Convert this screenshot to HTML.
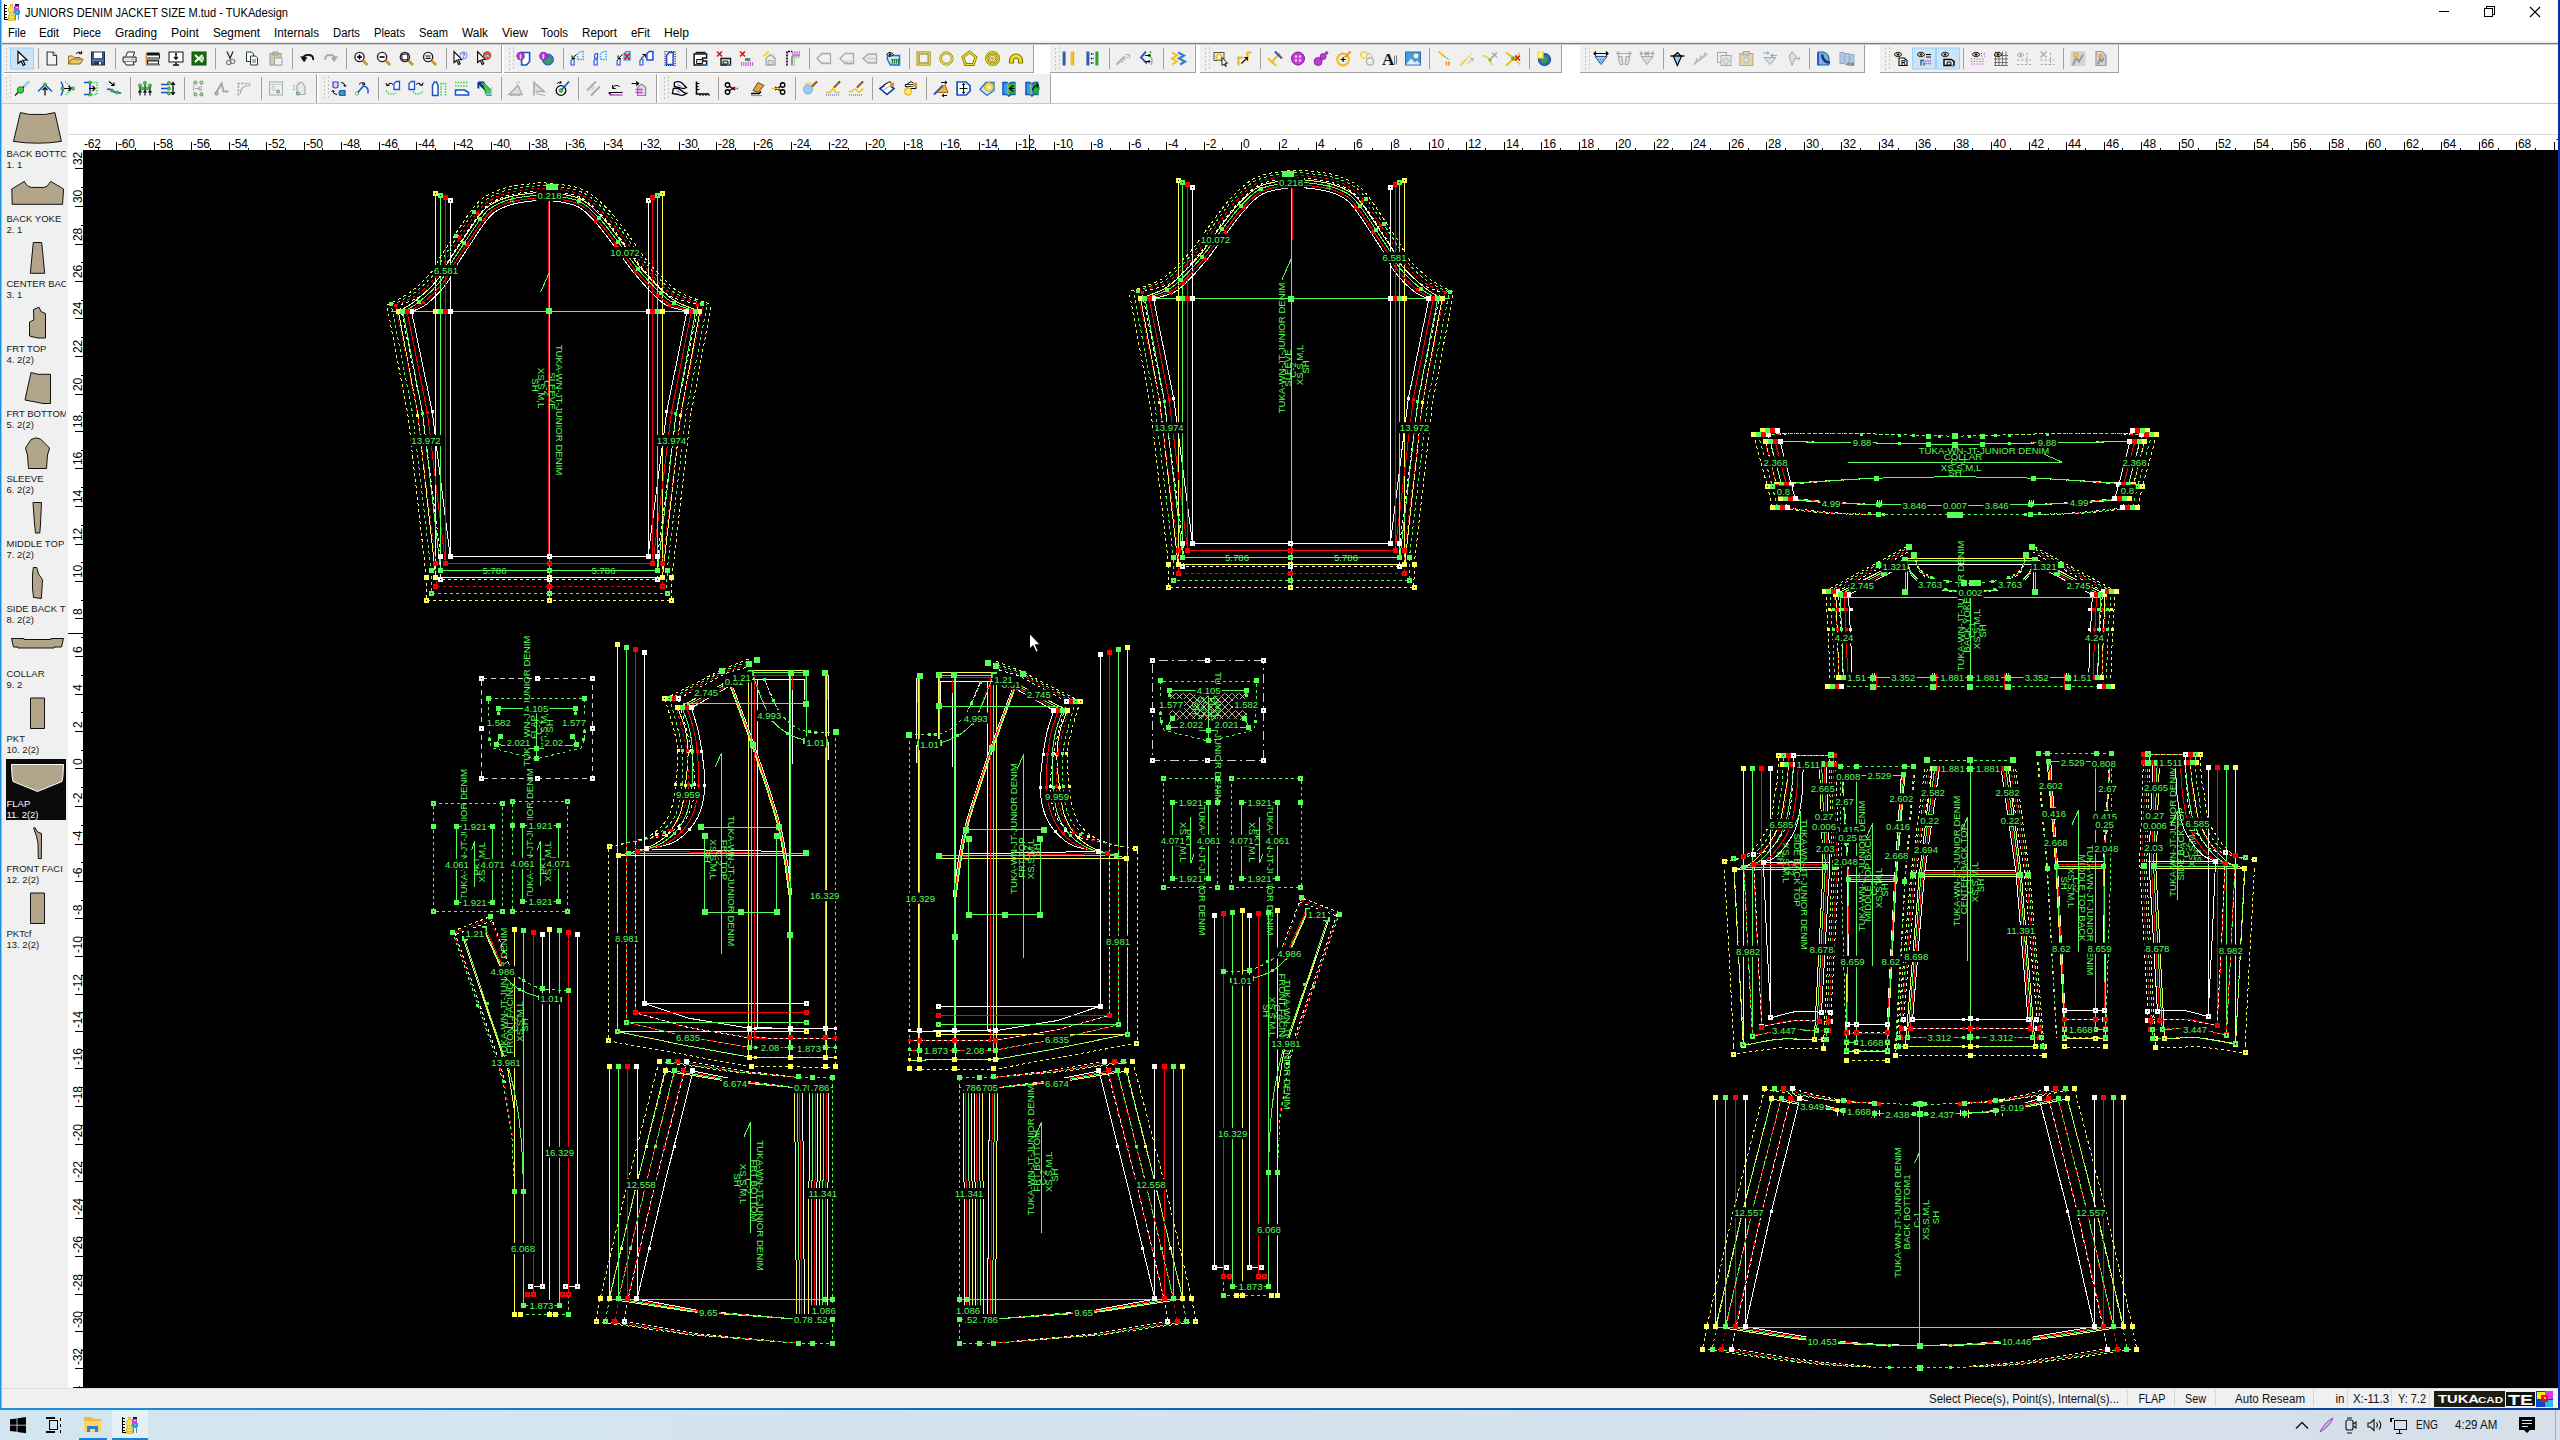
<!DOCTYPE html><html><head><meta charset="utf-8"><title>TUKAdesign</title><style>html,body{margin:0;padding:0;background:#fff;overflow:hidden}body{width:2560px;height:1440px;font-family:"Liberation Sans", sans-serif}svg{display:block;position:absolute;left:0;top:0;font-family:"Liberation Sans", sans-serif}text{white-space:pre}</style></head><body><svg width="2560" height="1440" viewBox="0 0 2560 1440"><defs><linearGradient id="tb" x1="0" x2="1" y1="0" y2="0"><stop offset="0" stop-color="#d2e6f0"/><stop offset="1" stop-color="#d6dfea"/></linearGradient><linearGradient id="bd" x1="0" x2="1" y1="0" y2="0"><stop offset="0" stop-color="#1a8fe0"/><stop offset=".4" stop-color="#0a6cc4"/><stop offset="1" stop-color="#0a3aa8"/></linearGradient><clipPath id="cv"><rect x="83" y="150" width="2475" height="1238"/></clipPath><clipPath id="sb"><rect x="2" y="104" width="64" height="1284"/></clipPath></defs><rect x="0" y="0" width="2560" height="1440" fill="#fff"/><g shape-rendering="crispEdges"><path d="M4.5 4v16M4.5 5.500h2.500M4.500 8.500h2M4.500 11.500h2.500M4.500 14.500h2M4.500 17.500h2.500M4.500 19.500h3" stroke="#000" fill="none"/><path d="M10 4.500h2.500v2.500l1.500 1.500v2.500l-1 1.500 .500 1 1 2v4.500h-6.500v-4.500l1-2 .500-1-1-1.500v-2.500l1.500-1.500z" fill="#f2e25a" stroke="#c8a800" stroke-width=".7"/><path d="M9 12h4M9 15h4.500M8.500 18h5.500" stroke="#d8b820" stroke-width=".7" fill="none"/><path d="M13.500 5.500l1.500 .500 1.500-1 1.500 1 1.500-.500-.800 2.500v1.500h-4.400v-1.500z" fill="#d23be0"/><rect x="15" y="4" width="3.500" height="1.500" fill="#222"/><rect x="16" y="6.500" width="1.500" height="1.500" fill="#f6d8fa"/><path d="M14 10h5.500l.500 4-1 .500v5.500h-1.500v-5.500h-1.500v5.500h-1.500v-5.500l-1-.500z" fill="#3a8fe8"/><rect x="16" y="11" width="1.500" height="1.500" fill="#3fd06a"/></g><text x="25" y="17" font-size="12" fill="#000" textLength="263" lengthAdjust="spacingAndGlyphs">JUNIORS DENIM JACKET SIZE M.tud - TUKAdesign</text><g stroke="#000" stroke-width="1" fill="none" shape-rendering="crispEdges"><path d="M2439 11.5h10"/><path d="M2484.5 8.5h8v8h-8z M2486.5 8.5v-2h8v8h-2"/></g><path d="M2530 7l10 10M2540 7l-10 10" stroke="#000" stroke-width="1.1" fill="none"/><text x="8" y="37" font-size="12" fill="#000" textLength="18" lengthAdjust="spacingAndGlyphs">File</text><text x="39" y="37" font-size="12" fill="#000" textLength="20" lengthAdjust="spacingAndGlyphs">Edit</text><text x="73" y="37" font-size="12" fill="#000" textLength="28" lengthAdjust="spacingAndGlyphs">Piece</text><text x="115" y="37" font-size="12" fill="#000" textLength="42" lengthAdjust="spacingAndGlyphs">Grading</text><text x="171" y="37" font-size="12" fill="#000" textLength="28" lengthAdjust="spacingAndGlyphs">Point</text><text x="213" y="37" font-size="12" fill="#000" textLength="47" lengthAdjust="spacingAndGlyphs">Segment</text><text x="274" y="37" font-size="12" fill="#000" textLength="45" lengthAdjust="spacingAndGlyphs">Internals</text><text x="333" y="37" font-size="12" fill="#000" textLength="27" lengthAdjust="spacingAndGlyphs">Darts</text><text x="374" y="37" font-size="12" fill="#000" textLength="31" lengthAdjust="spacingAndGlyphs">Pleats</text><text x="419" y="37" font-size="12" fill="#000" textLength="29" lengthAdjust="spacingAndGlyphs">Seam</text><text x="462" y="37" font-size="12" fill="#000" textLength="26" lengthAdjust="spacingAndGlyphs">Walk</text><text x="502" y="37" font-size="12" fill="#000" textLength="26" lengthAdjust="spacingAndGlyphs">View</text><text x="541" y="37" font-size="12" fill="#000" textLength="27" lengthAdjust="spacingAndGlyphs">Tools</text><text x="582" y="37" font-size="12" fill="#000" textLength="35" lengthAdjust="spacingAndGlyphs">Report</text><text x="631" y="37" font-size="12" fill="#000" textLength="19" lengthAdjust="spacingAndGlyphs">eFit</text><text x="664" y="37" font-size="12" fill="#000" textLength="25" lengthAdjust="spacingAndGlyphs">Help</text><rect x="2" y="41" width="2556" height="2" fill="#f0f0f0"/><rect x="2" y="43" width="2556" height="1.600" fill="#7a7a7a"/><rect x="2" y="44.600" width="2556" height="59" fill="#fff"/><rect x="4" y="45" width="498" height="28" fill="#f0f0f0"/><rect x="501" y="45" width="1" height="28" fill="#a0a0a0"/><rect x="4" y="72" width="498" height="1" fill="#a0a0a0"/><path d="M6 49h1M10 48h1M6 53h1M10 52h1M6 57h1M10 56h1M6 61h1M10 60h1M6 65h1M10 64h1M6 69h1M10 68h1" stroke="#b4b4b4" stroke-width="1.4" fill="none"/><rect x="10.5" y="48" width="23" height="21" fill="#cce4f7" stroke="#99d1ff" stroke-width="1"/><g transform="translate(14.0,50.5)"><path d="M4 1v12l3-2.500 2.200 4.500 1.800-.900-2.200-4.400 4.200-.200z" stroke="#000" fill="#fff" stroke-width="1.2" /></g><rect x="38.0" y="48" width="1" height="21" fill="#a0a0a0"/><g transform="translate(43.6,50.5)"><path d="M3.500 1.500h6l3.500 3.500v9.500h-9.500z" stroke="#2a3a3a" fill="#f4f4f4" stroke-width="1.1" /><path d="M9.500 1.500v3.500h3.500" stroke="#2a3a3a" fill="#ddd" stroke-width="1" /></g><g transform="translate(67.6,50.5)"><path d="M1 13.500v-8h4l1.500 1.500h6v2" stroke="#8a6a1a" fill="#f3d98a" stroke-width="1" /><path d="M1 13.500l3-5h11.500l-3 5z" stroke="#8a6a1a" fill="#e9c765" stroke-width="1" /><path d="M8.500 3q3-3 5.500 0M14 .500v2.700h-2.700" stroke="#000" fill="none" stroke-width="1" /></g><g transform="translate(90.0,50.5)"><rect x="1.5" y="1.5" width="13" height="13" fill="#3e5c7a" stroke="#1c2c3c"/><rect x="4" y="2" width="8" height="5.5" fill="#fff" stroke="none"/><rect x="2.5" y="9" width="11" height="2" fill="#5a78d8" stroke="none"/><rect x="4.5" y="11" width="7" height="3.5" fill="#26364a" stroke="none"/><rect x="9" y="11.5" width="2" height="2.5" fill="#fff" stroke="none"/></g><rect x="115.0" y="48" width="1" height="21" fill="#a0a0a0"/><g transform="translate(121.6,50.5)"><path d="M4 6l2-4.500h7l-1.500 4.500" stroke="#222" fill="#fff" stroke-width="1" /><path d="M1.500 6.500h13v5h-13z" stroke="#222" fill="#e4e4e4" stroke-width="1" /><path d="M3 11.500l1.500 3h8l-1-3" stroke="#222" fill="#f6f6f6" stroke-width="1" /><rect x="10" y="8" width="2.5" height="1.2" fill="#3fd04a" stroke="none"/></g><g transform="translate(145.0,50.5)"><rect x="1.5" y="2" width="13" height="2.5" fill="#111" stroke="none"/><rect x="1.5" y="4.5" width="13" height="3" fill="#fff" stroke="#111"/><rect x="1.5" y="8" width="13" height="2.5" fill="#8a8a8a" stroke="none"/><rect x="2.5" y="10.5" width="11" height="3" fill="#fff" stroke="#111"/><rect x="1" y="13.5" width="14" height="1.5" fill="#777" stroke="none"/><rect x="0.5" y="3" width="1.5" height="10" fill="#e8962a" stroke="none"/></g><g transform="translate(168.0,50.5)"><rect x="1" y="1.5" width="14" height="10" fill="#fff" stroke="#111"/><path d="M5 14.500h6M8 11.500v3" stroke="#111" fill="none" stroke-width="1.4" /><path d="M8 3.500v5M6 6.500l2 2.200 2-2.200" stroke="#000" fill="none" stroke-width="1.2" /><circle cx="8" cy="3.5" r="1" fill="#000" stroke="#000" stroke-width="0"/></g><g transform="translate(191.0,50.5)"><rect x="1" y="1.5" width="14" height="13" fill="#1e6a12" stroke="#0f4a08"/><path d="M4 4.500l7.500 7M11.500 4.500l-7.500 7" stroke="#fff" fill="none" stroke-width="1.8" /><rect x="9" y="6" width="4" height="4" fill="#b8e0a8" stroke="none"/></g><rect x="215.0" y="48" width="1" height="21" fill="#a0a0a0"/><g transform="translate(222.0,50.5)"><path d="M5 1l3.500 8M11 1l-3 7" stroke="#222" fill="none" stroke-width="1.2" /><circle cx="6.8" cy="12" r="2.2" fill="none" stroke="#777" stroke-width="1.1"/><circle cx="10.5" cy="11" r="2.2" fill="none" stroke="#777" stroke-width="1.1"/></g><g transform="translate(244.0,50.5)"><path d="M2.500 1.500h5l2 2v7.500h-7z" stroke="#2a3a3a" fill="#fff" stroke-width="1" /><path d="M6.500 5.500h5l2 2v7h-7z" stroke="#2a3a3a" fill="#fff" stroke-width="1" /><path d="M8 9.500h4M8 11.500h4" stroke="#2a3a3a" fill="none" stroke-width="0.8" /></g><g transform="translate(268.0,50.5)"><rect x="2" y="3" width="11" height="11.5" fill="#d6c9a6" stroke="#9a9a9a"/><rect x="5" y="1.5" width="5" height="3" fill="#bdbdbd" stroke="#9a9a9a"/><rect x="6.5" y="7.5" width="7.5" height="7" fill="#f2f2f2" stroke="#a2a2a2"/></g><rect x="292.0" y="48" width="1" height="21" fill="#a0a0a0"/><g transform="translate(299.6,50.5)"><path d="M3 9q1-5 6.500-4.500 4.500.500 4 5" stroke="#111" fill="none" stroke-width="1.8" /><path d="M1 6l3.500 5.500 3-4.500z" stroke="#111" fill="#111" stroke-width="0.5" /></g><g transform="translate(322.6,50.5)"><path d="M13 9q-1-5-6.500-4.500-4.500.500-4 5" stroke="#a9a9a9" fill="none" stroke-width="1.8" /><path d="M15 6l-3.500 5.500-3-4.500z" stroke="#a9a9a9" fill="#a9a9a9" stroke-width="0.5" /></g><rect x="346.0" y="48" width="1" height="21" fill="#a0a0a0"/><g transform="translate(353.0,50.5)"><circle cx="6.5" cy="6.5" r="4.6" fill="#fff" stroke="#222" stroke-width="1.4"/><path d="M10 10l4.500 4.500" stroke="#c8962a" fill="none" stroke-width="2.6" /><path d="M4 6.500h5M6.500 4v5" stroke="#000" fill="none" stroke-width="1.6" /></g><g transform="translate(375.6,50.5)"><circle cx="6.5" cy="6.5" r="4.6" fill="#fff" stroke="#222" stroke-width="1.4"/><path d="M10 10l4.500 4.500" stroke="#c8962a" fill="none" stroke-width="2.6" /><path d="M4 6.500h5" stroke="#000" fill="none" stroke-width="1.6" /></g><g transform="translate(398.4,50.5)"><circle cx="6.5" cy="6.5" r="4.6" fill="#fff" stroke="#222" stroke-width="1.4"/><path d="M10 10l4.500 4.500" stroke="#c8962a" fill="none" stroke-width="2.6" /><rect x="3.6" y="3.6" width="5.8" height="5.8" fill="none" stroke="#000"/></g><g transform="translate(421.6,50.5)"><circle cx="6.5" cy="6.5" r="4.6" fill="#fff" stroke="#222" stroke-width="1.4"/><path d="M10 10l4.500 4.500" stroke="#c8962a" fill="none" stroke-width="2.6" /><path d="M4 5.500h5M4 7.800h5" stroke="#000" fill="none" stroke-width="1.2" /></g><rect x="446.0" y="48" width="1" height="21" fill="#a0a0a0"/><g transform="translate(452.0,50.5)"><path d="M2 1v11l2.600-2.200 2 4.200 1.600-.800-2-4 3.600-.200z" stroke="#000" fill="#fff" stroke-width="1.1" /><circle cx="11.5" cy="5" r="3.6" fill="#e8eefc" stroke="#6a80d8" stroke-width="1"/><text x="9.600" y="7.500" font-size="6.500" font-weight="bold" fill="#3a58c8">?</text></g><g transform="translate(475.6,50.5)"><path d="M2 1v11l2.600-2.200 2 4.200 1.600-.800-2-4 3.600-.200z" stroke="#000" fill="#fff" stroke-width="1.1" /><circle cx="11.5" cy="5" r="3.4" fill="#3a8fe8" stroke="#e23a2a" stroke-width="1.6"/><path d="M9.500 6.500q2-3 4 0" stroke="#f0c020" fill="none" stroke-width="1.4" /></g><rect x="504" y="45" width="530" height="28" fill="#f0f0f0"/><rect x="1033" y="45" width="1" height="28" fill="#a0a0a0"/><rect x="504" y="72" width="530" height="1" fill="#a0a0a0"/><path d="M509 49h1M513 48h1M509 53h1M513 52h1M509 57h1M513 56h1M509 61h1M513 60h1M509 65h1M513 64h1M509 69h1M513 68h1" stroke="#b4b4b4" stroke-width="1.4" fill="none"/><g transform="translate(515.6,50.5)"><path d="M6 2h8v9l-3 3.500h-5z" stroke="#1a4fd0" fill="#fff" stroke-width="1.6" /><circle cx="5" cy="5.5" r="3.8" fill="#c43ad8" stroke="#7a1a98" stroke-width="0.8"/><text x="3.900" y="8" font-size="7" font-weight="bold" fill="#fff">i</text></g><g transform="translate(538.4,50.5)"><circle cx="9.5" cy="9" r="5.6" fill="#3a78c8" stroke="#1f4f8a" stroke-width="0.8"/><path d="M6 10q3-4 7-1 0 4-4 5z" stroke="#3ea04a" fill="#3ea04a" stroke-width="0.3" /><circle cx="5" cy="5.5" r="3.8" fill="#c43ad8" stroke="#7a1a98" stroke-width="0.8"/><text x="3.900" y="8" font-size="7" font-weight="bold" fill="#fff">i</text></g><rect x="563.0" y="48" width="1" height="21" fill="#a0a0a0"/><g transform="translate(569.6,50.5)"><path d="M1.500 14.500v-4.500l1.500-1.500h1.500v6z" stroke="#1a4fd0" fill="#fff" stroke-width="1.1" /><path d="M8 9v-6l2.500-2h3v8z" stroke="#2a8fe0" fill="none" stroke-width="1.3" stroke-dasharray="1.200 1.200"/><path d="M7 4l-4.500 4M2.500 5v3h3" stroke="#000" fill="none" stroke-width="1" /></g><g transform="translate(592.6,50.5)"><path d="M1.500 14.500v-4.500l1.500-1.500h1.500v6z" stroke="#1a4fd0" fill="#fff" stroke-width="1.1" /><path d="M2 7.500v-3l1.500-1.500h1.500v4.500z" stroke="#1a4fd0" fill="#fff" stroke-width="1.1" /><path d="M8 9v-6l2.500-2h3v8z" stroke="#2a8fe0" fill="none" stroke-width="1.3" stroke-dasharray="1.200 1.200"/></g><g transform="translate(615.6,50.5)"><path d="M1.500 14.500v-4.500l1.500-1.500h1.500v6z" stroke="#1a4fd0" fill="#fff" stroke-width="1.1" /><path d="M8.500 9.500v-6.500l2.500-2h3.500v8.500z" stroke="#2a8fe0" fill="#9ccdf0" stroke-width="1.2" /><path d="M9 3l5 6M14 3l-5 6" stroke="#e01010" fill="none" stroke-width="1.6" /><path d="M7 4l-4.500 4M2.500 5v3h3" stroke="#000" fill="none" stroke-width="1" /></g><g transform="translate(638.4,50.5)"><path d="M1.500 14.500v-4.500l1.500-1.500h1.500v6z" stroke="#1a4fd0" fill="#fff" stroke-width="1.1" /><path d="M8.500 9.500v-6.500l2.500-2h3.500v8.500z" stroke="#1a4fd0" fill="#fff" stroke-width="1.5" /><path d="M2.500 8l4.500-4M7 7v-3h-3" stroke="#000" fill="none" stroke-width="1" /></g><g transform="translate(661.6,50.5)"><path d="M5 14v-9l2.500-3h4v12z" stroke="#1a4fd0" fill="#fff" stroke-width="1.5" /><path d="M3.500 15v-14h10v14z" stroke="#000" fill="none" stroke-width="1.1" stroke-dasharray="1 1.200"/></g><rect x="686.0" y="48" width="1" height="21" fill="#a0a0a0"/><g transform="translate(692.6,50.5)"><path d="M1.500 3.500h12.500v4h-4v3h4v4h-12.500z" stroke="#111" fill="#fff" stroke-width="1.5" /><path d="M3 2h10" stroke="#111" fill="none" stroke-width="1.4" /><path d="M4 9h6v4h-6z" stroke="#111" fill="#ddd" stroke-width="1" /><path d="M10 14.500h5" stroke="#2a8fe0" fill="none" stroke-width="1.4" /></g><g transform="translate(716.0,50.5)"><path d="M5 8h9.500v6.500h-9.500z" stroke="#111" fill="#fff" stroke-width="1.4" /><path d="M7 10.500h5v3h-5z" stroke="#111" fill="#ddd" stroke-width="1" /><path d="M1 1l5 5M6 1l-5 5" stroke="#e01010" fill="none" stroke-width="1.6" /><path d="M11 14.500h4" stroke="#2a8fe0" fill="none" stroke-width="1.2" /></g><g transform="translate(739.0,50.5)"><path d="M1 1l5 5M6 1l-5 5" stroke="#e01010" fill="none" stroke-width="1.6" /><rect x="6" y="7.5" width="5" height="3" fill="#3ea04a" stroke="none"/><path d="M2 12.500h13M2 14.500h13" stroke="#c43ad8" fill="none" stroke-width="1.6" stroke-dasharray="1.200 1"/><path d="M11 8v4" stroke="#c43ad8" fill="none" stroke-width="1.2" stroke-dasharray="1 1"/></g><g transform="translate(762.0,50.5)"><path d="M1 6l6-5" stroke="#f0e020" fill="none" stroke-width="2" /><path d="M4 8l4.500-4 4.500 4v6.500h-9z" stroke="#a9a9a9" fill="none" stroke-width="1.4" /><path d="M6 10h5v4h-5z" stroke="#a9a9a9" fill="#ddd" stroke-width="1" /><path d="M12 3v5" stroke="#a9a9a9" fill="none" stroke-width="1" stroke-dasharray="1 1"/></g><g transform="translate(785.0,50.5)"><path d="M2 15v-14h5" stroke="#000" fill="none" stroke-width="1.6" stroke-dasharray="2 1"/><path d="M7 1.500h8M7 3.500h8" stroke="#c43ad8" fill="none" stroke-width="1.5" stroke-dasharray="1.200 1"/><path d="M7 15v-7q0-3 3-3h5" stroke="#999" fill="none" stroke-width="2.2" /><path d="M9.500 15v-6q0-2 2-2h3.500" stroke="#3fd04a" fill="none" stroke-width="1.2" stroke-dasharray="1 1"/></g><rect x="809.0" y="48" width="1" height="21" fill="#a0a0a0"/><g transform="translate(816.0,50.5)"><path d="M1 8l5-5h8.500v10h-8.500z" stroke="#a9a9a9" fill="none" stroke-width="1.3" /><path d="M6 13v-2M8 13v-2M10 13v-2M12 13v-2M6 3.500h8" stroke="#a9a9a9" fill="none" stroke-width="1" stroke-dasharray="1 1"/></g><g transform="translate(839.0,50.5)"><path d="M1 8l5-5h8.500v10h-8.500z" stroke="#a9a9a9" fill="none" stroke-width="1.3" /><path d="M6 10l4 4M10 10l-4 4M12 10v4" stroke="#a9a9a9" fill="none" stroke-width="1" /></g><g transform="translate(862.0,50.5)"><path d="M1 8l5-4.500h8.500v9h-8.500z" stroke="#a9a9a9" fill="#e6e6e6" stroke-width="1.3" /><path d="M6 8h7" stroke="#a9a9a9" fill="none" stroke-width="1" stroke-dasharray="1 1"/></g><g transform="translate(885.0,50.5)"><path d="M2 8l1-3h11.500v9.500h-9z" stroke="#1a6fd0" fill="#cfe6fa" stroke-width="1.5" /><rect x="6" y="8.5" width="8" height="4.5" fill="#1e7a2a" stroke="none"/><path d="M6.500 9v4M8.500 9v4M10.500 9v4M12.500 9v4" stroke="#d8f0c0" fill="none" stroke-width="0.8" /><path d="M1.500 4q3.500-4 7 0-3.500 3.500-7 0z" stroke="#000" fill="#fff" stroke-width="1" /><circle cx="5" cy="4" r="1.3" fill="#000" stroke="#000" stroke-width="0"/></g><rect x="909.0" y="48" width="1" height="21" fill="#a0a0a0"/><g transform="translate(915.6,50.5)"><rect x="1.5" y="1.5" width="13" height="13" fill="none" stroke="#8a7a00"/><rect x="2.5" y="2.5" width="11" height="11" fill="none" stroke="#f4e020"/><rect x="3.5" y="3.5" width="9" height="9" fill="none" stroke="#8a7a00"/></g><g transform="translate(938.4,50.5)"><circle cx="8" cy="8" r="6.6" fill="none" stroke="#8a7a00" stroke-width="1"/><circle cx="8" cy="8" r="5.7" fill="none" stroke="#f4e020" stroke-width="1.2"/><circle cx="8" cy="8" r="4.8" fill="none" stroke="#8a7a00" stroke-width="0.8"/></g><g transform="translate(961.4,50.5)"><path d="M8 1.500l6.500 5-2.500 7.500h-8l-2.500-7.500z" stroke="#8a7a00" fill="none" stroke-width="2.8" /><path d="M8 1.500l6.500 5-2.500 7.500h-8l-2.500-7.500z" stroke="#f4e020" fill="none" stroke-width="1.2" /></g><g transform="translate(984.6,50.5)"><circle cx="8" cy="8" r="6.5" fill="none" stroke="#8a7a00" stroke-width="2.2"/><circle cx="8" cy="8" r="6.5" fill="none" stroke="#f4e020" stroke-width="1"/><circle cx="8" cy="8" r="3.8" fill="none" stroke="#8a7a00" stroke-width="2.2"/><circle cx="8" cy="8" r="3.8" fill="none" stroke="#f4e020" stroke-width="1"/><circle cx="8" cy="8" r="1.2" fill="#f4e020" stroke="#8a7a00" stroke-width="0.8"/></g><g transform="translate(1008.0,50.5)"><path d="M1.500 12.500v-2.500a6.500 6.500 0 0 1 13 0v2.500h-4v-2.500a2.500 2.500 0 0 0-5 0v2.500z" stroke="#8a7a00" fill="#f4e020" stroke-width="1.2" /></g><rect x="1050" y="45" width="146" height="28" fill="#f0f0f0"/><rect x="1195" y="45" width="1" height="28" fill="#a0a0a0"/><rect x="1050" y="72" width="146" height="1" fill="#a0a0a0"/><path d="M1055 49h1M1059 48h1M1055 53h1M1059 52h1M1055 57h1M1059 56h1M1055 61h1M1059 60h1M1055 65h1M1059 64h1M1055 69h1M1059 68h1" stroke="#b4b4b4" stroke-width="1.4" fill="none"/><g transform="translate(1060.6,50.5)"><rect x="2" y="1" width="3" height="14" fill="#3a5aa8" stroke="none"/><rect x="10" y="1" width="2.6" height="14" fill="#f0c020" stroke="none"/><rect x="12.6" y="1" width="1" height="14" fill="#e8962a" stroke="none"/></g><g transform="translate(1084.4,50.5)"><rect x="2" y="1" width="3" height="14" fill="#3a5aa8" stroke="none"/><rect x="11" y="1" width="3" height="14" fill="#22a82a" stroke="none"/><path d="M6.500 3.500h3M6.500 8h3M6.500 12.500h3" stroke="#000" fill="none" stroke-width="1.3" stroke-dasharray="1.500 1"/></g><rect x="1109.0" y="48" width="1" height="21" fill="#a0a0a0"/><g transform="translate(1115.6,50.5)"><path d="M1 14l8-8" stroke="#9ab0c8" fill="none" stroke-width="2" /><path d="M6 12l8-8M14 8v-4h-4" stroke="#a9a9a9" fill="none" stroke-width="1.1" stroke-dasharray="2 1"/></g><g transform="translate(1139.0,50.5)"><path d="M7 1l-5 6 6 6" stroke="#3a5aa8" fill="none" stroke-width="2" /><path d="M12 1q-2 3 0 6t0 7" stroke="#22a82a" fill="none" stroke-width="1.4" stroke-dasharray="1.500 1"/><path d="M6 5h5M6 11h5M9.500 3.500l1.500 1.500-1.500 1.500M9.500 9.500l1.500 1.500-1.500 1.500" stroke="#000" fill="none" stroke-width="1" /></g><rect x="1163.0" y="48" width="1" height="21" fill="#a0a0a0"/><g transform="translate(1170.0,50.5)"><path d="M2 2l5 3-5 3 5 3-5 3" stroke="#f0c020" fill="none" stroke-width="2" /><path d="M8 2l6 3-5 3 6 3-5 3" stroke="#3a78c8" fill="none" stroke-width="2.2" /></g><rect x="1200" y="45" width="362" height="28" fill="#f0f0f0"/><rect x="1561" y="45" width="1" height="28" fill="#a0a0a0"/><rect x="1200" y="72" width="362" height="1" fill="#a0a0a0"/><path d="M1205 49h1M1209 48h1M1205 53h1M1209 52h1M1205 57h1M1209 56h1M1205 61h1M1209 60h1M1205 65h1M1209 64h1M1205 69h1M1209 68h1" stroke="#b4b4b4" stroke-width="1.4" fill="none"/><g transform="translate(1213.0,50.5)"><rect x="1" y="2" width="10" height="8" fill="none" stroke="#555"/><circle cx="6" cy="6.5" r="2.8" fill="none" stroke="#f0c020" stroke-width="1.6"/><path d="M9 7v8l2-1.500 1.500 2.500 1-.500-1.500-2.500 2.500-.300z" stroke="#000" fill="#fff" stroke-width="0.9" /></g><g transform="translate(1236.4,50.5)"><path d="M2 15v-8h5M11 10v-8h4" stroke="#e8b81a" fill="none" stroke-width="2.2" /><path d="M5 13l6-6M11 10v-3h-3" stroke="#000" fill="none" stroke-width="1.1" /></g><rect x="1260.0" y="48" width="1" height="21" fill="#a0a0a0"/><g transform="translate(1267.0,50.5)"><path d="M1 8l8 7" stroke="#f0c020" fill="none" stroke-width="2.2" /><path d="M5 11l8-8" stroke="#f0c020" fill="none" stroke-width="2.2" /><path d="M8 1l7 7" stroke="#3a5aa8" fill="none" stroke-width="2.2" /></g><g transform="translate(1290.0,50.5)"><circle cx="8" cy="8" r="6.5" fill="#c43ad8" stroke="#7a1a98" stroke-width="1"/><circle cx="6" cy="6" r="1.2" fill="#f4d8fa" stroke="none" stroke-width="0"/><circle cx="10" cy="6" r="1.2" fill="#f4d8fa" stroke="none" stroke-width="0"/><circle cx="6" cy="10" r="1.2" fill="#f4d8fa" stroke="none" stroke-width="0"/><circle cx="10" cy="10" r="1.2" fill="#f4d8fa" stroke="none" stroke-width="0"/></g><g transform="translate(1312.6,50.5)"><circle cx="5.5" cy="11" r="4" fill="#c43ad8" stroke="#7a1a98" stroke-width="0.8"/><circle cx="10.5" cy="6" r="3" fill="#c43ad8" stroke="#7a1a98" stroke-width="0.8"/><circle cx="14" cy="2.5" r="1.4" fill="#c43ad8" stroke="#7a1a98" stroke-width="0.6"/></g><g transform="translate(1335.6,50.5)"><circle cx="7.5" cy="9" r="5.8" fill="none" stroke="#f0c020" stroke-width="2.2"/><path d="M7.500 6.500v5M5 9h5" stroke="#000" fill="none" stroke-width="1.2" /><path d="M9 7l6-6" stroke="#e8962a" fill="none" stroke-width="2" /></g><g transform="translate(1359.0,50.5)"><circle cx="5" cy="4.5" r="3.2" fill="none" stroke="#e8d84a" stroke-width="1.6"/><circle cx="11" cy="11" r="3.6" fill="none" stroke="#a9a9a9" stroke-width="1.3"/><path d="M9 3q4 0 4 4" stroke="#a9a9a9" fill="none" stroke-width="1.1" stroke-dasharray="1.500 1"/></g><g transform="translate(1382.0,50.5)"><text x="0" y="14.500" font-size="17" font-weight="bold" font-family="Liberation Serif, serif" fill="#111">A</text><path d="M12.500 5v9M14.500 5v9" stroke="#777" fill="none" stroke-width="1" /></g><g transform="translate(1405.0,50.5)"><rect x="0.5" y="1.5" width="15" height="13" fill="#4a98e0" stroke="#2a68b0"/><circle cx="11" cy="5.5" r="2.4" fill="#fdf6c8" stroke="none" stroke-width="0"/><path d="M1 14l5-6 4 4 2-2 3 3v1z" stroke="none" fill="#d8ecfa" stroke-width="0" /></g><rect x="1429.0" y="48" width="1" height="21" fill="#a0a0a0"/><g transform="translate(1436.4,50.5)"><path d="M2 1l6 5" stroke="#f0c020" fill="none" stroke-width="2" /><path d="M8 6l5 3" stroke="#3fd04a" fill="none" stroke-width="1.4" stroke-dasharray="1.500 1"/><path d="M10 11v4M12.500 11v4" stroke="#e8962a" fill="none" stroke-width="1.6" /></g><g transform="translate(1459.0,50.5)"><path d="M1 15l6-6" stroke="#e8d84a" fill="none" stroke-width="2" /><path d="M7 9l7-7" stroke="#e8d84a" fill="none" stroke-width="2" stroke-dasharray="2 1.500"/><path d="M9 13l5-5M14 11v-3h-3" stroke="#a9a9a9" fill="none" stroke-width="1" /></g><g transform="translate(1482.0,50.5)"><path d="M1 5q5 1 7 5t2 5" stroke="#e8d84a" fill="none" stroke-width="2" /><path d="M7 10l7-7" stroke="#a9a9a9" fill="none" stroke-width="1.4" /><path d="M10 2l5 5M15 2l-5 5" stroke="#a9a9a9" fill="none" stroke-width="1.2" /><circle cx="8" cy="9.5" r="1.5" fill="#3fd04a" stroke="none" stroke-width="0"/></g><g transform="translate(1505.0,50.5)"><path d="M1 2l8 6-8 7" stroke="#f0c020" fill="none" stroke-width="2" /><path d="M9 8l6-6M9 8l6 6" stroke="#f0c020" fill="none" stroke-width="1.2" /><path d="M10 5l5 5M15 5l-5 5" stroke="#e01010" fill="none" stroke-width="1.6" /><circle cx="8" cy="8" r="1.6" fill="#3fd04a" stroke="#1a7a22" stroke-width="0.5"/></g><rect x="1529.0" y="48" width="1" height="21" fill="#a0a0a0"/><g transform="translate(1536.0,50.5)"><circle cx="8.5" cy="9" r="6.2" fill="#2a68c0" stroke="#1a3f7a" stroke-width="0.8"/><path d="M5 8q2-3 5-2 3 2 1 5-2 3-5 1-2-2-1-4z" stroke="none" fill="#3ea04a" stroke-width="0" /><path d="M2 1.500h5v6h-5z" stroke="#f0d820" fill="#fff8a0" stroke-width="1.2" /></g><rect x="1580" y="45" width="285" height="28" fill="#f0f0f0"/><rect x="1864" y="45" width="1" height="28" fill="#a0a0a0"/><rect x="1580" y="72" width="285" height="1" fill="#a0a0a0"/><path d="M1585 49h1M1589 48h1M1585 53h1M1589 52h1M1585 57h1M1589 56h1M1585 61h1M1589 60h1M1585 65h1M1589 64h1M1585 69h1M1589 68h1" stroke="#b4b4b4" stroke-width="1.4" fill="none"/><g transform="translate(1593.0,50.5)"><path d="M2 6h12l-6 8z" stroke="#2a5a9a" fill="#9ccdf0" stroke-width="1" /><path d="M1 3h14M3 1l-2 2 2 2M13 1l2 2-2 2" stroke="#000" fill="none" stroke-width="1.2" /><path d="M5 9h6M6.500 11h3" stroke="#2a5a9a" fill="none" stroke-width="0.8" stroke-dasharray="1 1"/></g><g transform="translate(1616.0,50.5)"><path d="M2 6h4l1 8h-3zM10 6h4l-2 8h-3z" stroke="#a9a9a9" fill="#cfe0ee" stroke-width="1" /><path d="M1 3h14M3 1l-2 2 2 2M13 1l2 2-2 2" stroke="#a9a9a9" fill="none" stroke-width="1.1" /></g><g transform="translate(1639.0,50.5)"><path d="M2 6h12l-6 8z" stroke="#a9a9a9" fill="#cfe0ee" stroke-width="1" /><path d="M1 3h14M3 1l-2 2 2 2M13 1l2 2-2 2M6 1l4 4M10 1l-4 4" stroke="#a9a9a9" fill="none" stroke-width="1.1" /></g><rect x="1663.0" y="48" width="1" height="21" fill="#a0a0a0"/><g transform="translate(1669.4,50.5)"><path d="M8 2l4 4-4 9-4-9z" stroke="#000" fill="#9ccdf0" stroke-width="1.2" /><path d="M1 5.500h14" stroke="#000" fill="none" stroke-width="1.4" /></g><g transform="translate(1692.6,50.5)"><path d="M1 14l14-11" stroke="#a9a9a9" fill="none" stroke-width="1.3" /><path d="M3 12l1-4 2 2zM7 9l1-4 2 2zM11 6l1-4 2 2z" stroke="#a9a9a9" fill="#cfe0ee" stroke-width="0.8" /></g><g transform="translate(1716.0,50.5)"><rect x="1.5" y="2" width="9" height="10" fill="#eee" stroke="#a9a9a9"/><rect x="5" y="5" width="10" height="10" fill="#e6e6e6" stroke="#a9a9a9"/><path d="M10 7l3 3-3 5-3-5z" stroke="#a9a9a9" fill="#cfe0ee" stroke-width="0.8" /></g><g transform="translate(1738.4,50.5)"><rect x="1.5" y="3" width="13" height="12" fill="#e8d4a0" stroke="#a9a9a9"/><rect x="5" y="1" width="6" height="3.5" fill="#ccc" stroke="#a9a9a9"/><path d="M8 6l3 3-3 5-3-5z" stroke="#a9a9a9" fill="#cfe0ee" stroke-width="0.8" /></g><g transform="translate(1762.0,50.5)"><path d="M2 7h12l-6 7z" stroke="#a9a9a9" fill="#cfe0ee" stroke-width="1" /><path d="M1 2.500h6M9 5h6M5 1l2 1.500-2 1.500M11 3.500l-2 1.500 2 1.500" stroke="#a9a9a9" fill="none" stroke-width="1.1" /></g><g transform="translate(1785.0,50.5)"><path d="M7 1l4 5-4 9-3-9z" stroke="#a9a9a9" fill="#cfe0ee" stroke-width="1" /><path d="M10 8h5M13 6l2 2-2 2" stroke="#a9a9a9" fill="none" stroke-width="1" /></g><rect x="1809.0" y="48" width="1" height="21" fill="#a0a0a0"/><g transform="translate(1816.0,50.5)"><path d="M2 1.500h6q5 2 5 6v7h-11z" stroke="#2a5a9a" fill="#7ab0e0" stroke-width="1" /><path d="M6 4q1 8 8 8" stroke="#123a7a" fill="none" stroke-width="2.4" /><path d="M2 1.500v13.500" stroke="#1a4fd0" fill="none" stroke-width="1.6" /></g><g transform="translate(1839.0,50.5)"><path d="M1 2h4v11h-4zM6 3h4v11h-4zM11 4h4v11h-4z" stroke="#8aa8c8" fill="#b8cce0" stroke-width="1" /><rect x="8" y="12" width="3" height="3" fill="#888" stroke="none"/><rect x="12" y="12" width="3" height="3" fill="#888" stroke="none"/></g><rect x="1880" y="45" width="239" height="28" fill="#f0f0f0"/><rect x="2118" y="45" width="1" height="28" fill="#a0a0a0"/><rect x="1880" y="72" width="239" height="1" fill="#a0a0a0"/><path d="M1885 49h1M1889 48h1M1885 53h1M1889 52h1M1885 57h1M1889 56h1M1885 61h1M1889 60h1M1885 65h1M1889 64h1M1885 69h1M1889 68h1" stroke="#b4b4b4" stroke-width="1.4" fill="none"/><g transform="translate(1893.0,50.5)"><path d="M1 4q4-4.500 8 0-4 4.500-8 0z" stroke="#000" fill="#fff" stroke-width="1" /><circle cx="5" cy="4" r="1.5" fill="#000" stroke="#e8962a" stroke-width="0.8"/><path d="M6 7.500h5l3 2.500v5h-8z" stroke="#000" fill="#fff" stroke-width="1.1" /><text x="8" y="14" font-size="6.500" font-weight="bold" fill="#000">R</text></g><rect x="1912.5" y="48" width="23" height="21" fill="#cce4f7" stroke="#99d1ff" stroke-width="1"/><g transform="translate(1916.0,50.5)"><path d="M1 4q4-4.500 8 0-4 4.500-8 0z" stroke="#000" fill="#fff" stroke-width="1" /><circle cx="5" cy="4" r="1.5" fill="#000" stroke="#e8962a" stroke-width="0.8"/><path d="M10 4h5M10 6.500h5" stroke="#000" fill="none" stroke-width="1.2" /><path d="M10 4h5" stroke="#f0e020" fill="none" stroke-width="1" transform="translate(0,1.200)"/><path d="M5 15v-5h3M8 15v-3" stroke="#1a4fd0" fill="none" stroke-width="1.4" /><path d="M7 10.500h8M9.500 13h5.500" stroke="#c43ad8" fill="none" stroke-width="1.3" stroke-dasharray="1.200 1"/><path d="M6.500 15v-4" stroke="#f0e020" fill="none" stroke-width="1.2" /></g><rect x="1936.5" y="48" width="23" height="21" fill="#cce4f7" stroke="#99d1ff" stroke-width="1"/><g transform="translate(1940.0,50.5)"><path d="M1 4q4-4.500 8 0-4 4.500-8 0z" stroke="#000" fill="#fff" stroke-width="1" /><circle cx="5" cy="4" r="1.5" fill="#000" stroke="#e8962a" stroke-width="0.8"/><path d="M4 9h7l3 2v4h-10z" stroke="#000" fill="#fff" stroke-width="1.5" /><path d="M7 11.500h4v3h-4z" stroke="#000" fill="#ddd" stroke-width="1" /><path d="M11 15h4" stroke="#2a8fe0" fill="none" stroke-width="1.2" /></g><rect x="1963.0" y="48" width="1" height="21" fill="#a0a0a0"/><g transform="translate(1970.0,50.5)"><path d="M2 4q4-4.500 8 0-4 4.500-8 0z" stroke="#000" fill="#fff" stroke-width="1" /><circle cx="6" cy="4" r="1.5" fill="#000" stroke="#e8962a" stroke-width="0.8"/><path d="M1 8.500h14M1 11h14M1 13.500h14" stroke="#c43ad8" fill="none" stroke-width="1.2" stroke-dasharray="1.200 1.600"/><path d="M11 3h4M11 5.500h4" stroke="#c43ad8" fill="none" stroke-width="1.2" stroke-dasharray="1.200 1.600"/></g><g transform="translate(1993.0,50.5)"><path d="M2.500 1v14M6 1v14M9.500 1v14M13 1v14M1 5h14M1 8.500h14M1 12h14M1 15h14" stroke="#666" fill="none" stroke-width="0.9" /><path d="M1 4q4-4.500 8 0-4 4.500-8 0z" stroke="#000" fill="#fff" stroke-width="1" /><circle cx="5" cy="4" r="1.5" fill="#000" stroke="#e8962a" stroke-width="0.8"/></g><g transform="translate(2016.0,50.5)"><path d="M1 4.500q3.500-4 7 0-3.500 4-7 0z" stroke="#a9a9a9" fill="none" stroke-width="1" /><circle cx="4.5" cy="4.5" r="1.2" fill="#a9a9a9" stroke="#a9a9a9" stroke-width="0"/><path d="M1 9.500h14M1 14h14M11 2v12" stroke="#a9a9a9" fill="none" stroke-width="1" stroke-dasharray="2.500 1.500"/></g><g transform="translate(2039.5,50.5)"><path d="M1 1l6 6M7 1l-6 6" stroke="#a9a9a9" fill="none" stroke-width="1.2" /><path d="M1 9.500h14M1 14h14M11 2v12" stroke="#a9a9a9" fill="none" stroke-width="1" stroke-dasharray="2.500 1.500"/></g><rect x="2063.0" y="48" width="1" height="21" fill="#a0a0a0"/><g transform="translate(2070.0,50.5)"><rect x="0.5" y="0.5" width="15" height="15" fill="#d4d4d4" stroke="none"/><path d="M3 15l3-8 3 4 4-7" stroke="#9a9a9a" fill="none" stroke-width="2" /><circle cx="6" cy="4.5" r="2.8" fill="#e8a838" stroke="none" stroke-width="0"/><path d="M3 4.500h6M6 1.500v6" stroke="#f4d070" fill="none" stroke-width="0.8" /></g><g transform="translate(2093.0,50.5)"><path d="M3 1h6l4 4v10h-10z" stroke="#9a9a9a" fill="#d4d4d4" stroke-width="1.2" /><path d="M5 14l2-6 2 3 2-4" stroke="#8a8a8a" fill="none" stroke-width="1.6" /><circle cx="7.5" cy="5.5" r="2.2" fill="#e8a838" stroke="none" stroke-width="0"/></g><rect x="2" y="45" width="2" height="59" fill="#f0f0f0"/><rect x="4" y="74" width="313" height="30" fill="#f0f0f0"/><rect x="316" y="74" width="1" height="30" fill="#a0a0a0"/><rect x="4" y="103" width="313" height="1" fill="#a0a0a0"/><path d="M6 78h1M10 77h1M6 82h1M10 81h1M6 86h1M10 85h1M6 90h1M10 89h1M6 94h1M10 93h1M6 98h1M10 97h1" stroke="#b4b4b4" stroke-width="1.4" fill="none"/><g transform="translate(14.0,80.5)"><path d="M1 15l14-14" stroke="#222" fill="none" stroke-width="1.4" /><path d="M10 6l5-5" stroke="#9ccdf0" fill="none" stroke-width="2.2" /><circle cx="6.5" cy="9.5" r="3.2" fill="#3fd04a" stroke="#1a7a22" stroke-width="1"/></g><g transform="translate(37.0,80.5)"><path d="M1 11l7-7 7 7" stroke="#1a4fd0" fill="none" stroke-width="1.5" /><path d="M8 15v-8M5.500 9.500l2.500-2.500 2.500 2.500" stroke="#000" fill="none" stroke-width="1.2" /><circle cx="8" cy="4" r="1.6" fill="#3fd04a" stroke="#1a7a22" stroke-width="0.6"/></g><g transform="translate(60.0,80.5)"><path d="M1 1q4 7 0 14" stroke="#1a4fd0" fill="none" stroke-width="1.5" /><path d="M5 1l8 7-8 7" stroke="#3fd04a" fill="none" stroke-width="1.5" stroke-dasharray="1.500 1.200"/><path d="M3 8h8M8.500 5.500l2.500 2.500-2.500 2.500" stroke="#000" fill="none" stroke-width="1.2" /><circle cx="2.5" cy="8" r="1.6" fill="#3fd04a" stroke="#1a7a22" stroke-width="0.6"/><circle cx="13" cy="8" r="1.6" fill="#3fd04a" stroke="#1a7a22" stroke-width="0.6"/></g><g transform="translate(83.0,80.5)"><path d="M1 2h6v12h-6" stroke="#1a4fd0" fill="none" stroke-width="1.6" /><path d="M8 2h6v12h-6" stroke="#3fd04a" fill="none" stroke-width="1.5" stroke-dasharray="1.500 1.200"/><path d="M6 8h6M9.500 5.500l2.500 2.500-2.500 2.500" stroke="#000" fill="none" stroke-width="1.2" /><circle cx="7" cy="2" r="1.6" fill="#3fd04a" stroke="#1a7a22" stroke-width="0.6"/><circle cx="7" cy="14" r="1.6" fill="#3fd04a" stroke="#1a7a22" stroke-width="0.6"/></g><g transform="translate(106.0,80.5)"><path d="M1 9q3-1 5 1t5 2 4 1" stroke="#1a4fd0" fill="none" stroke-width="1.7" /><path d="M3 1l5 4M8 2v3h-3" stroke="#000" fill="none" stroke-width="1.1" /><circle cx="6" cy="10" r="1.6" fill="#3fd04a" stroke="#1a7a22" stroke-width="0.6"/><circle cx="11" cy="12" r="1.6" fill="#3fd04a" stroke="#1a7a22" stroke-width="0.6"/></g><rect x="130.0" y="77" width="1" height="23" fill="#a0a0a0"/><g transform="translate(137.0,80.5)"><path d="M3 15v-9M8 15v-11M13 15v-9M1.500 12l1.500-2 1.500 2M6.500 12l1.500-2 1.500 2M11.500 12l1.500-2 1.500 2" stroke="#000" fill="none" stroke-width="1.1" /><circle cx="3" cy="5" r="1.6" fill="#3fd04a" stroke="#1a7a22" stroke-width="0.6"/><circle cx="8" cy="2.5" r="1.6" fill="#3fd04a" stroke="#1a7a22" stroke-width="0.6"/><circle cx="13" cy="5" r="1.6" fill="#3fd04a" stroke="#1a7a22" stroke-width="0.6"/><circle cx="5.5" cy="8" r="1.6" fill="#3fd04a" stroke="#1a7a22" stroke-width="0.6"/><circle cx="10.5" cy="8" r="1.6" fill="#3fd04a" stroke="#1a7a22" stroke-width="0.6"/></g><g transform="translate(160.0,80.5)"><path d="M1 4h8M1 8h8M1 12h8" stroke="#1a4fd0" fill="none" stroke-width="1.6" /><path d="M13 2v12M11 4.500l2-2.500 2 2.500M11 11.500l2 2.500 2-2.500" stroke="#000" fill="none" stroke-width="1.2" /><circle cx="9" cy="2.5" r="1.6" fill="#3fd04a" stroke="#1a7a22" stroke-width="0.6"/><circle cx="9" cy="8" r="1.6" fill="#3fd04a" stroke="#1a7a22" stroke-width="0.6"/><circle cx="9" cy="13" r="1.6" fill="#3fd04a" stroke="#1a7a22" stroke-width="0.6"/></g><rect x="184.0" y="77" width="1" height="23" fill="#a0a0a0"/><g transform="translate(190.4,80.5)"><path d="M5 2q-4 6 0 12M11 2v12" stroke="#a9a9a9" fill="none" stroke-width="1.3" stroke-dasharray="2 1.200"/><path d="M4 8h6M8 6l2 2-2 2" stroke="#a9a9a9" fill="none" stroke-width="1.1" /><circle cx="5" cy="2" r="1.6" fill="#a8d8b0" stroke="#1a7a22" stroke-width="0.6"/><circle cx="11" cy="2" r="1.6" fill="#a8d8b0" stroke="#1a7a22" stroke-width="0.6"/><circle cx="5" cy="14" r="1.6" fill="#a8d8b0" stroke="#1a7a22" stroke-width="0.6"/><circle cx="11" cy="14" r="1.6" fill="#a8d8b0" stroke="#1a7a22" stroke-width="0.6"/></g><g transform="translate(213.6,80.5)"><path d="M2 13l6-10 2 8h5" stroke="#a9a9a9" fill="none" stroke-width="2" /><circle cx="3" cy="13" r="1.6" fill="#a8d8b0" stroke="#1a7a22" stroke-width="0.6"/></g><g transform="translate(236.4,80.5)"><path d="M2 15v-12h12" stroke="#a9a9a9" fill="none" stroke-width="1.6" stroke-dasharray="2.500 1.200"/><path d="M4 13q0-8 10-8" stroke="#a9a9a9" fill="none" stroke-width="1.2" /></g><rect x="261.0" y="77" width="1" height="23" fill="#a0a0a0"/><g transform="translate(268.0,80.5)"><rect x="1.5" y="1.5" width="13" height="13" fill="none" stroke="#a9a9a9"/><path d="M1.500 4h13" stroke="#a9a9a9" fill="none" stroke-width="1" stroke-dasharray="1 1"/><text x="3.500" y="10.500" font-size="6.500" fill="#a9a9a9">0</text><circle cx="10" cy="11" r="1.6" fill="#a8d8b0" stroke="#1a7a22" stroke-width="0.6"/></g><g transform="translate(291.0,80.5)"><path d="M6 14v-9l3-3h2l3 4v8z" stroke="#a9a9a9" fill="#e8e8e8" stroke-width="1.2" /><text x="1" y="9" font-size="7" fill="#a9a9a9">1</text><circle cx="7" cy="13" r="1.6" fill="#a8d8b0" stroke="#1a7a22" stroke-width="0.6"/></g><rect x="319" y="74" width="338" height="30" fill="#f0f0f0"/><rect x="656" y="74" width="1" height="30" fill="#a0a0a0"/><rect x="319" y="103" width="338" height="1" fill="#a0a0a0"/><path d="M324 78h1M328 77h1M324 82h1M328 81h1M324 86h1M328 85h1M324 90h1M328 89h1M324 94h1M328 93h1M324 98h1M328 97h1" stroke="#b4b4b4" stroke-width="1.4" fill="none"/><g transform="translate(331.0,80.5)"><path d="M2 1.500h5v5q-2.500 2-5 0z" stroke="#1a4fd0" fill="#f4c8fa" stroke-width="1.2" /><path d="M9 10h5v5h-5q-2-2.500 0-5z" stroke="#1a4fd0" fill="#3ea0a8" stroke-width="1.2" /><path d="M10 2q4 0 4 4M12.500 4.500l1.500 1.500 1.500-1.500M6 14q-4 0-4-4M.500 11.500l1.500-1.500 1.500 1.500" stroke="#000" fill="none" stroke-width="1" /></g><g transform="translate(354.0,80.5)"><path d="M3 13l6-7q3-1 5 3v4" stroke="#1a4fd0" fill="none" stroke-width="1.5" /><path d="M5 4q3-3.500 6 0M9.500 1.500l1.500 2.500-2.800.300" stroke="#000" fill="none" stroke-width="1" /><circle cx="3" cy="13" r="1.6" fill="#fff" stroke="#1a7a22" stroke-width="0.6"/></g><rect x="378.0" y="77" width="1" height="23" fill="#a0a0a0"/><g transform="translate(385.0,80.5)"><path d="M9 9v-6l2.500-2h3v8z" stroke="#1a4fd0" fill="#fff" stroke-width="1.3" /><path d="M1 10q4 6 10 2" stroke="#3fd04a" fill="none" stroke-width="1.5" stroke-dasharray="1.500 1.200"/><path d="M2 5q3-4 6-1M1 2.500l1 2.800 2.800-.800" stroke="#000" fill="none" stroke-width="1" /></g><g transform="translate(408.0,80.5)"><path d="M1 9v-6l2.500-2h3v8z" stroke="#1a4fd0" fill="#fff" stroke-width="1.3" /><path d="M5 11q4 5 10 0" stroke="#3fd04a" fill="none" stroke-width="1.5" stroke-dasharray="1.500 1.200"/><path d="M8 4q3-3 6 1M15 2l-1 3-2.800-.800" stroke="#000" fill="none" stroke-width="1" /></g><g transform="translate(431.0,80.5)"><path d="M1.500 15v-10l2-3.500h2l1.500 3.500v10z" stroke="#1a4fd0" fill="#fff" stroke-width="1.5" /><path d="M10 15v-12h4.500v12" stroke="#3fd04a" fill="none" stroke-width="1.5" stroke-dasharray="1.500 1.200"/></g><g transform="translate(454.0,80.5)"><path d="M1 2h13M1 5.500h13" stroke="#3fd04a" fill="none" stroke-width="1.6" stroke-dasharray="1.500 1.200"/><path d="M1.500 14.500v-5h9l4 2.500v2.500z" stroke="#1a4fd0" fill="#fff" stroke-width="1.5" /></g><g transform="translate(476.4,80.5)"><path d="M2 2l11 11" stroke="#0a3a8a" fill="none" stroke-width="2.6" /><path d="M2 2h6M2 2v6" stroke="#0a3a8a" fill="none" stroke-width="2" /><path d="M6 1l9 9v5h-5z" stroke="#1a8a2a" fill="#3fd04a" stroke-width="1" /><path d="M8 14h7v-7" stroke="#9ccdf0" fill="none" stroke-width="1.4" /></g><rect x="501.0" y="77" width="1" height="23" fill="#a0a0a0"/><g transform="translate(508.0,80.5)"><path d="M1 14l9-9 4 9z" stroke="#a9a9a9" fill="#ddd" stroke-width="1.3" /><path d="M8 3l4-2M3 15h10" stroke="#a9a9a9" fill="none" stroke-width="1.2" stroke-dasharray="1.500 1"/></g><g transform="translate(531.0,80.5)"><path d="M3 15v-13l10 9h-8" stroke="#a9a9a9" fill="#ddd" stroke-width="1.6" /><path d="M5 13l9 2" stroke="#a9a9a9" fill="none" stroke-width="1" /></g><g transform="translate(554.0,80.5)"><circle cx="7" cy="10" r="4.8" fill="#fff" stroke="#000" stroke-width="1.3"/><circle cx="7" cy="10" r="2" fill="#3fd04a" stroke="#1a7a22" stroke-width="0.6"/><path d="M8 9l7-8" stroke="#1a4fd0" fill="none" stroke-width="1.6" /><path d="M3 3q2-2 4-1M6.500 .500l.800 1.800-1.800.700" stroke="#000" fill="none" stroke-width="0.9" /></g><rect x="578.0" y="77" width="1" height="23" fill="#a0a0a0"/><g transform="translate(585.0,80.5)"><path d="M2 10l9-9M6 15l9-9" stroke="#a9a9a9" fill="none" stroke-width="1.8" /><path d="M6 4l3 3-3 3" stroke="#a9a9a9" fill="none" stroke-width="1" /></g><g transform="translate(607.6,80.5)"><path d="M1 12h14M4 14.500l-3-2.500" stroke="#000" fill="none" stroke-width="1.2" /><path d="M2 14.500h13" stroke="#c43ad8" fill="none" stroke-width="1.3" /><path d="M5 8q2-5 7-2M5 4.500v3.500h3" stroke="#000" fill="none" stroke-width="1" /></g><g transform="translate(630.6,80.5)"><path d="M7 15v-8l3-3h2l3 3v8z" stroke="#888" fill="#ddd" stroke-width="1.2" /><path d="M1 3h7M5.500 1l2.500 2-2.500 2" stroke="#000" fill="none" stroke-width="1.2" /><path d="M5 9h7M5 12h7" stroke="#c43ad8" fill="none" stroke-width="1.3" /></g><rect x="659" y="74" width="392" height="30" fill="#f0f0f0"/><rect x="1050" y="74" width="1" height="30" fill="#a0a0a0"/><rect x="659" y="103" width="392" height="1" fill="#a0a0a0"/><path d="M664 78h1M668 77h1M664 82h1M668 81h1M664 86h1M668 85h1M664 90h1M668 89h1M664 94h1M668 93h1M664 98h1M668 97h1" stroke="#b4b4b4" stroke-width="1.4" fill="none"/><g transform="translate(671.4,80.5)"><path d="M3 2q5-2 8 1t4 4q-3 2-7 0l-5-1z" stroke="#000" fill="#fff" stroke-width="1.3" /><path d="M2 8q5-1 8 2t5 3q-4 3-8 1l-6-1z" stroke="#000" fill="#fff" stroke-width="1.3" /><path d="M6 4l4 2M5 10l4 2" stroke="#1a4fd0" fill="none" stroke-width="0.8" /></g><g transform="translate(694.0,80.5)"><path d="M2.500 1v12.500h12.500" stroke="#000" fill="none" stroke-width="1.6" /><path d="M2.500 3h3M2.500 6h2M2.500 9h3M6 13.500v2M9 13.500v2M12 13.500v2M15 13.500v2" stroke="#000" fill="none" stroke-width="1" /></g><rect x="718.0" y="77" width="1" height="23" fill="#a0a0a0"/><g transform="translate(724.0,80.5)"><circle cx="3.5" cy="4.5" r="2.2" fill="none" stroke="#000" stroke-width="1.4"/><circle cx="3.5" cy="11.5" r="2.2" fill="none" stroke="#000" stroke-width="1.4"/><path d="M5 5.500l6 4M5 10.500l6-4" stroke="#000" fill="none" stroke-width="1.5" /><path d="M10 8h5" stroke="#e01010" fill="none" stroke-width="1.3" stroke-dasharray="1.500 1"/></g><g transform="translate(750.0,80.5)"><path d="M3 10l5-8 6 3-6 7z" stroke="#5a4a1a" fill="#d8a84a" stroke-width="1" /><path d="M1 13h8l2-2" stroke="#000" fill="none" stroke-width="1.6" /><path d="M1 15h11" stroke="#999" fill="none" stroke-width="1.2" /></g><g transform="translate(770.6,80.5)"><circle cx="12" cy="4.5" r="2.2" fill="none" stroke="#000" stroke-width="1.4"/><circle cx="12" cy="11.5" r="2.2" fill="none" stroke="#000" stroke-width="1.4"/><path d="M10.500 5.500l-6 4M10.500 10.500l-6-4" stroke="#000" fill="none" stroke-width="1.5" /><path d="M1 8h8" stroke="#f0c020" fill="none" stroke-width="1.3" /></g><rect x="795.0" y="77" width="1" height="23" fill="#a0a0a0"/><g transform="translate(802.0,80.5)"><circle cx="6" cy="9" r="4.5" fill="#9ccdf0" stroke="#6aa8d8" stroke-width="1"/><path d="M3 4q4-3 8 0" stroke="#f0c020" fill="none" stroke-width="1.4" stroke-dasharray="1.500 1"/><path d="M10 6l5-5" stroke="#5a3a0a" fill="none" stroke-width="2" /><path d="M10 6l4-4" stroke="#e8962a" fill="none" stroke-width="1" /></g><g transform="translate(825.0,80.5)"><path d="M1 12h4l3-4 3 4h4" stroke="#f0c020" fill="none" stroke-width="1.5" /><path d="M1 14.500h13" stroke="#1a4fd0" fill="none" stroke-width="1" stroke-dasharray="1 1"/><path d="M9 7l6-6" stroke="#5a3a0a" fill="none" stroke-width="2" /><path d="M9 7l5-5" stroke="#e8962a" fill="none" stroke-width="1" /></g><g transform="translate(848.0,80.5)"><path d="M1 10q2 3 4 0t4 0 4 0 2 0" stroke="#f0c020" fill="none" stroke-width="1.4" /><path d="M1 14.500h13" stroke="#1a4fd0" fill="none" stroke-width="1" stroke-dasharray="1 1"/><path d="M9 7l6-6" stroke="#5a3a0a" fill="none" stroke-width="2" /><path d="M9 7l5-5" stroke="#e8962a" fill="none" stroke-width="1" /></g><rect x="872.0" y="77" width="1" height="23" fill="#a0a0a0"/><g transform="translate(879.0,80.5)"><path d="M1 8l7-5 7 5-7 6z" stroke="#0a3a8a" fill="#fff" stroke-width="1.6" /><path d="M4 5l7-4 3 5" stroke="#000" fill="#fff" stroke-width="1" /><rect x="11" y="2" width="4" height="4" fill="#e8962a" stroke="none"/><path d="M4 10l6-4" stroke="#9ccdf0" fill="none" stroke-width="1.5" /></g><g transform="translate(902.0,80.5)"><path d="M3 5l6-4 5 4v3h-8z" stroke="#000" fill="#fff" stroke-width="1" /><rect x="11" y="2" width="4" height="4" fill="#e8962a" stroke="none"/><circle cx="6" cy="11" r="3.4" fill="#f4e8a0" stroke="#f0c020" stroke-width="1.6"/><path d="M3 4h8M3 6h8" stroke="#000" fill="none" stroke-width="0.8" /></g><rect x="926.0" y="77" width="1" height="23" fill="#a0a0a0"/><g transform="translate(933.0,80.5)"><path d="M1 14l9-9" stroke="#1a4fd0" fill="none" stroke-width="2" /><path d="M4 12l8-8 3 8z" stroke="#a86a1a" fill="#f0b04a" stroke-width="1" /><path d="M8 2l6 0M12 .500l2 1.500-2 1.500M9 15h5M11 13.500l-2 1.500 2 1.500" stroke="#000" fill="none" stroke-width="1" /></g><g transform="translate(955.6,80.5)"><path d="M1.500 1.500h9l4 4v5l-4 4h-9z" stroke="#1a4fd0" fill="#fff" stroke-width="1.7" /><path d="M8 3v10M4 8h8M6.500 4.500l1.500-1.500 1.500 1.500M6.500 11.500l1.500 1.500 1.500-1.500" stroke="#000" fill="none" stroke-width="1" /></g><g transform="translate(979.0,80.5)"><path d="M1 9l6-7h8v8l-7 5z" stroke="#1a6fd0" fill="#cfe6fa" stroke-width="1.3" /><circle cx="10" cy="6.5" r="4.4" fill="#f4d84a" stroke="#d8a81a" stroke-width="1"/><path d="M8 7q2-3 4 0-2 2-3 0" stroke="#fff" fill="none" stroke-width="1" /></g><g transform="translate(1001.4,80.5)"><path d="M1.500 2h4l2 1.500 2-1.500h4v12h-4l-2 1.500-2-1.500h-4z" stroke="#0a5ab8" fill="#3a9ae8" stroke-width="1.4" /><rect x="7" y="3" width="6.5" height="10.5" fill="#2ab03a" stroke="none"/><path d="M6.500 3v11" stroke="#f0e020" fill="none" stroke-width="1.4" stroke-dasharray="1 1"/><path d="M12 5l-4 3 4 3M8 8h5" stroke="#000" fill="none" stroke-width="1.1" /></g><g transform="translate(1024.4,80.5)"><path d="M1.500 2h4l2 1.500 2-1.500h4v12h-4l-2 1.500-2-1.500h-4z" stroke="#0a5ab8" fill="#3a9ae8" stroke-width="1.4" /><path d="M9 2.500h4l2 5-2 6h-4z" stroke="#1a8a2a" fill="#2ab03a" stroke-width="0.8" /><path d="M6.500 3v11" stroke="#f0e020" fill="none" stroke-width="1.4" stroke-dasharray="1 1"/><path d="M8 10q1-5 6-5M11.500 3.500l2.500 1.500-1.500 2.500" stroke="#000" fill="none" stroke-width="1.1" /></g><rect x="2" y="103" width="2556" height="1" fill="#c8c8c8"/><rect x="2" y="104" width="66" height="1284" fill="#f0f0f0"/><g clip-path="url(#sb)"><g transform="translate(0,108)"><path d="M20.4 4.6L29.2 6.4L45.8 6.4L54.9 4.6L61.4 33.4Q37.5 37 13.5 33.4Z" fill="#b3a58a" stroke="#111" stroke-width="1"/></g><text x="6.5" y="156.8" font-size="9.5" fill="#1a1a1a" >BACK BOTTC</text><text x="6.5" y="167.9" font-size="9.5" fill="#1a1a1a" >1. 1</text><g transform="translate(0,173)"><path d="M11.8 16L24.3 8.4L26 11.2Q28 14 31.2 14.4L44.2 14.4Q47.5 14 48.6 11.2L50.7 8.4L63.6 16L62.5 31.3L12.2 31.3Z" fill="#b3a58a" stroke="#111" stroke-width="1"/></g><text x="6.5" y="221.8" font-size="9.5" fill="#1a1a1a" >BACK YOKE</text><text x="6.5" y="232.9" font-size="9.5" fill="#1a1a1a" >2. 1</text><g transform="translate(0,238)"><path d="M33.3 4.5L41.7 4.5L44.7 35.3L30.3 35.3Z" fill="#b3a58a" stroke="#111" stroke-width="1"/></g><text x="6.5" y="286.8" font-size="9.5" fill="#1a1a1a" >CENTER BAC</text><text x="6.5" y="297.9" font-size="9.5" fill="#1a1a1a" >3. 1</text><g transform="translate(0,303)"><path d="M33.5 6.5L39 4.2L41 8.5L45.5 10.5L45.5 35L38 35L29.5 33L29.5 19L33.8 17Z" fill="#b3a58a" stroke="#111" stroke-width="1"/></g><text x="6.5" y="351.8" font-size="9.5" fill="#1a1a1a" >FRT TOP</text><text x="6.5" y="362.9" font-size="9.5" fill="#1a1a1a" >4. 2(2)</text><g transform="translate(0,368)"><path d="M31 4.5L38 6.3L50.5 6.3L50.5 35.5L43 35.5L25 32Z" fill="#b3a58a" stroke="#111" stroke-width="1"/></g><text x="6.5" y="416.8" font-size="9.5" fill="#1a1a1a" >FRT BOTTOM</text><text x="6.5" y="427.9" font-size="9.5" fill="#1a1a1a" >5. 2(2)</text><g transform="translate(0,433)"><path d="M25.5 15L31 6.5Q36 3.5 40.5 6L49.5 15L47.5 22L46.5 35.5L28.5 35.5L27.5 22Z" fill="#b3a58a" stroke="#111" stroke-width="1"/></g><text x="6.5" y="481.8" font-size="9.5" fill="#1a1a1a" >SLEEVE</text><text x="6.5" y="492.9" font-size="9.5" fill="#1a1a1a" >6. 2(2)</text><g transform="translate(0,498)"><path d="M33 4.5L41.5 4.5L40.5 26L39.8 35L35.5 35L34.5 26Z" fill="#b3a58a" stroke="#111" stroke-width="1"/></g><text x="6.5" y="546.8" font-size="9.5" fill="#1a1a1a" >MIDDLE TOP</text><text x="6.5" y="557.9" font-size="9.5" fill="#1a1a1a" >7. 2(2)</text><g transform="translate(0,563)"><path d="M33.3 4.5L36.8 4.5L38.5 11L42.5 16.5L42 25.5L41.3 35.5L33.5 34.5L32.5 25L32.5 12Z" fill="#b3a58a" stroke="#111" stroke-width="1"/></g><text x="6.5" y="611.8" font-size="9.5" fill="#1a1a1a" >SIDE BACK T</text><text x="6.5" y="622.9" font-size="9.5" fill="#1a1a1a" >8. 2(2)</text><g transform="translate(0,628)"><path d="M11.5 10.5L24 10.5L24 11.5L51 11.5L51 10.5L63.5 10.5L61.5 19L54 19L54 20L18 20L18 19L13.5 19Z" fill="#b3a58a" stroke="#111" stroke-width="1"/></g><text x="6.5" y="676.8" font-size="9.5" fill="#1a1a1a" >COLLAR</text><text x="6.5" y="687.9" font-size="9.5" fill="#1a1a1a" >9. 2</text><g transform="translate(0,693)"><path d="M30.5 5L44.5 5L44.5 35.5L30.5 35.5Z" fill="#b3a58a" stroke="#111" stroke-width="1"/></g><text x="6.5" y="741.8" font-size="9.5" fill="#1a1a1a" >PKT</text><text x="6.5" y="752.9" font-size="9.5" fill="#1a1a1a" >10. 2(2)</text><rect x="6" y="759" width="60" height="61" fill="#0a0a0a"/><g transform="translate(0,758)"><path d="M11.5 6.5L63.5 6.5L63 17.5L62 23.5L37.5 33.5L13 23.5L12 17.5Z" fill="#b3a58a" stroke="#fff" stroke-width="1"/></g><text x="6.5" y="806.8" font-size="9.5" fill="#fff" >FLAP</text><text x="6.5" y="817.9" font-size="9.5" fill="#fff" >11. 2(2)</text><g transform="translate(0,823)"><path d="M33.5 5L35 4.5L37.5 9L41.5 10.5L41.3 35.5L38.3 35.5L38 20L36.5 13Z" fill="#b3a58a" stroke="#111" stroke-width="1"/></g><text x="6.5" y="871.8" font-size="9.5" fill="#1a1a1a" >FRONT FACI</text><text x="6.5" y="882.9" font-size="9.5" fill="#1a1a1a" >12. 2(2)</text><g transform="translate(0,888)"><path d="M30.5 5L44.5 5L44.5 35.5L30.5 35.5Z" fill="#b3a58a" stroke="#111" stroke-width="1"/></g><text x="6.5" y="936.8" font-size="9.5" fill="#1a1a1a" >PKTcf</text><text x="6.5" y="947.9" font-size="9.5" fill="#1a1a1a" >13. 2(2)</text></g><rect x="68" y="104" width="2490" height="46" fill="#fff"/><rect x="68" y="104" width="15" height="1284" fill="#fff"/><rect x="68" y="134" width="2490" height="1" fill="#d9d9d9"/><text x="118" y="148" font-size="12" fill="#000" letter-spacing="-.2">-60</text><text x="156" y="148" font-size="12" fill="#000" letter-spacing="-.2">-58</text><text x="193" y="148" font-size="12" fill="#000" letter-spacing="-.2">-56</text><text x="231" y="148" font-size="12" fill="#000" letter-spacing="-.2">-54</text><text x="268" y="148" font-size="12" fill="#000" letter-spacing="-.2">-52</text><text x="306" y="148" font-size="12" fill="#000" letter-spacing="-.2">-50</text><text x="343" y="148" font-size="12" fill="#000" letter-spacing="-.2">-48</text><text x="381" y="148" font-size="12" fill="#000" letter-spacing="-.2">-46</text><text x="418" y="148" font-size="12" fill="#000" letter-spacing="-.2">-44</text><text x="456" y="148" font-size="12" fill="#000" letter-spacing="-.2">-42</text><text x="493" y="148" font-size="12" fill="#000" letter-spacing="-.2">-40</text><text x="531" y="148" font-size="12" fill="#000" letter-spacing="-.2">-38</text><text x="568" y="148" font-size="12" fill="#000" letter-spacing="-.2">-36</text><text x="606" y="148" font-size="12" fill="#000" letter-spacing="-.2">-34</text><text x="643" y="148" font-size="12" fill="#000" letter-spacing="-.2">-32</text><text x="681" y="148" font-size="12" fill="#000" letter-spacing="-.2">-30</text><text x="718" y="148" font-size="12" fill="#000" letter-spacing="-.2">-28</text><text x="756" y="148" font-size="12" fill="#000" letter-spacing="-.2">-26</text><text x="793" y="148" font-size="12" fill="#000" letter-spacing="-.2">-24</text><text x="831" y="148" font-size="12" fill="#000" letter-spacing="-.2">-22</text><text x="868" y="148" font-size="12" fill="#000" letter-spacing="-.2">-20</text><text x="906" y="148" font-size="12" fill="#000" letter-spacing="-.2">-18</text><text x="943" y="148" font-size="12" fill="#000" letter-spacing="-.2">-16</text><text x="981" y="148" font-size="12" fill="#000" letter-spacing="-.2">-14</text><text x="1018" y="148" font-size="12" fill="#000" letter-spacing="-.2">-12</text><text x="1056" y="148" font-size="12" fill="#000" letter-spacing="-.2">-10</text><text x="1093" y="148" font-size="12" fill="#000" letter-spacing="-.2">-8</text><text x="1131" y="148" font-size="12" fill="#000" letter-spacing="-.2">-6</text><text x="1168" y="148" font-size="12" fill="#000" letter-spacing="-.2">-4</text><text x="1206" y="148" font-size="12" fill="#000" letter-spacing="-.2">-2</text><text x="1243" y="148" font-size="12" fill="#000" letter-spacing="-.2">0</text><text x="1281" y="148" font-size="12" fill="#000" letter-spacing="-.2">2</text><text x="1318" y="148" font-size="12" fill="#000" letter-spacing="-.2">4</text><text x="1356" y="148" font-size="12" fill="#000" letter-spacing="-.2">6</text><text x="1393" y="148" font-size="12" fill="#000" letter-spacing="-.2">8</text><text x="1431" y="148" font-size="12" fill="#000" letter-spacing="-.2">10</text><text x="1468" y="148" font-size="12" fill="#000" letter-spacing="-.2">12</text><text x="1506" y="148" font-size="12" fill="#000" letter-spacing="-.2">14</text><text x="1543" y="148" font-size="12" fill="#000" letter-spacing="-.2">16</text><text x="1581" y="148" font-size="12" fill="#000" letter-spacing="-.2">18</text><text x="1618" y="148" font-size="12" fill="#000" letter-spacing="-.2">20</text><text x="1656" y="148" font-size="12" fill="#000" letter-spacing="-.2">22</text><text x="1693" y="148" font-size="12" fill="#000" letter-spacing="-.2">24</text><text x="1731" y="148" font-size="12" fill="#000" letter-spacing="-.2">26</text><text x="1768" y="148" font-size="12" fill="#000" letter-spacing="-.2">28</text><text x="1806" y="148" font-size="12" fill="#000" letter-spacing="-.2">30</text><text x="1843" y="148" font-size="12" fill="#000" letter-spacing="-.2">32</text><text x="1881" y="148" font-size="12" fill="#000" letter-spacing="-.2">34</text><text x="1918" y="148" font-size="12" fill="#000" letter-spacing="-.2">36</text><text x="1956" y="148" font-size="12" fill="#000" letter-spacing="-.2">38</text><text x="1993" y="148" font-size="12" fill="#000" letter-spacing="-.2">40</text><text x="2031" y="148" font-size="12" fill="#000" letter-spacing="-.2">42</text><text x="2068" y="148" font-size="12" fill="#000" letter-spacing="-.2">44</text><text x="2106" y="148" font-size="12" fill="#000" letter-spacing="-.2">46</text><text x="2143" y="148" font-size="12" fill="#000" letter-spacing="-.2">48</text><text x="2181" y="148" font-size="12" fill="#000" letter-spacing="-.2">50</text><text x="2218" y="148" font-size="12" fill="#000" letter-spacing="-.2">52</text><text x="2256" y="148" font-size="12" fill="#000" letter-spacing="-.2">54</text><text x="2293" y="148" font-size="12" fill="#000" letter-spacing="-.2">56</text><text x="2331" y="148" font-size="12" fill="#000" letter-spacing="-.2">58</text><text x="2368" y="148" font-size="12" fill="#000" letter-spacing="-.2">60</text><text x="2406" y="148" font-size="12" fill="#000" letter-spacing="-.2">62</text><text x="2443" y="148" font-size="12" fill="#000" letter-spacing="-.2">64</text><text x="2481" y="148" font-size="12" fill="#000" letter-spacing="-.2">66</text><text x="2518" y="148" font-size="12" fill="#000" letter-spacing="-.2">68</text><text x="2556" y="148" font-size="12" fill="#000" letter-spacing="-.2">70</text><text x="84" y="148" font-size="12" fill="#000" letter-spacing="-.2">-62</text><text transform="translate(81.5,1365) rotate(-90)" font-size="12" fill="#000" letter-spacing="-.2">-32</text><text transform="translate(81.5,1328) rotate(-90)" font-size="12" fill="#000" letter-spacing="-.2">-30</text><text transform="translate(81.5,1291) rotate(-90)" font-size="12" fill="#000" letter-spacing="-.2">-28</text><text transform="translate(81.5,1253) rotate(-90)" font-size="12" fill="#000" letter-spacing="-.2">-26</text><text transform="translate(81.5,1215) rotate(-90)" font-size="12" fill="#000" letter-spacing="-.2">-24</text><text transform="translate(81.5,1178) rotate(-90)" font-size="12" fill="#000" letter-spacing="-.2">-22</text><text transform="translate(81.5,1141) rotate(-90)" font-size="12" fill="#000" letter-spacing="-.2">-20</text><text transform="translate(81.5,1103) rotate(-90)" font-size="12" fill="#000" letter-spacing="-.2">-18</text><text transform="translate(81.5,1065) rotate(-90)" font-size="12" fill="#000" letter-spacing="-.2">-16</text><text transform="translate(81.5,1028) rotate(-90)" font-size="12" fill="#000" letter-spacing="-.2">-14</text><text transform="translate(81.5,991) rotate(-90)" font-size="12" fill="#000" letter-spacing="-.2">-12</text><text transform="translate(81.5,953) rotate(-90)" font-size="12" fill="#000" letter-spacing="-.2">-10</text><text transform="translate(81.5,915) rotate(-90)" font-size="12" fill="#000" letter-spacing="-.2">-8</text><text transform="translate(81.5,878) rotate(-90)" font-size="12" fill="#000" letter-spacing="-.2">-6</text><text transform="translate(81.5,841) rotate(-90)" font-size="12" fill="#000" letter-spacing="-.2">-4</text><text transform="translate(81.5,803) rotate(-90)" font-size="12" fill="#000" letter-spacing="-.2">-2</text><text transform="translate(81.5,765) rotate(-90)" font-size="12" fill="#000" letter-spacing="-.2">0</text><text transform="translate(81.5,728) rotate(-90)" font-size="12" fill="#000" letter-spacing="-.2">2</text><text transform="translate(81.5,691) rotate(-90)" font-size="12" fill="#000" letter-spacing="-.2">4</text><text transform="translate(81.5,653) rotate(-90)" font-size="12" fill="#000" letter-spacing="-.2">6</text><text transform="translate(81.5,615) rotate(-90)" font-size="12" fill="#000" letter-spacing="-.2">8</text><text transform="translate(81.5,578) rotate(-90)" font-size="12" fill="#000" letter-spacing="-.2">10</text><text transform="translate(81.5,541) rotate(-90)" font-size="12" fill="#000" letter-spacing="-.2">12</text><text transform="translate(81.5,503) rotate(-90)" font-size="12" fill="#000" letter-spacing="-.2">14</text><text transform="translate(81.5,465) rotate(-90)" font-size="12" fill="#000" letter-spacing="-.2">16</text><text transform="translate(81.5,428) rotate(-90)" font-size="12" fill="#000" letter-spacing="-.2">18</text><text transform="translate(81.5,391) rotate(-90)" font-size="12" fill="#000" letter-spacing="-.2">20</text><text transform="translate(81.5,353) rotate(-90)" font-size="12" fill="#000" letter-spacing="-.2">22</text><text transform="translate(81.5,315) rotate(-90)" font-size="12" fill="#000" letter-spacing="-.2">24</text><text transform="translate(81.5,278) rotate(-90)" font-size="12" fill="#000" letter-spacing="-.2">26</text><text transform="translate(81.5,241) rotate(-90)" font-size="12" fill="#000" letter-spacing="-.2">28</text><text transform="translate(81.5,203) rotate(-90)" font-size="12" fill="#000" letter-spacing="-.2">30</text><text transform="translate(81.5,165) rotate(-90)" font-size="12" fill="#000" letter-spacing="-.2">32</text><path d="M98.5 148v2 M116.5 142v8 M135.5 148v2 M154.5 142v8 M172.5 148v2 M191.5 142v8 M210.5 148v2 M229.5 142v8 M248.5 148v2 M266.5 142v8 M285.5 148v2 M304.5 142v8 M322.5 148v2 M341.5 142v8 M360.5 148v2 M379.5 142v8 M398.5 148v2 M416.5 142v8 M435.5 148v2 M454.5 142v8 M472.5 148v2 M491.5 142v8 M510.5 148v2 M529.5 142v8 M548.5 148v2 M566.5 142v8 M585.5 148v2 M604.5 142v8 M622.5 148v2 M641.5 142v8 M660.5 148v2 M679.5 142v8 M698.5 148v2 M716.5 142v8 M735.5 148v2 M754.5 142v8 M772.5 148v2 M791.5 142v8 M810.5 148v2 M829.5 142v8 M848.5 148v2 M866.5 142v8 M885.5 148v2 M904.5 142v8 M922.5 148v2 M941.5 142v8 M960.5 148v2 M979.5 142v8 M998.5 148v2 M1016.5 142v8 M1035.5 148v2 M1054.5 142v8 M1072.5 148v2 M1091.5 142v8 M1110.5 148v2 M1129.5 142v8 M1148.5 148v2 M1166.5 142v8 M1185.5 148v2 M1204.5 142v8 M1222.5 148v2 M1241.5 142v8 M1260.5 148v2 M1279.5 142v8 M1298.5 148v2 M1316.5 142v8 M1335.5 148v2 M1354.5 142v8 M1372.5 148v2 M1391.5 142v8 M1410.5 148v2 M1429.5 142v8 M1448.5 148v2 M1466.5 142v8 M1485.5 148v2 M1504.5 142v8 M1522.5 148v2 M1541.5 142v8 M1560.5 148v2 M1579.5 142v8 M1598.5 148v2 M1616.5 142v8 M1635.5 148v2 M1654.5 142v8 M1672.5 148v2 M1691.5 142v8 M1710.5 148v2 M1729.5 142v8 M1748.5 148v2 M1766.5 142v8 M1785.5 148v2 M1804.5 142v8 M1822.5 148v2 M1841.5 142v8 M1860.5 148v2 M1879.5 142v8 M1898.5 148v2 M1916.5 142v8 M1935.5 148v2 M1954.5 142v8 M1972.5 148v2 M1991.5 142v8 M2010.5 148v2 M2029.5 142v8 M2048.5 148v2 M2066.5 142v8 M2085.5 148v2 M2104.5 142v8 M2122.5 148v2 M2141.5 142v8 M2160.5 148v2 M2179.5 142v8 M2198.5 148v2 M2216.5 142v8 M2235.5 148v2 M2254.5 142v8 M2272.5 148v2 M2291.5 142v8 M2310.5 148v2 M2329.5 142v8 M2348.5 148v2 M2366.5 142v8 M2385.5 148v2 M2404.5 142v8 M2422.5 148v2 M2441.5 142v8 M2460.5 148v2 M2479.5 142v8 M2498.5 148v2 M2516.5 142v8 M2535.5 148v2 M2554.5 142v8 M1029.5 135v15 M81 1387.5h2 M75 1368.5h8 M81 1350.5h2 M75 1331.5h8 M81 1312.5h2 M75 1294.5h8 M81 1275.5h2 M75 1256.5h8 M81 1237.5h2 M75 1218.5h8 M81 1200.5h2 M75 1181.5h8 M81 1162.5h2 M75 1144.5h8 M81 1125.5h2 M75 1106.5h8 M81 1087.5h2 M75 1068.5h8 M81 1050.5h2 M75 1031.5h8 M81 1012.5h2 M75 994.5h8 M81 975.5h2 M75 956.5h8 M81 937.5h2 M75 918.5h8 M81 900.5h2 M75 881.5h8 M81 862.5h2 M75 844.5h8 M81 825.5h2 M75 806.5h8 M81 787.5h2 M75 768.5h8 M81 750.5h2 M75 731.5h8 M81 712.5h2 M75 694.5h8 M81 675.5h2 M75 656.5h8 M81 637.5h2 M75 618.5h8 M81 600.5h2 M75 581.5h8 M81 562.5h2 M75 544.5h8 M81 525.5h2 M75 506.5h8 M81 487.5h2 M75 468.5h8 M81 450.5h2 M75 431.5h8 M81 412.5h2 M75 394.5h8 M81 375.5h2 M75 356.5h8 M81 337.5h2 M75 318.5h8 M81 300.5h2 M75 281.5h8 M81 262.5h2 M75 244.5h8 M81 225.5h2 M75 206.5h8 M81 187.5h2 M75 168.5h8 M68 633.5h15" stroke="#000" stroke-width="1" fill="none" shape-rendering="crispEdges"/><text transform="translate(81.5,1402.5) rotate(-90)" font-size="12" fill="#000" letter-spacing="-.2">-34</text><rect x="83" y="150" width="2475" height="1238" fill="#000"/><g clip-path="url(#cv)"><g fill="none" stroke-width="1" shape-rendering="crispEdges"><path d="M677.8 707.9C679 711.5 683.6 722.2 685.3 729.5C687 736.8 688.1 742.5 688.1 751.8C688.1 761.1 686.7 775.2 685.4 785.4C684.1 795.6 683.5 804.7 680.4 813C677.3 821.3 672.2 829.5 666.7 835.3C661.2 841.1 655.5 844.2 647.5 847.6C639.5 851 623.6 854.2 618.8 855.5M677.8 707.9L728.4 680.9L751 670.1M617.2 644.7L617.2 1031.5L806.6 1031.5M617.2 1031.5L688 1046L749.7 1057.1L835.6 1057.6M751 670.1L806.8 670.1L806.8 742M618.8 855.5L806 855.5M748.4 670.1L748.4 1057.1M789.8 672.7L789.8 1057.1M826.2 673.5L826.2 1057.1M728.6 682.3C732.5 692.8 743.5 721.3 751.7 745.4C759.9 769.5 771.8 802 778 826.9C784.2 851.8 787.2 883.6 789 895M1067.2 710.4C1066 714 1061.4 724.7 1059.7 732C1058 739.3 1056.9 745 1056.9 754.3C1056.9 763.6 1058.3 777.7 1059.6 787.9C1060.9 798.1 1061.5 807.2 1064.6 815.5C1067.7 823.8 1072.8 832 1078.3 837.8C1083.8 843.6 1089.5 846.7 1097.5 850.1C1105.5 853.5 1121.4 856.7 1126.2 858M1067.2 710.4L1016.6 683.4L994 672.6M1127.8 647.2L1127.8 1034L938.4 1034M1127.8 1034L1057 1048.5L995.3 1059.6L909.4 1060.1M994 672.6L938.2 672.6L938.2 744.5M1126.2 858L939 858M996.6 672.6L996.6 1059.6M955.2 675.2L955.2 1059.6M918.8 676L918.8 1059.6M1016.4 684.8C1012.5 695.3 1001.5 723.8 993.3 747.9C985.1 772 973.2 804.5 967 829.4C960.8 854.3 957.8 886.1 956 897.5M665.1 1071L636.7 1184L609.1 1299M665.1 1071L732 1081.9L795.8 1087.7L832.5 1087.7M609.1 1299L692 1311.8L795.8 1319L832.5 1319.6M609.1 1067L609.1 1299M794.2 1087.7L794.2 1140L795.2 1142L795.2 1258L796.2 1260L796.2 1319.3M809.5 1087.7L809.5 1180L808.5 1182L808.5 1319.3M820.5 1087.7L820.5 1180L819.5 1182L819.5 1319.3M1126.8 1071L1155.2 1184L1182.8 1299M1126.8 1071L1059.9 1081.9L996.1 1087.7L959.4 1087.7M1182.8 1299L1099.9 1311.8L996.1 1319L959.4 1319.6M1182.8 1067L1182.8 1299M997.7 1087.7L997.7 1140L996.7 1142L996.7 1258L995.7 1260L995.7 1319.3M982.4 1087.7L982.4 1180L983.4 1182L983.4 1319.3M971.4 1087.7L971.4 1180L972.4 1182L972.4 1319.3M514.4 929.5L514.4 1314.3M549.5 929.5L549.5 1314.3M463.4 939L502.2 1054.8L508 1070.5L514.4 1110L514.4 1191.2M483.4 929L492 948L499.2 964.2L505.2 978.3M1277.5 910.8L1277.5 1295.6M1242.4 910.8L1242.4 1295.6M1328.5 920.3L1289.7 1036.1L1283.9 1051.8L1277.5 1091.3L1277.5 1172.5M1308.5 910.3L1299.9 929.3L1292.7 945.5L1286.7 959.6M1932.2 768.9L1919.2 875.6L1905.4 1046.8M1905.4 1046.8L1970.3 1046.8M1919.2 876.8L1970.3 876.8M2008.4 768.9L2021.4 875.6L2035.2 1046.8M2035.2 1046.8L1970.3 1046.8M2021.4 876.8L1970.3 876.8M1842 775L1848 880.5L1846.2 1051.6M1904.9 775L1896.2 880.5L1887.2 1051.6M1846.2 1051.6L1887.2 1051.6M1848 881.7L1896.2 881.7M2110.1 761.8L2104.1 867.3L2105.9 1038.4M2047.2 761.8L2055.9 867.3L2064.9 1038.4M2105.9 1038.4L2064.9 1038.4M2104.1 868.5L2055.9 868.5M1819.5 764L1823 869.6L1814.3 1039.9M1788.4 764C1788.2 766.7 1787.9 775.3 1787.3 780.4C1786.7 785.5 1786 788.1 1785 794.4C1784 800.7 1782.8 811.1 1781 818C1779.2 824.9 1776.9 830.1 1774.1 835.5C1771.3 840.9 1768 845.8 1764.1 850.5C1760.2 855.2 1755.7 860.4 1750.7 863.6C1745.7 866.8 1736.8 868.7 1734 869.7M1734 869.7L1738.6 956L1743.3 1045.5M1743.3 768.4L1743.3 1045.5M1743.3 1045.5C1749.2 1044.5 1767 1040.1 1778.8 1039.2C1790.6 1038.3 1808.4 1039.8 1814.3 1039.9M1734 869.7L1823 869.7M1788.4 764L1819.5 764M2159.4 762.8L2155.9 868.4L2164.6 1038.7M2190.5 762.8C2190.7 765.5 2191 774.1 2191.6 779.2C2192.2 784.3 2192.9 786.9 2193.9 793.2C2195 799.5 2196.1 809.9 2197.9 816.8C2199.7 823.6 2202 828.9 2204.8 834.3C2207.6 839.7 2210.9 844.6 2214.8 849.3C2218.7 854 2223.2 859.2 2228.2 862.4C2233.2 865.6 2242.1 867.5 2244.9 868.5M2244.9 868.5L2240.3 954.8L2235.6 1044.3M2235.6 767.2L2235.6 1044.3M2235.6 1044.3C2229.7 1043.2 2211.9 1038.9 2200.1 1038C2188.3 1037.1 2170.5 1038.6 2164.6 1038.7M2244.9 868.5L2155.9 868.5M2190.5 762.8L2159.4 762.8M1771.7 1098.9L1742.4 1212L1715.8 1326.7M1771.7 1098.9C1777.5 1100 1794.8 1103.7 1806.5 1105.7C1818.2 1107.8 1830.5 1109.9 1841.8 1111.2C1853 1112.5 1861 1112.8 1874 1113.3C1887 1113.8 1912 1114.2 1919.6 1114.4M1715.8 1326.7C1724.8 1328.1 1752.5 1332.6 1770 1335.1C1787.5 1337.6 1803.9 1340 1820.5 1341.6C1837.1 1343.2 1853.2 1344.1 1869.7 1344.8C1886.2 1345.5 1911.3 1345.5 1919.6 1345.6M1715.8 1097.8L1715.8 1326.7M1837 1108L1837 1116M1871 1110L1871 1118M2067.5 1098.9L2096.8 1212L2123.4 1326.7M2067.5 1098.9C2061.7 1100 2044.4 1103.7 2032.7 1105.7C2021 1107.8 2008.6 1109.9 1997.4 1111.2C1986.1 1112.5 1978.2 1112.8 1965.2 1113.3C1952.2 1113.8 1927.2 1114.2 1919.6 1114.4M2123.4 1326.7C2114.4 1328.1 2086.6 1332.6 2069.2 1335.1C2051.8 1337.6 2035.3 1340 2018.7 1341.6C2002.1 1343.2 1986 1344.1 1969.5 1344.8C1953 1345.5 1927.9 1345.5 1919.6 1345.6M2123.4 1097.8L2123.4 1326.7M2002.2 1108L2002.2 1116M1968.2 1110L1968.2 1118M398.4 311.7C401.3 309.8 409.2 305.9 415.8 300.5C422.4 295.1 432.6 285.7 438 279.2C443.4 272.7 444.5 268 448.5 261.7C452.5 255.4 457 248.7 462 241.2C467 233.8 473.8 222.9 478.3 217C482.8 211.1 484.4 208.9 489.2 205.6C493.9 202.4 500.1 199.5 506.8 197.5C513.6 195.5 522.6 194.2 529.7 193.4C536.8 192.6 541 191.8 549.5 192.7C558 193.6 571.8 195 580.4 198.9C589 202.8 594.6 209.3 601.3 216.2C608 223.1 614 231.8 620.5 240.4C627 249 633.5 259.2 640.6 267.8C647.7 276.3 657.1 286 663.2 291.7C669.3 297.4 671 298.8 677.1 302.1C683.2 305.4 696.1 309.8 699.9 311.4M398.4 311.7L418 415.5L435.8 577.5M699.9 311.4L680.6 415.5L662.4 577.5M435.8 193.8L435.8 577.5L662.4 577.5L662.4 193.8M1442.1 298.9C1439.2 297 1431.3 293.1 1424.7 287.7C1418.1 282.3 1408 272.9 1402.5 266.4C1397 259.9 1396 255.2 1392 248.9C1388 242.6 1383.5 235.9 1378.5 228.4C1373.5 220.9 1366.7 210.1 1362.2 204.2C1357.7 198.3 1356 196.1 1351.3 192.8C1346.5 189.6 1340.5 186.7 1333.7 184.7C1327 182.7 1317.9 181.4 1310.8 180.6C1303.7 179.8 1299.5 179 1291 179.9C1282.5 180.8 1268.7 182.2 1260.1 186.1C1251.5 190 1245.9 196.5 1239.2 203.4C1232.5 210.3 1226.5 219 1220 227.6C1213.5 236.2 1207 246.4 1199.9 255C1192.8 263.5 1183.4 273.2 1177.3 278.9C1171.2 284.6 1169.5 286 1163.4 289.3C1157.3 292.6 1144.4 297 1140.6 298.6M1442.1 298.9L1422.5 402.7L1404.7 564.7M1140.6 298.6L1159.9 402.7L1178.1 564.7M1404.7 181L1404.7 564.7L1178.1 564.7L1178.1 181M1955 444.6C1945.8 444.4 1920.6 443.8 1899.5 443.4C1878.4 443 1850.6 442.6 1828.2 442.3C1805.8 442 1775.9 441.6 1765.4 441.5M1765.4 441.5L1776.4 484M1776.4 484C1785.1 483.5 1811.8 481.8 1828.5 480.8C1845.2 479.8 1855.3 478.9 1876.4 478.2C1897.5 477.5 1941.9 476.9 1955 476.7M1776.4 484L1780.6 498.8M1780.6 498.8C1788.8 499.5 1813.2 501.8 1829.5 502.8C1845.8 503.8 1857.7 504.1 1878.6 504.6C1899.5 505.1 1942.3 505.4 1955 505.6M1877 500L1877 506M1955 444.6C1964.2 444.4 1989.4 443.8 2010.5 443.4C2031.6 443 2059.5 442.6 2081.8 442.3C2104.2 442 2134.1 441.6 2144.6 441.5M2144.6 441.5L2133.6 484M2133.6 484C2124.9 483.5 2098.2 481.8 2081.5 480.8C2064.8 479.8 2054.7 478.9 2033.6 478.2C2012.5 477.5 1968.1 476.9 1955 476.7M2133.6 484L2129.4 498.8M2129.4 498.8C2121.2 499.5 2096.8 501.8 2080.5 502.8C2064.2 503.8 2052.3 504.1 2031.4 504.6C2010.5 505.1 1967.7 505.4 1955 505.6M2033 500L2033 506M1838.9 677.8L1837.6 640L1835.8 594.2M1835.8 594.2L1906.4 558.2M1906.4 558.2C1907.3 560.6 1908.5 568.5 1911.7 572.8C1914.9 577.1 1920.1 581.1 1925.8 583.9C1931.5 586.7 1938.6 588.3 1946 589.7C1953.4 591.1 1966.3 591.8 1970.4 592.2M1906.4 558.2L1970.4 558.2M1907.5 562L1907.5 590M2101.9 677.8L2103.2 640L2105 594.2M2105 594.2L2034.4 558.2M2034.4 558.2C2033.5 560.6 2032.3 568.5 2029.1 572.8C2025.9 577.1 2020.7 581.1 2015 583.9C2009.3 586.7 2002.2 588.3 1994.8 589.7C1987.4 591.1 1974.5 591.8 1970.4 592.2M2034.4 558.2L1970.4 558.2M2033.3 562L2033.3 590" stroke="#ffff55"/><path d="M691.3 707.9C692.4 711.5 696.1 722.2 697.9 729.5C699.7 736.8 700.7 742.5 701.9 751.8C703.1 761.1 705.2 775.4 704.9 785.4C704.6 795.4 702.8 804.2 700.2 811.5C697.6 818.8 694.1 824.1 689.5 829.3C684.9 834.5 679.9 839.5 672.7 842.8C665.5 846.1 650.8 847.9 646.4 848.9M691.3 707.9L731.4 685.1L751 677.9M644.8 652.2L644.8 1003.6L806.6 1003.6M644.8 1003.6L688 1018.1L749.7 1028.3L835.6 1028.8M751 679.1L804.4 679.1L804.4 700M646.4 848.9L782 851.4M757.7 679.1L757.7 1028.3M792.5 676L792.5 764M828.8 675L828.8 736M828.8 742L828.8 760M756 1027.8L835.6 1028.8M731 682.3C734.9 692.8 746.1 721.3 754.4 745.4C762.7 769.5 774.4 802 780.7 826.9C787 851.8 790.1 883.6 792 895M1053.7 710.4C1052.6 714 1048.9 724.7 1047.1 732C1045.3 739.3 1044.3 745 1043.1 754.3C1041.9 763.6 1039.8 777.9 1040.1 787.9C1040.4 797.9 1042.2 806.7 1044.8 814C1047.4 821.3 1050.9 826.6 1055.5 831.8C1060.1 837 1065.1 842 1072.3 845.3C1079.5 848.6 1094.2 850.4 1098.6 851.4M1053.7 710.4L1013.6 687.6L994 680.4M1100.2 654.7L1100.2 1006.1L938.4 1006.1M1100.2 1006.1L1057 1020.6L995.3 1030.8L909.4 1031.3M994 681.6L940.6 681.6L940.6 702.5M1098.6 851.4L963 853.9M987.3 681.6L987.3 1030.8M952.5 678.5L952.5 766.5M916.2 677.5L916.2 738.5M916.2 744.5L916.2 762.5M989 1030.3L909.4 1031.3M1014 684.8C1010.1 695.3 998.9 723.8 990.6 747.9C982.3 772 970.6 804.5 964.3 829.4C958 854.3 954.9 886.1 953 897.5M693 1071L664.6 1184L637 1299M693 1071L741 1080.7L795.8 1087.7L832.5 1087.7M637 1299L701 1310.9L795.8 1319L832.5 1319.6M637 1067L637 1299M802.6 1087.7L802.6 1140L803.6 1142L803.6 1258L804.6 1260L804.6 1319.3M817.9 1087.7L817.9 1180L816.9 1182L816.9 1319.3M828.9 1087.7L828.9 1180L827.9 1182L827.9 1319.3M1098.9 1071L1127.3 1184L1154.9 1299M1098.9 1071L1050.9 1080.7L996.1 1087.7L959.4 1087.7M1154.9 1299L1090.9 1310.9L996.1 1319L959.4 1319.6M1154.9 1067L1154.9 1299M989.3 1087.7L989.3 1140L988.3 1142L988.3 1258L987.3 1260L987.3 1319.3M974 1087.7L974 1180L975 1182L975 1319.3M963 1087.7L963 1180L964 1182L964 1319.3M542.6 934L542.6 1286.3M577.7 934L577.7 1286.3M530.4 1286.3L542.6 1286.3M565.5 1286.3L577.7 1286.3M466 940L486 931M1249.3 915.3L1249.3 1267.6M1214.2 915.3L1214.2 1267.6M1261.5 1267.6L1249.3 1267.6M1226.4 1267.6L1214.2 1267.6M1325.9 921.3L1305.9 912.3M1939.4 768.9L1924.6 872.6L1912.6 1018.9M1912.6 1019.6L1970.3 1019.6M1924.6 870.2L1970.3 870.2M2001.2 768.9L2016 872.6L2028 1018.9M2028 1019.6L1970.3 1019.6M2016 870.2L1970.3 870.2M1842.6 775L1848.9 877.5L1847.4 1023.7M1901.3 775L1894.7 877.5L1887.2 1023.7M1847.4 1024.1L1887.2 1024.1M1848.9 875.1L1894.7 875.1M2109.5 761.8L2103.2 864.3L2104.7 1010.5M2050.8 761.8L2057.4 864.3L2064.9 1010.5M2104.7 1010.9L2064.9 1010.9M2103.2 861.9L2057.4 861.9M1826.1 764L1829.9 862.7L1821.5 1012.3M1803.1 764C1803.1 766.5 1803 774.5 1802.9 779.2C1802.8 783.9 1803 786 1802.4 792C1801.7 798 1800.2 808.8 1799 815C1797.8 821.2 1797 824.8 1795.1 829.5C1793.2 834.2 1790.7 838.5 1787.5 843C1784.3 847.5 1780.2 853.2 1776.2 856.4C1772.2 859.7 1765.5 861.5 1763.4 862.5M1763.4 862.5L1766.8 941L1770.9 1017.9M1770.9 768.4L1770.9 1017.9M1770.9 1017.9C1775.1 1016.9 1787.8 1012.5 1796.2 1011.6C1804.6 1010.7 1817.3 1012.2 1821.5 1012.3M1763.4 862.5L1829.9 862.5M1803.1 764L1826.1 764M2152.8 762.8L2149 861.5L2157.4 1011.1M2175.8 762.8C2175.8 765.3 2175.9 773.3 2176 778C2176.1 782.7 2175.9 784.8 2176.5 790.8C2177.2 796.8 2178.7 807.5 2179.9 813.8C2181.1 820 2181.9 823.6 2183.8 828.3C2185.7 833 2188.2 837.3 2191.4 841.8C2194.6 846.3 2198.7 852 2202.7 855.2C2206.7 858.5 2213.4 860.3 2215.5 861.3M2215.5 861.3L2212.1 939.8L2208 1016.7M2208 767.2L2208 1016.7M2208 1016.7C2203.8 1015.6 2191.1 1011.3 2182.7 1010.4C2174.3 1009.5 2161.6 1011 2157.4 1011.1M2215.5 861.3L2149 861.3M2175.8 762.8L2152.8 762.8M1799.9 1098.9L1771.2 1212L1745.2 1326.7M1799.9 1098.9C1803.8 1099.9 1815.3 1103.1 1823 1105.1C1830.7 1107 1837.6 1109.2 1846.3 1110.6C1855 1112 1863 1112.7 1875.2 1113.3C1887.4 1113.9 1912.2 1114.2 1919.6 1114.4M1745.2 1326.7C1751.8 1327.8 1771.7 1331.1 1785 1333.3C1798.3 1335.5 1810.7 1338 1825 1339.8C1839.3 1341.6 1854.8 1342.9 1870.6 1343.9C1886.4 1344.9 1911.4 1345.3 1919.6 1345.6M1745.2 1097.8L1745.2 1326.7M1879 1110L1879 1116M2039.3 1098.9L2068 1212L2094 1326.7M2039.3 1098.9C2035.4 1099.9 2023.9 1103.1 2016.2 1105.1C2008.5 1107 2001.6 1109.2 1992.9 1110.6C1984.2 1112 1976.2 1112.7 1964 1113.3C1951.8 1113.9 1927 1114.2 1919.6 1114.4M2094 1326.7C2087.4 1327.8 2067.5 1331.1 2054.2 1333.3C2040.9 1335.5 2028.5 1338 2014.2 1339.8C1999.9 1341.6 1984.4 1342.9 1968.6 1343.9C1952.8 1344.9 1927.8 1345.3 1919.6 1345.6M2094 1097.8L2094 1326.7M1960.2 1110L1960.2 1116M411.6 311.7C414.1 310.4 420.9 308.6 426.6 304.1C432.3 299.6 440.9 290.9 445.8 284.6C450.7 278.3 452.1 272.9 456 266.5C459.9 260.1 464.4 253.3 469.2 246C474 238.7 480.7 228.3 484.9 222.7C489.1 217.1 490.5 215.2 494.6 212.2C498.8 209.2 503.8 206.8 509.8 205C515.8 203.2 524 201.9 530.6 201.2C537.2 200.4 541.7 199.6 549.5 200.5C557.3 201.4 569.7 202.7 577.4 206.4C585.1 210.1 589.5 215.9 595.6 222.5C601.7 229.1 607.5 237.4 613.9 245.8C620.2 254.1 626.8 264.1 633.7 272.6C640.6 281 649.8 291 655.4 296.5C661 302 662.2 303.2 667.5 305.7C672.8 308.2 683.8 310.4 687 311.4M411.6 311.7L432.1 411L450.2 556.5M687 311.4L666.8 411L648 556.5M450.2 200.6L450.2 556.5L648 556.5L648 200.6M1428.9 298.9C1426.4 297.6 1419.6 295.8 1413.9 291.3C1408.2 286.8 1399.6 278.1 1394.7 271.8C1389.8 265.5 1388.4 260.1 1384.5 253.7C1380.6 247.3 1376.1 240.5 1371.3 233.2C1366.5 225.9 1359.8 215.5 1355.6 209.9C1351.4 204.3 1350.1 202.4 1345.9 199.4C1341.8 196.4 1336.7 194 1330.7 192.2C1324.7 190.4 1316.5 189.1 1309.9 188.4C1303.3 187.6 1298.8 186.8 1291 187.7C1283.2 188.6 1270.8 189.9 1263.1 193.6C1255.4 197.3 1251 203.1 1244.9 209.7C1238.8 216.3 1233 224.6 1226.6 233C1220.3 241.3 1213.7 251.3 1206.8 259.8C1199.9 268.2 1190.7 278.2 1185.1 283.7C1179.5 289.2 1178.3 290.4 1173 292.9C1167.7 295.4 1156.8 297.6 1153.5 298.6M1428.9 298.9L1408.4 398.2L1390.3 543.7M1153.5 298.6L1173.7 398.2L1192.5 543.7M1390.3 187.8L1390.3 543.7L1192.5 543.7L1192.5 187.8M1955 444.6C1946 444.4 1921.2 443.8 1901 443.4C1880.8 443 1853.8 442.6 1833.6 442.3C1813.4 442 1789 441.6 1780.1 441.5M1780.1 441.5L1791.1 484M1791.1 484C1798.1 483.5 1818.6 481.8 1833 480.8C1847.4 479.8 1857 478.9 1877.3 478.2C1897.6 477.5 1942 476.9 1955 476.7M1791.1 484L1795.3 498.8M1795.3 498.8C1801.8 499.4 1819.9 501.2 1834 502.2C1848.1 503.2 1859.6 504 1879.8 504.6C1900 505.2 1942.5 505.4 1955 505.6M1881 500L1881 506M1955 444.6C1964 444.4 1988.8 443.8 2009 443.4C2029.2 443 2056.2 442.6 2076.4 442.3C2096.6 442 2121 441.6 2129.9 441.5M2129.9 441.5L2118.9 484M2118.9 484C2111.9 483.5 2091.4 481.8 2077 480.8C2062.6 479.8 2053 478.9 2032.7 478.2C2012.4 477.5 1968 476.9 1955 476.7M2118.9 484L2114.7 498.8M2114.7 498.8C2108.2 499.4 2090.1 501.2 2076 502.2C2061.9 503.2 2050.4 504 2030.2 504.6C2010 505.2 1967.5 505.4 1955 505.6M2029 500L2029 506M1852.1 677.8L1850.8 640L1848.4 594.8M1848.4 594.8L1907.3 563.6M1907.3 563.6C1908.2 565.7 1909.4 572.7 1912.6 576.4C1915.8 580.1 1920.8 583.3 1926.4 585.7C1932 588.1 1938.7 589.5 1946 590.6C1953.3 591.7 1966.3 591.9 1970.4 592.2M1907.3 564.2L1970.4 564.2M1874.5 672.5L1874.5 678M1934.5 672.5L1934.5 678M2088.7 677.8L2090 640L2092.4 594.8M2092.4 594.8L2033.5 563.6M2033.5 563.6C2032.6 565.7 2031.4 572.7 2028.2 576.4C2025 580.1 2020 583.3 2014.4 585.7C2008.8 588.1 2002.1 589.5 1994.8 590.6C1987.5 591.7 1974.5 591.9 1970.4 592.2M2033.5 564.2L1970.4 564.2M2066.3 672.5L2066.3 678M2006.3 672.5L2006.3 678" stroke="#ffffff"/><path d="M686.8 707.9C687.9 711.5 692 722.2 693.7 729.5C695.5 736.8 696.5 742.5 697.3 751.8C698.1 761.1 699 775.4 698.4 785.4C697.8 795.4 696.4 804.4 693.6 812C690.9 819.6 686.8 825.9 681.9 831.3C677 836.7 671.8 841.1 664.3 844.4C656.8 847.7 641.7 850 637.2 851.1M686.8 707.9L730.4 683.7L751 675.3M635.6 649.7L635.6 1012.9L806.6 1012.9M635.6 1012.9L688 1027.4L749.7 1037.9L835.6 1038.4M751 675.3L805.2 675.3L805.2 700M637.2 851.1L782 853.6M754.6 675.3L754.6 1037.9M792.5 676L792.5 690M827.8 675L827.8 700M827.8 742L827.8 760M756 1038L835.6 1038M730.2 682.3C734.1 692.8 745.2 721.3 753.5 745.4C761.8 769.5 773.5 802 779.8 826.9C786 851.8 789.1 883.6 791 895M1058.2 710.4C1057 714 1053 724.7 1051.3 732C1049.5 739.3 1048.5 745 1047.7 754.3C1046.9 763.6 1046 777.9 1046.6 787.9C1047.2 797.9 1048.7 806.9 1051.4 814.5C1054.2 822.1 1058.2 828.4 1063.1 833.8C1068 839.2 1073.2 843.6 1080.7 846.9C1088.1 850.2 1103.3 852.5 1107.8 853.6M1058.2 710.4L1014.6 686.2L994 677.8M1109.4 652.2L1109.4 1015.4L938.4 1015.4M1109.4 1015.4L1057 1029.9L995.3 1040.4L909.4 1040.9M994 677.8L939.8 677.8L939.8 702.5M1107.8 853.6L963 856.1M990.4 677.8L990.4 1040.4M952.5 678.5L952.5 692.5M917.2 677.5L917.2 702.5M917.2 744.5L917.2 762.5M989 1040.5L909.4 1040.5M1014.8 684.8C1010.9 695.3 999.8 723.8 991.5 747.9C983.2 772 971.5 804.5 965.2 829.4C959 854.3 955.9 886.1 954 897.5M683.7 1071L655.3 1184L627.7 1299M683.7 1071L738 1081.1L795.8 1087.7L832.5 1087.7M627.7 1299L698 1311.2L795.8 1319L832.5 1319.6M627.7 1067L627.7 1299M799.8 1087.7L799.8 1140L800.8 1142L800.8 1258L801.8 1260L801.8 1319.3M815.1 1087.7L815.1 1180L814.1 1182L814.1 1319.3M826.1 1087.7L826.1 1180L825.1 1182L825.1 1319.3M1108.2 1071L1136.6 1184L1164.2 1299M1108.2 1071L1053.9 1081.1L996.1 1087.7L959.4 1087.7M1164.2 1299L1093.9 1311.2L996.1 1319L959.4 1319.6M1164.2 1067L1164.2 1299M992.1 1087.7L992.1 1140L991.1 1142L991.1 1258L990.1 1260L990.1 1319.3M976.8 1087.7L976.8 1180L977.8 1182L977.8 1319.3M965.8 1087.7L965.8 1180L966.8 1182L966.8 1319.3M533.4 932.5L533.4 1295M568.5 932.5L568.5 1295M527.2 1295L533.4 1295M562 1295L568.5 1295M485.9 929L494.5 948L501.7 964.2L507.7 978.3M1258.5 913.8L1258.5 1276.3M1223.4 913.8L1223.4 1276.3M1264.7 1276.3L1258.5 1276.3M1229.9 1276.3L1223.4 1276.3M1306 910.3L1297.4 929.3L1290.2 945.5L1284.2 959.6M1937 768.9L1922.8 873.6L1910.2 1028.2M1910.2 1028.2L1970.3 1028.2M1922.8 872.4L1970.3 872.4M2003.6 768.9L2017.8 873.6L2030.4 1028.2M2030.4 1028.2L1970.3 1028.2M2017.8 872.4L1970.3 872.4M1842.4 775L1848.6 878.5L1847 1033M1902.5 775L1895.2 878.5L1887.2 1033M1847 1033L1887.2 1033M1848.6 877.3L1895.2 877.3M2109.7 761.8L2103.5 865.3L2105.1 1019.8M2049.6 761.8L2056.9 865.3L2064.9 1019.8M2105.1 1019.8L2064.9 1019.8M2103.5 864.1L2056.9 864.1M1823.9 764L1827.6 865L1819.1 1021.5M1798.2 764C1798.1 766.6 1798 774.8 1797.7 779.6C1797.4 784.4 1797.4 786.7 1796.6 792.8C1795.8 798.9 1794.4 809.5 1793 816C1791.6 822.5 1790.3 826.6 1788.1 831.5C1785.9 836.4 1783.1 841 1779.7 845.5C1776.3 850 1772.1 855.6 1767.7 858.8C1763.3 862 1755.9 863.9 1753.6 864.9M1753.6 864.9L1757.4 946L1761.7 1027.1M1761.7 768.4L1761.7 1027.1M1761.7 1027.1C1766.5 1026 1780.8 1021.7 1790.4 1020.8C1800 1019.9 1814.3 1021.4 1819.1 1021.5M1753.6 864.9L1827.6 864.9M1798.2 764L1823.9 764M2155 762.8L2151.3 863.8L2159.8 1020.3M2180.7 762.8C2180.8 765.4 2180.9 773.6 2181.2 778.4C2181.5 783.2 2181.5 785.5 2182.3 791.6C2183.1 797.7 2184.5 808.3 2185.9 814.8C2187.3 821.2 2188.6 825.4 2190.8 830.3C2193 835.2 2195.8 839.8 2199.2 844.3C2202.6 848.8 2206.8 854.4 2211.2 857.6C2215.5 860.8 2223 862.7 2225.3 863.7M2225.3 863.7L2221.5 944.8L2217.2 1025.9M2217.2 767.2L2217.2 1025.9M2217.2 1025.9C2212.4 1024.8 2198.1 1020.5 2188.5 1019.6C2178.9 1018.7 2164.6 1020.2 2159.8 1020.3M2225.3 863.7L2151.3 863.7M2180.7 762.8L2155 762.8M1790.5 1098.9L1761.6 1212L1735.4 1326.7M1790.5 1098.9C1795 1100 1808.5 1103.3 1817.5 1105.3C1826.5 1107.3 1835.2 1109.5 1844.8 1110.8C1854.3 1112.1 1862.3 1112.7 1874.8 1113.3C1887.3 1113.9 1912.1 1114.2 1919.6 1114.4M1735.4 1326.7C1742.8 1327.9 1765.3 1331.6 1780 1333.9C1794.7 1336.2 1808.5 1338.7 1823.5 1340.4C1838.5 1342.1 1854.3 1343.3 1870.3 1344.2C1886.3 1345.1 1911.4 1345.4 1919.6 1345.6M1735.4 1097.8L1735.4 1326.7M2048.7 1098.9L2077.6 1212L2103.8 1326.7M2048.7 1098.9C2044.2 1100 2030.7 1103.3 2021.7 1105.3C2012.6 1107.3 2003.9 1109.5 1994.4 1110.8C1984.8 1112.1 1976.9 1112.7 1964.4 1113.3C1951.9 1113.9 1927.1 1114.2 1919.6 1114.4M2103.8 1326.7C2096.4 1327.9 2073.9 1331.6 2059.2 1333.9C2044.5 1336.2 2030.7 1338.7 2015.7 1340.4C2000.6 1342.1 1984.9 1343.3 1968.9 1344.2C1952.9 1345.1 1927.8 1345.4 1919.6 1345.6M2103.8 1097.8L2103.8 1326.7M407.2 311.7C409.8 310.2 417 307.7 423 302.9C429 298.1 438.1 289.1 443.2 282.8C448.3 276.5 449.6 271.3 453.5 264.9C457.4 258.5 461.9 251.8 466.8 244.4C471.7 237.1 478.4 226.5 482.7 220.8C487 215.1 488.4 213.1 492.8 210C497.2 206.9 502.6 204.4 508.8 202.5C515 200.6 523.5 199.4 530.3 198.6C537.1 197.8 541.5 197 549.5 197.9C557.5 198.8 570.4 200.2 578.4 203.9C586.4 207.7 591.2 213.7 597.5 220.4C603.8 227.1 609.7 235.6 616.1 244C622.5 252.4 629 262.5 636 271C643 279.5 652.2 289.3 658 294.9C663.8 300.5 665.1 301.8 670.7 304.5C676.2 307.2 687.9 310.2 691.3 311.4M407.2 311.7L427.4 412.5L445.4 563.5M691.3 311.4L671.4 412.5L652.8 563.5M445.4 197.4L445.4 563.5L652.8 563.5L652.8 197.4M548.5 197L548.5 556M1433.3 298.9C1430.7 297.4 1423.5 294.9 1417.5 290.1C1411.5 285.3 1402.4 276.3 1397.3 270C1392.2 263.7 1390.9 258.5 1387 252.1C1383.1 245.7 1378.6 238.9 1373.7 231.6C1368.8 224.2 1362.1 213.7 1357.8 208C1353.5 202.3 1352 200.2 1347.7 197.2C1343.4 194.1 1338 191.6 1331.7 189.7C1325.5 187.8 1317 186.6 1310.2 185.8C1303.4 185 1299 184.2 1291 185.1C1283 186 1270.1 187.3 1262.1 191.1C1254.1 194.8 1249.3 200.9 1243 207.6C1236.7 214.3 1230.8 222.8 1224.4 231.2C1218 239.6 1211.5 249.7 1204.5 258.2C1197.5 266.7 1188.3 276.5 1182.5 282.1C1176.7 287.7 1175.3 288.9 1169.8 291.7C1164.2 294.4 1152.6 297.4 1149.2 298.6M1433.3 298.9L1413.1 399.7L1395.1 550.7M1149.2 298.6L1169.1 399.7L1187.7 550.7M1395.1 184.6L1395.1 550.7L1187.7 550.7L1187.7 184.6M1292 185.2L1292 240.2M1955 444.6C1945.9 444.4 1921 443.8 1900.5 443.4C1880 443 1852.7 442.6 1831.8 442.3C1810.9 442 1784.6 441.6 1775.2 441.5M1775.2 441.5L1786.2 484M1786.2 484C1793.8 483.5 1816.4 481.8 1831.5 480.8C1846.6 479.8 1856.4 478.9 1877 478.2C1897.6 477.5 1942 476.9 1955 476.7M1786.2 484L1790.4 498.8M1790.4 498.8C1797.4 499.4 1817.7 501.4 1832.5 502.4C1847.3 503.4 1859 504.1 1879.4 504.6C1899.8 505.1 1942.4 505.4 1955 505.6M1955 444.6C1964.1 444.4 1989 443.8 2009.5 443.4C2030 443 2057.3 442.6 2078.2 442.3C2099.1 442 2125.4 441.6 2134.8 441.5M2134.8 441.5L2123.8 484M2123.8 484C2116.2 483.5 2093.6 481.8 2078.5 480.8C2063.4 479.8 2053.6 478.9 2033 478.2C2012.4 477.5 1968 476.9 1955 476.7M2123.8 484L2119.6 498.8M2119.6 498.8C2112.6 499.4 2092.3 501.4 2077.5 502.4C2062.7 503.4 2051 504.1 2030.6 504.6C2010.2 505.1 1967.6 505.4 1955 505.6M1847.7 677.8L1846.4 640L1844.2 594.6M1844.2 594.6L1907 561.8M1907 561.8C1907.9 564 1909.1 571.3 1912.3 575.2C1915.5 579.1 1920.6 582.6 1926.2 585.1C1931.8 587.6 1938.6 589.1 1946 590.3C1953.4 591.5 1966.3 591.9 1970.4 592.2M1907 561.8L1970.4 561.8M1876.5 674L1876.5 689M1936.5 674L1936.5 689M2093.1 677.8L2094.4 640L2096.6 594.6M2096.6 594.6L2033.8 561.8M2033.8 561.8C2032.9 564 2031.7 571.3 2028.5 575.2C2025.3 579.1 2020.2 582.6 2014.6 585.1C2009 587.6 2002.2 589.1 1994.8 590.3C1987.4 591.5 1974.5 591.9 1970.4 592.2M2033.8 561.8L1970.4 561.8M2064.3 674L2064.3 689M2004.3 674L2004.3 689" stroke="#ff0000"/><path d="M682.3 707.9C683.5 711.5 687.8 722.2 689.5 729.5C691.2 736.8 692.3 742.5 692.7 751.8C693.1 761.1 692.9 775.3 691.9 785.4C690.9 795.5 689.9 804.5 687 812.5C684.1 820.5 679.5 827.7 674.3 833.3C669.1 838.9 663.6 842.7 655.9 846C648.2 849.3 632.6 852.1 628 853.3M682.3 707.9L729.4 682.3L751 672.7M626.4 647.2L626.4 1022.2L806.6 1022.2M626.4 1022.2L688 1036.7L749.7 1047.5L835.6 1048M751 672.7L806 672.7L806 742M628 853.3L806 853.3M751.5 672.7L751.5 1047.5M790.9 672.7L790.9 1047.5M825.2 673.5L825.2 1047.5M729.4 682.3C733.3 692.8 744.4 721.3 752.6 745.4C760.9 769.5 772.7 802 778.9 826.9C785.1 851.8 788.1 883.6 790 895M753.4 676.7C754.8 680.6 758.8 692.7 762 700C765.2 707.3 768.2 715.1 772.5 720.7C776.8 726.3 782.1 730.2 787.7 733.5C793.3 736.8 799.8 739.2 806 740.6C812.2 742 822 741.7 825.2 741.9M683 703.6L806 703.6M701.4 827.2L778.9 827.2M704.6 836.2L704.6 912.2L776.5 912.2L776.5 836.2M715.1 767.3L721.6 752.8L721.6 954.4M1062.7 710.4C1061.5 714 1057.2 724.7 1055.5 732C1053.8 739.3 1052.7 745 1052.3 754.3C1051.9 763.6 1052.1 777.8 1053.1 787.9C1054 798 1055.1 807 1058 815C1060.9 823 1065.5 830.2 1070.7 835.8C1075.9 841.4 1081.4 845.2 1089.1 848.5C1096.8 851.8 1112.3 854.6 1117 855.8M1062.7 710.4L1015.6 684.8L994 675.2M1118.6 649.7L1118.6 1024.7L938.4 1024.7M1118.6 1024.7L1057 1039.2L995.3 1050L909.4 1050.5M994 675.2L939 675.2L939 744.5M1117 855.8L939 855.8M993.5 675.2L993.5 1050M954.1 675.2L954.1 1050M919.8 676L919.8 1050M1015.6 684.8C1011.7 695.3 1000.6 723.8 992.4 747.9C984.1 772 972.3 804.5 966.1 829.4C959.9 854.3 956.9 886.1 955 897.5M991.6 679.2C990.2 683.1 986.2 695.2 983 702.5C979.8 709.8 976.8 717.6 972.5 723.2C968.2 728.8 962.9 732.7 957.3 736C951.7 739.3 945.2 741.7 939 743.1C932.8 744.5 923 744.2 919.8 744.4M1062 706.1L939 706.1M1043.6 829.7L966.1 829.7M1040.4 838.7L1040.4 914.7L968.5 914.7L968.5 838.7M1017.2 768.9L1023.7 754.4L1023.7 957.5M674.4 1071L646 1184L618.4 1299M674.4 1071L735 1081.5L795.8 1087.7L832.5 1087.7M618.4 1299L695 1311.5L795.8 1319L832.5 1319.6M618.4 1067L618.4 1299M797 1087.7L797 1140L798 1142L798 1258L799 1260L799 1319.3M812.3 1087.7L812.3 1180L811.3 1182L811.3 1319.3M823.3 1087.7L823.3 1180L822.3 1182L822.3 1319.3M609.5 1299.6L832.5 1299.6M743.9 1137L750.4 1122.5L750.4 1232.5M1117.5 1071L1145.9 1184L1173.5 1299M1117.5 1071L1056.9 1081.5L996.1 1087.7L959.4 1087.7M1173.5 1299L1096.9 1311.5L996.1 1319L959.4 1319.6M1173.5 1067L1173.5 1299M994.9 1087.7L994.9 1140L993.9 1142L993.9 1258L992.9 1260L992.9 1319.3M979.6 1087.7L979.6 1180L980.6 1182L980.6 1319.3M968.6 1087.7L968.6 1180L969.6 1182L969.6 1319.3M1182.4 1299.6L959.4 1299.6M1034.9 1137L1041.4 1122.5L1041.4 1232.5M523.6 931L523.6 1305.4M559.3 931L559.3 1305.4M523.6 1305.4L559.3 1305.4M464.4 938.2L503.2 1054.0C504.2 1056.7 507 1061.8 509.2 1070C511.4 1078.2 514.6 1091.5 516.6 1103C518.6 1114.5 520 1126.5 521.1 1139C522.2 1151.5 522.8 1169.1 523.2 1177.8C523.6 1186.5 523.5 1189 523.6 1191.2M464.4 938.2L484.4 929M484.4 929L493 948L500.2 964.2L506.2 978.3M506.2 978.3C508.4 980.2 513.9 986.5 519.6 989.6C525.3 992.7 533.9 995.5 540.5 997.1C547.1 998.7 555.9 998.9 559 999.2M1268.3 912.3L1268.3 1286.7M1232.6 912.3L1232.6 1286.7M1268.3 1286.7L1232.6 1286.7M1327.5 919.5L1288.7 1035.3C1287.7 1038 1284.9 1043.1 1282.7 1051.3C1280.5 1059.5 1277.3 1072.8 1275.3 1084.3C1273.3 1095.8 1271.9 1107.8 1270.8 1120.3C1269.7 1132.8 1269.1 1150.4 1268.7 1159.1C1268.3 1167.8 1268.4 1170.3 1268.3 1172.5M1327.5 919.5L1307.5 910.3M1307.5 910.3L1298.9 929.3L1291.7 945.5L1285.7 959.6M1285.7 959.6C1283.5 961.5 1278 967.8 1272.3 970.9C1266.6 974 1258 976.8 1251.4 978.4C1244.8 980 1236 980.1 1232.9 980.5M456.9 826.3L492.5 826.3M456.9 902.2L492.5 902.2M456.9 826.3L456.9 902.2M492.5 826.3L492.5 902.2M474.7 841.3L474.7 887.2M474.7 841.3L471.7 850.3M522.5 825.6L558.4 825.6M522.5 901.3L558.4 901.3M522.5 825.6L522.5 901.3M558.4 825.6L558.4 901.3M540.5 840.6L540.5 886.3M540.5 840.6L537.5 849.6M1172.8 802.2L1208.8 802.2M1172.8 878.4L1208.8 878.4M1172.8 802.2L1172.8 878.4M1208.8 802.2L1208.8 878.4M1190.8 817.2L1190.8 863.4M1190.8 863.4L1193.8 854.4M1241.6 802.2L1277.5 802.2M1241.6 878.4L1277.5 878.4M1241.6 802.2L1241.6 878.4M1277.5 802.2L1277.5 878.4M1259.5 817.2L1259.5 863.4M1259.5 863.4L1262.5 854.4M498 708L575.6 708M498 708L498.4 713.5M575.6 708L575.2 713.5M500.6 736.3L496 744.5L536.3 748.8L577.5 744.5L573 736.3M536.3 708L536.3 759M1247 690.2L1169.4 690.2M1247 690.2L1246.6 695.7M1169.4 690.2L1169.8 695.7M1244.4 718.5L1249 726.7L1208.7 731L1167.5 726.7L1172 718.5M1208.7 690.2L1208.7 741.2M1934.6 768.9L1921 874.6L1907.8 1037.5M1907.8 1037.5L1970.3 1037.5M1921 874.6L1970.3 874.6M1934.6 768.9L1970.3 768.9M2006 768.9L2019.6 874.6L2032.8 1037.5M2032.8 1037.5L1970.3 1037.5M2019.6 874.6L1970.3 874.6M2006 768.9L1970.3 768.9M1970.3 760.4L1970.3 1046.5M1961.3 830.9L1967.4 817.5L1967.4 961M1842.2 775L1848.3 879.5L1846.6 1042.3M1903.7 775L1895.7 879.5L1887.2 1042.3M1846.6 1042.3L1887.2 1042.3M1848.3 879.5L1895.7 879.5M1842.2 775L1903.7 775M1856.3 775L1856.3 1042.3M1866.1 838.1L1872.6 823.6L1872.6 965.8M2109.9 761.8L2103.8 866.3L2105.5 1029.1M2048.4 761.8L2056.4 866.3L2064.9 1029.1M2105.5 1029.1L2064.9 1029.1M2103.8 866.3L2056.4 866.3M2109.9 761.8L2048.4 761.8M2095.8 761.8L2095.8 1029.1M2072 824.7L2078.5 810.2L2078.5 952.4M1821.7 764L1825.3 867.3L1816.7 1030.7M1793.3 764C1793.2 766.7 1792.9 775.1 1792.5 780C1792.1 784.9 1791.7 787.4 1790.8 793.6C1789.9 799.8 1788.6 810.4 1787 817C1785.4 823.6 1783.6 828.3 1781.1 833.5C1778.6 838.7 1775.6 843.4 1771.9 848C1768.2 852.6 1763.9 858 1759.2 861.2C1754.5 864.4 1746.4 866.3 1743.8 867.3M1743.8 867.3L1748 951L1752.5 1036.3M1752.5 768.4L1752.5 1036.3M1752.5 1036.3C1757.8 1035.2 1773.9 1030.9 1784.6 1030C1795.3 1029.1 1811.3 1030.6 1816.7 1030.7M1743.8 867.3L1825.3 867.3M1793.3 764L1821.7 764M1794.4 825.9L1800.9 811.4L1800.9 872M2157.2 762.8L2153.6 866.1L2162.2 1029.5M2185.6 762.8C2185.7 765.5 2186 773.9 2186.4 778.8C2186.8 783.7 2187.2 786.2 2188.1 792.4C2189 798.6 2190.3 809.1 2191.9 815.8C2193.5 822.4 2195.3 827.1 2197.8 832.3C2200.3 837.5 2203.3 842.2 2207 846.8C2210.7 851.4 2215 856.8 2219.7 860C2224.4 863.2 2232.5 865.1 2235.1 866.1M2235.1 866.1L2230.9 949.8L2226.4 1035.1M2226.4 767.2L2226.4 1035.1M2226.4 1035.1C2221.1 1034 2205 1029.7 2194.3 1028.8C2183.6 1027.9 2167.5 1029.4 2162.2 1029.5M2235.1 866.1L2153.6 866.1M2185.6 762.8L2157.2 762.8M2171 825.5L2177.5 811L2177.5 900M1781.1 1098.9L1752 1212L1725.6 1326.7M1781.1 1098.9C1786.2 1100 1801.6 1103.5 1812 1105.5C1822.4 1107.5 1832.9 1109.7 1843.3 1111C1853.7 1112.3 1861.7 1112.7 1874.4 1113.3C1887.1 1113.9 1912.1 1114.2 1919.6 1114.4M1725.6 1326.7C1733.8 1328 1758.9 1332.1 1775 1334.5C1791.1 1336.9 1806.2 1339.3 1822 1341C1837.8 1342.7 1853.7 1343.7 1870 1344.5C1886.3 1345.3 1911.3 1345.4 1919.6 1345.6M1725.6 1097.8L1725.6 1326.7M1843.3 1108L1843.3 1116M1874.4 1110L1874.4 1118M2058.1 1098.9L2087.2 1212L2113.6 1326.7M2058.1 1098.9C2052.9 1100 2037.6 1103.5 2027.2 1105.5C2016.8 1107.5 2006.3 1109.7 1995.9 1111C1985.5 1112.3 1977.5 1112.7 1964.8 1113.3C1952.1 1113.9 1927.1 1114.2 1919.6 1114.4M2113.6 1326.7C2105.4 1328 2080.3 1332.1 2064.2 1334.5C2048.1 1336.9 2033 1339.3 2017.2 1341C2001.4 1342.7 1985.5 1343.7 1969.2 1344.5C1952.9 1345.3 1927.9 1345.4 1919.6 1345.6M2113.6 1097.8L2113.6 1326.7M1995.9 1108L1995.9 1116M1964.8 1110L1964.8 1118M1919.6 1104.4L1919.6 1345.6M1715.6 1327.8L2123.6 1327.8M1914.5 1163.5L1919.6 1152M402.8 311.7C405.6 310 413.1 306.8 419.4 301.7C425.7 296.6 435.3 287.4 440.6 281C445.9 274.6 447 269.7 451 263.3C455 256.9 459.5 250.2 464.4 242.8C469.3 235.4 476.1 224.7 480.5 218.9C484.9 213.1 486.4 211 491 207.8C495.6 204.7 501.3 202 507.8 200C514.3 198 523 196.8 530 196C537 195.2 541.3 194.4 549.5 195.3C557.7 196.2 571.1 197.6 579.4 201.4C587.7 205.2 592.9 211.5 599.4 218.3C605.9 225.1 611.8 233.7 618.3 242.2C624.8 250.7 631.2 260.9 638.3 269.4C645.3 277.9 654.7 287.6 660.6 293.3C666.5 299 668.1 300.3 673.9 303.3C679.7 306.3 692 310 695.6 311.4M402.8 311.7L422.7 414L440.6 570.5M695.6 311.4L676 414L657.6 570.5M440.6 195.6L440.6 570.5L657.6 570.5L657.6 195.6M549.5 186L549.5 601M391 311.5L702 311.5M549.5 272L540.5 292.5M1437.7 298.9C1434.9 297.2 1427.4 294 1421.1 288.9C1414.8 283.8 1405.2 274.6 1399.9 268.2C1394.6 261.8 1393.5 256.9 1389.5 250.5C1385.5 244.1 1381 237.4 1376.1 230C1371.2 222.6 1364.4 211.9 1360 206.1C1355.6 200.3 1354 198.2 1349.5 195C1345 191.8 1339.2 189.2 1332.7 187.2C1326.2 185.2 1317.5 184 1310.5 183.2C1303.5 182.4 1299.2 181.6 1291 182.5C1282.8 183.4 1269.4 184.8 1261.1 188.6C1252.8 192.4 1247.6 198.7 1241.1 205.5C1234.6 212.3 1228.7 220.9 1222.2 229.4C1215.7 237.9 1209.2 248.1 1202.2 256.6C1195.2 265.1 1185.8 274.9 1179.9 280.5C1174 286.1 1172.4 287.5 1166.6 290.5C1160.8 293.5 1148.5 297.2 1144.9 298.6M1437.7 298.9L1417.8 401.2L1399.9 557.7M1144.9 298.6L1164.5 401.2L1182.9 557.7M1399.9 182.8L1399.9 557.7L1182.9 557.7L1182.9 182.8M1291 173.2L1291 588.2M1449.5 298.7L1138.5 298.7M1291 259.2L1282 279.7M1955 444.6C1945.8 444.4 1920.8 443.8 1900 443.4C1879.2 443 1851.6 442.6 1830 442.3C1808.4 442 1780.2 441.6 1770.3 441.5M1770.3 441.5L1781.3 484M1781.3 484C1789.4 483.5 1814.1 481.8 1830 480.8C1845.9 479.8 1855.9 478.9 1876.7 478.2C1897.5 477.5 1942 476.9 1955 476.7M1781.3 484L1785.5 498.8M1785.5 498.8C1793.1 499.4 1815.4 501.6 1831 502.6C1846.6 503.6 1858.3 504.1 1879 504.6C1899.7 505.1 1942.3 505.4 1955 505.6M1879 500L1879 508M1955 444.6C1964.2 444.4 1989.2 443.8 2010 443.4C2030.8 443 2058.4 442.6 2080 442.3C2101.6 442 2129.8 441.6 2139.7 441.5M2139.7 441.5L2128.7 484M2128.7 484C2120.6 483.5 2095.9 481.8 2080 480.8C2064.1 479.8 2054.1 478.9 2033.3 478.2C2012.5 477.5 1968 476.9 1955 476.7M2128.7 484L2124.5 498.8M2124.5 498.8C2116.9 499.4 2094.6 501.6 2079 502.6C2063.4 503.6 2051.7 504.1 2031 504.6C2010.3 505.1 1967.7 505.4 1955 505.6M2031 500L2031 508M1848.4 462.2L2062.2 462.2L2044.4 454.4M1970.4 677.8L1843.3 677.8M1843.3 677.8L1842 640L1840 594.4M1840 594.4L1906.7 560M1906.7 560C1907.6 562.3 1908.8 569.9 1912 574C1915.2 578.1 1920.3 581.8 1926 584.5C1931.7 587.2 1938.6 588.7 1946 590C1953.4 591.3 1966.3 591.8 1970.4 592.2M1906.7 560L1970.4 560M1905.5 560L1905.5 592.2M1872.5 672.5L1872.5 682M1932.5 672.5L1932.5 682M1970.4 677.8L2097.5 677.8M2097.5 677.8L2098.8 640L2100.8 594.4M2100.8 594.4L2034.1 560M2034.1 560C2033.2 562.3 2032 569.9 2028.8 574C2025.6 578.1 2020.5 581.8 2014.8 584.5C2009.1 587.2 2002.2 588.7 1994.8 590C1987.4 591.3 1974.5 591.8 1970.4 592.2M2034.1 560L1970.4 560M2035.3 560L2035.3 592.2M2068.3 672.5L2068.3 682M2008.3 672.5L2008.3 682M1970.4 592.2L1970.4 677.8M1840 597.8L2101 597.8" stroke="#55ff55"/><path d="M664.8 698.9C666.2 703.7 671.2 718.7 673.3 727.5C675.4 736.3 677.2 741.8 677.6 751.8C678 761.8 676.7 777.2 675.4 787.4C674.1 797.6 672.7 806 669.9 813C667.1 820 663.8 824.8 658.7 829.3C653.6 833.8 647.6 837.2 639.5 840.1C631.4 843 614.8 845.4 609.8 846.5M664.8 698.9L723.4 668.9L751 658.1M608 848.5L608 1040.8L688 1055.3L749.7 1066.7L835.6 1067.2M1080.2 701.4C1078.8 706.2 1073.8 721.2 1071.7 730C1069.6 738.8 1067.8 744.3 1067.4 754.3C1067 764.3 1068.3 779.7 1069.6 789.9C1070.9 800.1 1072.3 808.5 1075.1 815.5C1077.9 822.5 1081.2 827.3 1086.3 831.8C1091.4 836.3 1097.3 839.7 1105.5 842.6C1113.7 845.5 1130.2 847.9 1135.2 849M1080.2 701.4L1021.6 671.4L994 660.6M1137 851L1137 1043.3L1057 1057.8L995.3 1069.2L909.4 1069.7M659.1 1061.5L627.2 1184L600.1 1299M659.1 1061.5L732 1071.9L797.8 1077.4M596.1 1321.4L689 1334.8L795.8 1343M600.1 1299L596.1 1321.4M1132.8 1061.5L1164.7 1184L1191.8 1299M1132.8 1061.5L1059.9 1071.9L994.1 1077.4M1195.8 1321.4L1102.9 1334.8L996.1 1343M1191.8 1299L1195.8 1321.4M452.4 931.4L490.7 916.4M1339.5 912.7L1301.2 897.7M1924.9 768.9L1910.7 875.6L1896.4 1046.8M1896.4 1046.8L1895.9 1055.8L1970.3 1055.8M2015.7 768.9L2029.9 875.6L2044.2 1046.8M2044.2 1046.8L2044.7 1055.8L1970.3 1055.8M1914.6 775L1905.2 880.5L1895.7 1051.6M1845.7 1060.2L1887.2 1060.2M2037.5 761.8L2046.9 867.3L2056.4 1038.4M2106.4 1047L2064.9 1047M1829 764L1832.3 869.6L1823.8 1039.9M1778.4 758C1778.2 761.7 1777.9 774 1777.3 780.4C1776.7 786.8 1775.5 789.8 1774.5 796.4C1773.5 803 1772.7 813.8 1771 820C1769.3 826.2 1767.2 829.1 1764.6 833.5C1762 837.9 1759.2 842.5 1755.6 846.5C1752 850.5 1748 855.2 1742.7 857.6C1737.4 860 1727.1 860.6 1724 861.2M1724.5 869.7L1729.1 956L1733.8 1045.5M1733.8 1045.5L1733.8 1054L1778.8 1047.9L1823.8 1048.9L1823.8 1039.9M1778.4 755.2L1829 755.2L1829 764M2149.9 762.8L2146.6 868.4L2155.1 1038.7M2200.5 756.8C2200.7 760.5 2200.9 772.8 2201.6 779.2C2202.2 785.6 2203.4 788.6 2204.4 795.2C2205.5 801.8 2206.2 812.6 2207.9 818.8C2209.6 825 2211.7 827.9 2214.3 832.3C2216.9 836.7 2219.7 841.3 2223.3 845.3C2227 849.3 2230.9 854 2236.2 856.4C2241.5 858.8 2251.8 859.4 2254.9 860M2254.4 868.5L2249.8 954.8L2245.1 1044.3M2245.1 1044.3L2245.1 1052.8L2200.1 1046.7L2155.1 1047.7L2155.1 1038.7M2200.5 754L2149.9 754L2149.9 762.8M1764.7 1088.9L1733.1 1212L1706.8 1326.7M1764.7 1088.9C1770.5 1090 1787 1093.7 1799.5 1095.7C1812 1097.8 1827.4 1099.9 1839.8 1101.2C1852.2 1102.5 1868.3 1103 1874 1103.3M1702.4 1348.7C1712.3 1350.2 1742.8 1355 1762 1357.6C1781.2 1360.2 1799.5 1362.5 1817.5 1364.1C1835.5 1365.7 1861 1366.7 1869.7 1367.2M1706.8 1326.7L1702.4 1349M2074.5 1088.9L2106.1 1212L2132.4 1326.7M2074.5 1088.9C2068.7 1090 2052.2 1093.7 2039.7 1095.7C2027.2 1097.8 2011.8 1099.9 1999.4 1101.2C1987 1102.5 1970.9 1103 1965.2 1103.3M2136.8 1348.7C2126.9 1350.2 2096.4 1355 2077.2 1357.6C2058 1360.2 2039.6 1362.5 2021.7 1364.1C2003.7 1365.7 1978.2 1366.7 1969.5 1367.2M2132.4 1326.7L2136.8 1349M387.4 304.7C391.1 302.7 402.5 297.8 409.8 292.5C417.1 287.2 425.9 278.7 431 272.7C436.1 266.7 436.7 262.8 440.5 256.7C444.3 250.6 448.9 243.9 454 236.2C459.1 228.5 466.4 216.8 471.3 210.5C476.2 204.2 477.9 201.8 483.2 198.1C488.5 194.4 495.7 190.8 503.3 188.5C510.9 186.2 521 184.9 528.7 184C536.4 183.1 540.4 182.3 549.5 183.3C558.6 184.3 573.6 185.5 583.4 189.9C593.2 194.3 600.8 202.2 608.3 209.7C615.8 217.2 621.6 226.1 628.3 234.9C635 243.7 641.4 253.9 648.4 262.3C655.4 270.7 664.4 279.9 670.2 285.2C676 290.5 676.3 290.9 683.1 294.1C689.9 297.3 706.3 302.7 710.9 304.4M387.4 307.7L408 415.5L426.3 577.5M710.9 307.4L690.6 415.5L671.9 577.5M426.3 577.5L426.6 600.7L671.6 600.7L671.9 577.5M1453.1 291.9C1449.4 289.9 1438 285 1430.7 279.7C1423.4 274.4 1414.6 265.9 1409.5 259.9C1404.4 253.9 1403.8 250 1400 243.9C1396.2 237.8 1391.6 231.1 1386.5 223.4C1381.4 215.7 1374.1 204 1369.2 197.7C1364.3 191.3 1362.6 189 1357.3 185.3C1352 181.6 1344.8 178 1337.2 175.7C1329.6 173.3 1319.5 172.1 1311.8 171.2C1304.1 170.3 1300.1 169.5 1291 170.5C1281.9 171.5 1266.9 172.7 1257.1 177.1C1247.3 181.5 1239.7 189.4 1232.2 196.9C1224.7 204.4 1218.9 213.3 1212.2 222.1C1205.5 230.9 1199.1 241.1 1192.1 249.5C1185.1 257.9 1176.1 267.1 1170.3 272.4C1164.5 277.7 1164.2 278.1 1157.4 281.3C1150.6 284.5 1134.2 289.9 1129.6 291.6M1453.1 294.9L1432.5 402.7L1414.2 564.7M1129.6 294.6L1149.9 402.7L1168.6 564.7M1414.2 564.7L1413.9 587.9L1168.9 587.9L1168.6 564.7M1899.5 434.8C1887.5 434.5 1851.6 433 1827.2 433C1802.8 433 1765.7 434.3 1753.4 434.6M1753.4 434.6L1767.4 486.3M1767.4 486.3L1772.4 507.5M1772.4 507.5C1781.4 508.4 1808.8 511.9 1826.5 513.1C1844.2 514.3 1869.9 514.5 1878.6 514.8M2010.5 434.8C2022.5 434.5 2058.5 433 2082.8 433C2107.2 433 2144.3 434.3 2156.6 434.6M2156.6 434.6L2142.6 486.3M2142.6 486.3L2137.6 507.5M2137.6 507.5C2128.6 508.4 2101.2 511.9 2083.5 513.1C2065.8 514.3 2040.1 514.5 2031.4 514.8M1829.9 677.8L1828.6 640L1825.8 593.2M1824.8 591.2L1908.7 545.6M1914.1 553.7C1915.1 556.4 1917.2 565.9 1920.2 569.8C1923.2 573.7 1929.9 575.7 1931.8 576.9M2110.9 677.8L2112.2 640L2115 593.2M2116 591.2L2032.1 545.6M2026.7 553.7C2025.7 556.4 2023.6 565.9 2020.6 569.8C2017.7 573.7 2010.9 575.7 2009 576.9" stroke="#ffff55" stroke-dasharray="3 3"/><path d="M678.3 698.9C679.6 703.7 683.7 718.7 685.9 727.5C688.1 736.3 689.9 741.8 691.4 751.8C692.9 761.8 695.2 777.4 694.9 787.4C694.6 797.4 691.9 805.5 689.7 811.5C687.5 817.5 685.7 819.3 681.5 823.3C677.3 827.3 672 832.5 664.7 835.3C657.3 838.1 641.9 839.1 637.4 839.9M678.3 698.9L726.4 673.1L751 665.9M635.6 841.9L635.6 1012.9L688 1027.4L749.7 1037.9L835.6 1038.4M765.5 682L777.3 708.7M1066.7 701.4C1065.4 706.2 1061.3 721.2 1059.1 730C1056.9 738.8 1055.1 744.3 1053.6 754.3C1052.1 764.3 1049.8 779.9 1050.1 789.9C1050.4 799.9 1053.1 808 1055.3 814C1057.5 820 1059.3 821.8 1063.5 825.8C1067.7 829.8 1073 835 1080.3 837.8C1087.6 840.6 1103 841.6 1107.6 842.4M1066.7 701.4L1018.6 675.6L994 668.4M1109.4 844.4L1109.4 1015.4L1057 1029.9L995.3 1040.4L909.4 1040.9M979.5 684.5L967.7 711.2M687 1061.5L655.1 1184L628 1299M687 1061.5L741 1070.7L797.8 1077.4M624 1321.4L698 1333.9L795.8 1343M628 1299L624 1321.4M1104.9 1061.5L1136.8 1184L1163.9 1299M1104.9 1061.5L1050.9 1070.7L994.1 1077.4M1167.9 1321.4L1093.9 1333.9L996.1 1343M1163.9 1299L1167.9 1321.4M454.8 932.6L496.6 1053.6L505.6 1083.2M456 934.5L492.5 920.5M490.7 916.4L508.3 962.7M1337.1 913.9L1295.3 1034.9L1286.3 1064.5M1335.9 915.8L1299.4 901.8M1301.2 897.7L1283.6 944M1932.1 768.9L1916.1 872.6L1903.6 1018.9M1903.6 1019.6L1903.1 1028.6L1970.3 1028.6M2008.5 768.9L2024.5 872.6L2037 1018.9M2037 1019.6L2037.5 1028.6L1970.3 1028.6M1846.9 1032.7L1887.2 1032.7M2105.2 1019.5L2064.9 1019.5M1835.6 764L1839.2 862.7L1831 1012.3M1793.1 758C1793.1 761.5 1793.1 773.2 1792.9 779.2C1792.7 785.2 1792.5 787.7 1791.9 794C1791.2 800.3 1790 811.4 1789 817C1788 822.6 1787.3 823.8 1785.6 827.5C1783.9 831.2 1781.9 835.2 1779 839C1776.1 842.8 1772.5 847.9 1768.2 850.4C1763.9 852.9 1755.9 853.4 1753.4 854M1753.9 862.5L1757.3 941L1761.4 1017.9M1761.4 1017.9L1761.4 1026.4L1796.2 1020.3L1831 1021.3L1831 1012.3M1793.1 755.2L1835.6 755.2L1835.6 764M2143.3 762.8L2139.7 861.5L2147.9 1011.1M2185.8 756.8C2185.8 760.3 2185.8 772 2186 778C2186.2 784 2186.4 786.5 2187 792.8C2187.7 799.1 2188.9 810.2 2189.9 815.8C2190.9 821.4 2191.6 822.6 2193.3 826.3C2195 830 2197 834 2199.9 837.8C2202.8 841.6 2206.4 846.7 2210.7 849.2C2215 851.7 2223 852.2 2225.5 852.8M2225 861.3L2221.6 939.8L2217.5 1016.7M2217.5 1016.7L2217.5 1025.2L2182.7 1019.1L2147.9 1020.1L2147.9 1011.1M2185.8 754L2143.3 754L2143.3 762.8M1792.9 1088.9L1761.9 1212L1736.2 1326.7M1792.9 1088.9C1796.8 1089.9 1807.4 1093.1 1816 1095.1C1824.6 1097 1834.4 1099.2 1844.3 1100.6C1854.2 1102 1870 1102.8 1875.2 1103.3M1731.8 1348.7C1739.3 1349.9 1762 1353.5 1777 1355.8C1792 1358.1 1806.4 1360.5 1822 1362.3C1837.6 1364 1862.5 1365.6 1870.6 1366.3M1736.2 1326.7L1731.8 1349M2046.3 1088.9L2077.3 1212L2103 1326.7M2046.3 1088.9C2042.4 1089.9 2031.8 1093.1 2023.2 1095.1C2014.6 1097 2004.8 1099.2 1994.9 1100.6C1985 1102 1969.1 1102.8 1964 1103.3M2107.4 1348.7C2099.9 1349.9 2077.2 1353.5 2062.2 1355.8C2047.2 1358.1 2032.8 1360.5 2017.2 1362.3C2001.6 1364 1976.7 1365.6 1968.6 1366.3M2103 1326.7L2107.4 1349M400.6 304.7C403.9 303.3 414.2 300.5 420.6 296.1C427 291.7 434.2 283.9 438.8 278.1C443.4 272.3 444.3 267.7 448 261.5C451.7 255.3 456.2 248.6 461.2 241C466.2 233.4 473.3 222.2 477.9 216.2C482.5 210.2 483.9 208.1 488.6 204.7C493.3 201.3 499.5 198.2 506.3 196C513.1 193.8 522.4 192.6 529.6 191.8C536.8 191 541 190.2 549.5 191.1C558 192 571.5 193.2 580.4 197.4C589.2 201.6 595.7 208.8 602.6 216C609.5 223.2 615.2 231.8 621.7 240.3C628.2 248.8 634.7 258.8 641.5 267.1C648.3 275.4 657.1 284.9 662.4 290C667.7 295.1 667.6 295.3 673.5 297.7C679.4 300.1 693.9 303.3 698 304.4M400.6 307.7L422.1 411L440.7 556.5M698 307.4L676.8 411L657.5 556.5M440.7 556.5L441 579.7L657.2 579.7L657.5 556.5M1439.9 291.9C1436.6 290.5 1426.3 287.7 1419.9 283.3C1413.5 278.9 1406.3 271.1 1401.7 265.3C1397.1 259.5 1396.2 254.9 1392.5 248.7C1388.8 242.5 1384.3 235.8 1379.3 228.2C1374.3 220.6 1367.2 209.4 1362.6 203.4C1358 197.4 1356.6 195.3 1351.9 191.9C1347.2 188.5 1341 185.3 1334.2 183.2C1327.4 181 1318.1 179.8 1310.9 179C1303.7 178.2 1299.5 177.4 1291 178.3C1282.5 179.2 1268.9 180.4 1260.1 184.6C1251.2 188.8 1244.8 196 1237.9 203.2C1231 210.3 1225.3 219 1218.8 227.5C1212.3 236 1205.8 246 1199 254.3C1192.2 262.6 1183.4 272.1 1178.1 277.2C1172.8 282.3 1172.9 282.5 1167 284.9C1161.1 287.3 1146.6 290.5 1142.5 291.6M1439.9 294.9L1418.4 398.2L1399.8 543.7M1142.5 294.6L1163.7 398.2L1183 543.7M1399.8 543.7L1399.5 566.9L1183.3 566.9L1183 543.7M1955 436.2C1946 436 1921.4 435.3 1901 434.8C1880.6 434.3 1854.8 433 1832.6 433C1810.4 433 1778.8 434.3 1768.1 434.6M1768.1 434.6L1782.1 486.3M1782.1 486.3L1787.1 507.5M1787.1 507.5C1794.4 508.3 1815.5 511.3 1831 512.5C1846.5 513.7 1871.7 514.4 1879.8 514.8M1955 436.2C1964 436 1988.6 435.3 2009 434.8C2029.4 434.3 2055.2 433 2077.4 433C2099.6 433 2131.1 434.3 2141.9 434.6M2141.9 434.6L2127.9 486.3M2127.9 486.3L2122.9 507.5M2122.9 507.5C2115.6 508.3 2094.4 511.3 2079 512.5C2063.6 513.7 2038.3 514.4 2030.2 514.8M1843.1 677.8L1841.8 640L1838.4 593.8M1837.4 591.8L1909.6 551M1915 559.1C1916 561.5 1918.2 570.1 1921.1 573.4C1924 576.7 1927.9 577.3 1932.4 578.7C1936.9 580.1 1945.4 581.5 1948 582M2097.7 677.8L2099 640L2102.4 593.8M2103.4 591.8L2031.2 551M2025.8 559.1C2024.8 561.5 2022.6 570.1 2019.7 573.4C2016.8 576.7 2012.9 577.3 2008.4 578.7C2003.9 580.1 1995.4 581.5 1992.8 582" stroke="#ffffff" stroke-dasharray="3 3"/><path d="M673.8 698.9C675.1 703.7 679.5 718.7 681.7 727.5C683.9 736.3 685.7 741.8 686.8 751.8C687.9 761.8 689 777.4 688.4 787.4C687.8 797.4 685.5 805.7 683.1 812C680.7 818.3 678.4 821.1 673.9 825.3C669.4 829.4 663.9 834.1 656.3 836.9C648.7 839.7 632.9 841.2 628.2 842.1M673.8 698.9L725.4 671.7L751 663.3M626.4 844.1L626.4 1022.2L688 1036.7L749.7 1047.5L835.6 1048M756.5 684L766 707M1071.2 701.4C1069.9 706.2 1065.5 721.2 1063.3 730C1061.1 738.8 1059.3 744.3 1058.2 754.3C1057.1 764.3 1056 779.9 1056.6 789.9C1057.2 799.9 1059.5 808.2 1061.9 814.5C1064.3 820.8 1066.6 823.6 1071.1 827.8C1075.6 831.9 1081.1 836.6 1088.7 839.4C1096.3 842.2 1112.1 843.7 1116.8 844.6M1071.2 701.4L1019.6 674.2L994 665.8M1118.6 846.6L1118.6 1024.7L1057 1039.2L995.3 1050L909.4 1050.5M988.5 686.5L979 709.5M677.7 1061.5L645.8 1184L618.7 1299M677.7 1061.5L738 1071.1L797.8 1077.4M614.7 1321.4L695 1334.2L795.8 1343M618.7 1299L614.7 1321.4M1114.2 1061.5L1146.1 1184L1173.2 1299M1114.2 1061.5L1053.9 1071.1L994.1 1077.4M1177.2 1321.4L1096.9 1334.2L996.1 1343M1173.2 1299L1177.2 1321.4M453.6 932L495.4 1053L504.4 1082.6L513.2 1139.6M454 933L491.5 918.5M489.5 917L507 963.4M1338.3 913.3L1296.5 1034.3L1287.5 1063.9L1278.7 1120.9M1337.9 914.3L1300.4 899.8M1302.4 898.3L1284.9 944.7M1929.7 768.9L1914.3 873.6L1901.2 1028.2M1901.2 1028.2L1900.7 1037.2L1970.3 1037.2M2010.9 768.9L2026.3 873.6L2039.4 1028.2M2039.4 1028.2L2039.9 1037.2L1970.3 1037.2M1846.5 1041.6L1887.2 1041.6M2105.6 1028.4L2064.9 1028.4M1833.4 764L1836.9 865L1828.6 1021.5M1788.2 758C1788.1 761.6 1788.1 773.5 1787.7 779.6C1787.3 785.7 1786.9 788.4 1786.1 794.8C1785.3 801.2 1784.2 812.2 1783 818C1781.8 823.8 1780.6 825.6 1778.6 829.5C1776.6 833.4 1774.3 837.6 1771.2 841.5C1768.1 845.4 1764.3 850.3 1759.7 852.8C1755.1 855.3 1746.3 855.8 1743.6 856.4M1744.1 864.9L1747.9 946L1752.2 1027.1M1752.2 1027.1L1752.2 1035.6L1790.4 1029.5L1828.6 1030.5L1828.6 1021.5M1788.2 755.2L1833.4 755.2L1833.4 764M2145.5 762.8L2142 863.8L2150.3 1020.3M2190.7 756.8C2190.8 760.4 2190.9 772.3 2191.2 778.4C2191.6 784.5 2192 787.2 2192.8 793.6C2193.6 800 2194.7 811 2195.9 816.8C2197.2 822.6 2198.3 824.4 2200.3 828.3C2202.3 832.2 2204.5 836.4 2207.7 840.3C2210.8 844.2 2214.6 849.1 2219.2 851.6C2223.8 854.1 2232.6 854.6 2235.3 855.2M2234.8 863.7L2231 944.8L2226.7 1025.9M2226.7 1025.9L2226.7 1034.4L2188.5 1028.3L2150.3 1029.3L2150.3 1020.3M2190.7 754L2145.5 754L2145.5 762.8M1783.5 1088.9L1752.3 1212L1726.4 1326.7M1783.5 1088.9C1788 1090 1800.6 1093.3 1810.5 1095.3C1820.4 1097.3 1832.1 1099.5 1842.8 1100.8C1853.5 1102.1 1869.5 1102.9 1874.8 1103.3M1722 1348.7C1730.3 1350 1755.6 1354 1772 1356.4C1788.4 1358.8 1804.1 1361.2 1820.5 1362.9C1836.9 1364.6 1862 1366 1870.3 1366.6M1726.4 1326.7L1722 1349M2055.7 1088.9L2086.9 1212L2112.8 1326.7M2055.7 1088.9C2051.2 1090 2038.6 1093.3 2028.7 1095.3C2018.8 1097.3 2007.1 1099.5 1996.4 1100.8C1985.7 1102.1 1969.7 1102.9 1964.4 1103.3M2117.2 1348.7C2108.9 1350 2083.6 1354 2067.2 1356.4C2050.8 1358.8 2035.1 1361.2 2018.7 1362.9C2002.3 1364.6 1977.2 1366 1968.9 1366.6M2112.8 1326.7L2117.2 1349M396.2 304.7C399.7 303.1 410.3 299.6 417 294.9C423.7 290.2 431.5 282.1 436.2 276.3C441 270.5 441.7 266.1 445.5 259.9C449.3 253.8 453.8 247 458.8 239.4C463.8 231.8 471 220.5 475.7 214.3C480.4 208.2 481.9 206 486.8 202.5C491.7 199 498.2 195.7 505.3 193.5C512.4 191.3 521.9 190 529.3 189.2C536.7 188.4 540.8 187.6 549.5 188.5C558.2 189.4 572.2 190.7 581.4 194.9C590.6 199.1 597.4 206.6 604.5 213.9C611.6 221.2 617.3 229.9 623.9 238.5C630.4 247.1 636.9 257.2 643.8 265.5C650.6 273.8 659.5 283.2 665 288.4C670.5 293.6 670.5 293.8 676.7 296.5C682.9 299.2 698 303.1 702.3 304.4M396.2 307.7L417.4 412.5L435.9 563.5M702.3 307.4L681.4 412.5L662.3 563.5M435.9 563.5L436.2 586.7L662 586.7L662.3 563.5M1444.3 291.9C1440.8 290.3 1430.2 286.8 1423.5 282.1C1416.8 277.4 1409.1 269.3 1404.3 263.5C1399.6 257.7 1398.8 253.2 1395 247.1C1391.2 240.9 1386.7 234.2 1381.7 226.6C1376.7 219 1369.5 207.7 1364.8 201.5C1360.1 195.3 1358.6 193.2 1353.7 189.7C1348.8 186.2 1342.3 182.9 1335.2 180.7C1328.1 178.5 1318.6 177.2 1311.2 176.4C1303.8 175.6 1299.7 174.8 1291 175.7C1282.3 176.6 1268.3 177.9 1259.1 182.1C1249.9 186.3 1243.1 193.8 1236 201.1C1228.9 208.4 1223.2 217.1 1216.6 225.7C1210.1 234.3 1203.6 244.4 1196.7 252.7C1189.8 261 1181 270.4 1175.5 275.6C1170 280.8 1170 281 1163.8 283.7C1157.6 286.4 1142.5 290.3 1138.2 291.6M1444.3 294.9L1423.1 399.7L1404.6 550.7M1138.2 294.6L1159.1 399.7L1178.2 550.7M1404.6 550.7L1404.3 573.9L1178.5 573.9L1178.2 550.7M1900.5 434.8C1888.9 434.5 1853.7 433 1830.8 433C1807.9 433 1774.5 434.3 1763.2 434.6M1763.2 434.6L1777.2 486.3M1777.2 486.3L1782.2 507.5M1782.2 507.5C1790.1 508.4 1813.3 511.5 1829.5 512.7C1845.7 513.9 1871.1 514.5 1879.4 514.8M2009.5 434.8C2021.1 434.5 2056.3 433 2079.2 433C2102.1 433 2135.5 434.3 2146.8 434.6M2146.8 434.6L2132.8 486.3M2132.8 486.3L2127.8 507.5M2127.8 507.5C2119.9 508.4 2096.7 511.5 2080.5 512.7C2064.3 513.9 2038.9 514.5 2030.6 514.8M1838.7 677.8L1837.4 640L1834.2 593.6M1833.2 591.6L1909.3 549.2M1914.7 557.3C1915.7 559.8 1917.9 568.7 1920.8 572.2C1923.7 575.7 1930.3 577.1 1932.2 578.1M2102.1 677.8L2103.4 640L2106.6 593.6M2107.6 591.6L2031.5 549.2M2026.1 557.3C2025.1 559.8 2022.9 568.7 2020 572.2C2017.1 575.7 2010.5 577.1 2008.6 578.1" stroke="#ff0000" stroke-dasharray="3 3"/><path d="M669.3 698.9C670.7 703.7 675.4 718.7 677.5 727.5C679.6 736.3 681.5 741.8 682.2 751.8C682.9 761.8 682.9 777.3 681.9 787.4C680.9 797.5 679.1 805.9 676.5 812.5C673.9 819.1 671.1 823 666.3 827.3C661.5 831.6 655.8 835.7 647.9 838.5C640 841.3 623.8 843.3 619 844.3M669.3 698.9L724.4 670.3L751 660.7M617.2 846.3L617.2 1031.5L688 1046L749.7 1057.1L835.6 1057.6M764.5 680C766 683.5 770.4 694.9 773.3 700.7C776.2 706.5 778.5 710.7 782 715C785.5 719.3 789.5 723.5 794 726.3C798.5 729.1 802.4 730.9 809.3 731.9C816.2 732.9 831.2 732.2 835.6 732.3M835.6 732.3L835.6 1066M1075.7 701.4C1074.3 706.2 1069.7 721.2 1067.5 730C1065.3 738.8 1063.5 744.3 1062.8 754.3C1062.1 764.3 1062.1 779.8 1063.1 789.9C1064 800 1065.9 808.4 1068.5 815C1071.1 821.6 1073.9 825.5 1078.7 829.8C1083.5 834.1 1089.2 838.2 1097.1 841C1105 843.8 1121.2 845.8 1126 846.8M1075.7 701.4L1020.6 672.8L994 663.2M1127.8 848.8L1127.8 1034L1057 1048.5L995.3 1059.6L909.4 1060.1M980.5 682.5C979 686 974.6 697.4 971.7 703.2C968.8 709 966.5 713.2 963 717.5C959.5 721.8 955.5 726 951 728.8C946.5 731.6 942.6 733.4 935.7 734.4C928.8 735.4 913.8 734.7 909.4 734.8M909.4 734.8L909.4 1068.5M668.4 1061.5L636.5 1184L609.4 1299M668.4 1061.5L735 1071.5L797.8 1077.4L832.5 1077.7M605.4 1321.4L692 1334.5L795.8 1343L831.5 1343.6M609.4 1299L605.4 1321.4M832.5 1077.8L832.5 1343.6M1123.5 1061.5L1155.4 1184L1182.5 1299M1123.5 1061.5L1056.9 1071.5L994.1 1077.4L959.4 1077.7M1186.5 1321.4L1099.9 1334.5L996.1 1343L960.4 1343.6M1182.5 1299L1186.5 1321.4M959.4 1077.8L959.4 1343.6M514.4 1314.3L568.5 1314.3M568.5 1295L568.5 1314.3M452.4 931.4L494.2 1052.4L503.2 1082L512 1139L513.7 1176M508.3 962.7C509.2 964.5 511.1 970.2 513.7 973.2C516.3 976.2 519.3 978.1 524 980.7C528.7 983.3 534.7 987.1 542 988.7C549.3 990.3 563.7 990 568 990.2M1277.5 1295.6L1223.4 1295.6M1223.4 1276.3L1223.4 1295.6M1339.5 912.7L1297.7 1033.7L1288.7 1063.3L1279.9 1120.3L1278.2 1157.3M1283.6 944C1282.7 945.8 1280.8 951.5 1278.2 954.5C1275.6 957.5 1272.6 959.4 1267.9 962C1263.2 964.6 1257.2 968.4 1249.9 970C1242.6 971.6 1228.2 971.2 1223.9 971.5M433.4 803.4L502.2 803.4L502.2 911.3L433.4 911.3L433.4 803.4M512.5 801.3L567.5 801.3L567.5 911.3L512.5 911.3L512.5 801.3M1163.4 778.8L1217.5 778.8L1217.5 887.2L1163.4 887.2L1163.4 778.8M1231.3 778.8L1301 778.8L1301 887.2L1231.3 887.2L1231.3 778.8M488.8 698.8L585 698.8L584.5 738.8L581 748L536.3 759L491.5 748L489.2 738.8L488.8 698.8M1256.2 681L1160 681L1160.5 721L1164 730.2L1208.7 741.2L1253.5 730.2L1255.8 721L1256.2 681M1927.3 768.9L1912.5 874.6L1898.8 1037.5M1898.8 1037.5L1898.3 1046.5L1970.3 1046.5M1927.3 760.4L1970.3 760.4M2013.3 768.9L2028.1 874.6L2041.8 1037.5M2041.8 1037.5L2042.3 1046.5L1970.3 1046.5M2013.3 760.4L1970.3 760.4M1840.5 775L1841.3 879.5L1846.1 1042.3M1913.4 775L1904.7 879.5L1895.7 1042.3M1846.1 1050.9L1887.2 1050.9M1840.5 766.5L1913.4 766.5M2111.6 761.8L2110.8 866.3L2106 1029.1M2038.7 761.8L2047.4 866.3L2056.4 1029.1M2106 1037.7L2064.9 1037.7M2111.6 753.3L2038.7 753.3M1831.2 764L1834.6 867.3L1826.2 1030.7M1783.3 758C1783.2 761.7 1783 773.7 1782.5 780C1782 786.3 1781.2 789.1 1780.3 795.6C1779.4 802.1 1778.5 813 1777 819C1775.5 825 1773.9 827.3 1771.6 831.5C1769.3 835.7 1766.8 840 1763.4 844C1760 848 1756.1 852.7 1751.2 855.2C1746.3 857.7 1736.7 858.2 1733.8 858.8M1734.3 867.3L1738.5 951L1743 1036.3M1743 1036.3L1743 1044.8L1784.6 1038.7L1826.2 1039.7L1826.2 1030.7M1783.3 755.2L1831.2 755.2L1831.2 764M2147.7 762.8L2144.3 866.1L2152.7 1029.5M2195.6 756.8C2195.7 760.5 2195.9 772.5 2196.4 778.8C2196.9 785.1 2197.7 787.9 2198.6 794.4C2199.5 800.9 2200.5 811.8 2201.9 817.8C2203.3 823.8 2205 826.1 2207.3 830.3C2209.6 834.5 2212.1 838.8 2215.5 842.8C2218.9 846.8 2222.8 851.5 2227.7 854C2232.6 856.5 2242.2 857 2245.1 857.6M2244.6 866.1L2240.4 949.8L2235.9 1035.1M2235.9 1035.1L2235.9 1043.6L2194.3 1037.5L2152.7 1038.5L2152.7 1029.5M2195.6 754L2147.7 754L2147.7 762.8M1774.1 1088.9L1742.7 1212L1716.6 1326.7M1774.1 1088.9C1779.2 1090 1793.8 1093.5 1805 1095.5C1816.2 1097.5 1829.7 1099.7 1841.3 1101C1852.9 1102.3 1861.4 1102.7 1874.4 1103.3C1887.5 1103.9 1912.1 1104.2 1919.6 1104.4M1712.2 1348.7C1721.3 1350.1 1749.2 1354.5 1767 1357C1784.8 1359.5 1801.8 1361.8 1819 1363.5C1836.2 1365.2 1853.2 1366.2 1870 1366.9C1886.8 1367.7 1911.3 1367.8 1919.6 1368M1716.6 1326.7L1712.2 1349M2065.1 1088.9L2096.5 1212L2122.6 1326.7M2065.1 1088.9C2059.9 1090 2045.4 1093.5 2034.2 1095.5C2023 1097.5 2009.5 1099.7 1997.9 1101C1986.3 1102.3 1977.8 1102.7 1964.8 1103.3C1951.7 1103.9 1927.1 1104.2 1919.6 1104.4M2127 1348.7C2117.9 1350.1 2090 1354.5 2072.2 1357C2054.4 1359.5 2037.4 1361.8 2020.2 1363.5C2003 1365.2 1986 1366.2 1969.2 1366.9C1952.4 1367.7 1927.9 1367.8 1919.6 1368M2122.6 1326.7L2127 1349M391.8 304.7C395.4 302.9 406.4 298.7 413.4 293.7C420.4 288.7 428.7 280.4 433.6 274.5C438.5 268.6 439.2 264.4 443 258.3C446.8 252.2 451.3 245.5 456.4 237.8C461.5 230.2 468.7 218.7 473.5 212.4C478.3 206.2 479.9 203.9 485 200.3C490.1 196.7 497 193.3 504.3 191C511.6 188.7 521.5 187.4 529 186.6C536.5 185.8 540.6 184.9 549.5 185.9C558.4 186.9 572.9 188.1 582.4 192.4C591.9 196.7 599.1 204.4 606.4 211.8C613.7 219.2 619.5 228 626.1 236.7C632.7 245.4 639.2 255.5 646.1 263.9C653 272.2 662 281.6 667.6 286.8C673.2 292 673.4 292.4 679.9 295.3C686.4 298.2 702.1 302.9 706.6 304.4M391.8 307.7L412.7 414L431.1 570.5M706.6 307.4L686 414L667.1 570.5M431.1 570.5L431.4 593.7L666.8 593.7L667.1 570.5M1448.7 291.9C1445.1 290.1 1434.1 285.9 1427.1 280.9C1420.1 275.9 1411.8 267.6 1406.9 261.7C1402 255.8 1401.3 251.6 1397.5 245.5C1393.7 239.4 1389.2 232.7 1384.1 225C1379 217.3 1371.8 205.8 1367 199.6C1362.2 193.3 1360.6 191.1 1355.5 187.5C1350.4 183.9 1343.5 180.5 1336.2 178.2C1328.9 175.9 1319 174.6 1311.5 173.8C1304 172.9 1299.9 172.1 1291 173.1C1282.1 174.1 1267.6 175.3 1258.1 179.6C1248.6 183.9 1241.4 191.6 1234.1 199C1226.8 206.4 1221 215.2 1214.4 223.9C1207.8 232.6 1201.3 242.7 1194.4 251.1C1187.5 259.4 1178.5 268.8 1172.9 274C1167.3 279.2 1167.1 279.6 1160.6 282.5C1154.1 285.4 1138.4 290.1 1133.9 291.6M1448.7 294.9L1427.8 401.2L1409.4 557.7M1133.9 294.6L1154.5 401.2L1173.4 557.7M1409.4 557.7L1409.1 580.9L1173.7 580.9L1173.4 557.7M1955 436.2C1945.8 436 1921 435.3 1900 434.8C1879 434.3 1852.6 433 1829 433C1805.4 433 1770.1 434.3 1758.3 434.6M1758.3 434.6L1772.3 486.3M1772.3 486.3L1777.3 507.5M1777.3 507.5C1785.8 508.4 1811 511.7 1828 512.9C1845 514.1 1857.8 514.5 1879 514.8C1900.2 515.1 1942.3 514.6 1955 514.6M1955 436.2C1964.2 436 1989 435.3 2010 434.8C2031 434.3 2057.4 433 2081 433C2104.6 433 2139.9 434.3 2151.7 434.6M2151.7 434.6L2137.7 486.3M2137.7 486.3L2132.7 507.5M2132.7 507.5C2124.2 508.4 2098.9 511.7 2082 512.9C2065.1 514.1 2052.2 514.5 2031 514.8C2009.8 515.1 1967.7 514.6 1955 514.6M1970.4 686.8L1832.3 686.8M1834.3 677.8L1833 640L1830 593.4M1829 591.4L1909 547.4M1914.4 555.5C1915.4 558.1 1917.6 567.3 1920.5 571C1923.4 574.7 1927.4 575.8 1932 577.5C1936.6 579.2 1941.6 580.4 1948 581.4C1954.4 582.4 1966.7 583 1970.4 583.3M1970.4 686.8L2108.5 686.8M2106.5 677.8L2107.8 640L2110.8 593.4M2111.8 591.4L2031.8 547.4M2026.4 555.5C2025.4 558.1 2023.2 567.3 2020.3 571C2017.4 574.7 2013.4 575.8 2008.8 577.5C2004.2 579.2 1999.2 580.4 1992.8 581.4C1986.4 582.4 1974.1 583 1970.4 583.3" stroke="#55ff55" stroke-dasharray="3 3"/><path d="M481.6 678.4L592.5 678.4L592.5 778.4L481.6 778.4L481.6 678.4" stroke="#d0d0d0" stroke-dasharray="5 4"/><path d="M1263.4 660.6L1152.5 660.6L1152.5 760.6L1263.4 760.6L1263.4 660.6" stroke="#d0d0d0" stroke-dasharray="9 4 2 4"/></g><g shape-rendering="crispEdges" stroke="none"><path d="M615 642h5v5h-5zM615 1029h5v5h-5zM804 1029h5v5h-5zM606 1038h5v5h-5zM747 1055h5v5h-5zM754 1056h3v3h-3zM788 1055h5v5h-5zM823 1055h5v5h-5zM834 1056h3v3h-3zM607 844h5v5h-5zM749 1064h5v5h-5zM788 1064h5v5h-5zM823 1064h5v5h-5zM833 1064h5v5h-5zM675 705h5v5h-5zM662 696h5v5h-5zM616 853h5v5h-5zM687 750h3v3h-3zM677 749h3v3h-3zM684 784h3v3h-3zM674 783h3v3h-3zM665 834h3v3h-3zM655 833h3v3h-3zM1125 645h5v5h-5zM1125 1032h5v5h-5zM936 1032h5v5h-5zM1134 1041h5v5h-5zM993 1057h5v5h-5zM988 1058h3v3h-3zM952 1057h5v5h-5zM917 1057h5v5h-5zM908 1058h3v3h-3zM1133 846h5v5h-5zM991 1066h5v5h-5zM952 1066h5v5h-5zM917 1066h5v5h-5zM907 1066h5v5h-5zM1065 708h5v5h-5zM1078 699h5v5h-5zM1124 856h5v5h-5zM1055 753h3v3h-3zM1065 752h3v3h-3zM1058 786h3v3h-3zM1068 785h3v3h-3zM1077 836h3v3h-3zM1087 835h3v3h-3zM607 1064h5v5h-5zM607 1296h5v5h-5zM594 1319h5v5h-5zM663 1068h5v5h-5zM657 1059h5v5h-5zM645 1145h3v3h-3zM620 1247h3v3h-3zM598 1296h5v5h-5zM1180 1064h5v5h-5zM1180 1296h5v5h-5zM1193 1319h5v5h-5zM1124 1068h5v5h-5zM1130 1059h5v5h-5zM1144 1145h3v3h-3zM1169 1247h3v3h-3zM1189 1296h5v5h-5zM512 927h5v5h-5zM547 927h5v5h-5zM512 1312h5v5h-5zM518 1312h5v5h-5zM547 1312h5v5h-5zM553 1312h5v5h-5zM1275 908h5v5h-5zM1240 908h5v5h-5zM1275 1293h5v5h-5zM1269 1293h5v5h-5zM1240 1293h5v5h-5zM1234 1293h5v5h-5zM1903 1044h5v5h-5zM1893 1053h5v5h-5zM1894 1044h5v5h-5zM1962 1045h3v3h-3zM1930 766h5v5h-5zM2033 1044h5v5h-5zM2042 1053h5v5h-5zM2042 1044h5v5h-5zM1976 1045h3v3h-3zM2006 766h5v5h-5zM1968 1053h5v5h-5zM1968 1044h5v5h-5zM1844 1049h5v5h-5zM1854 1049h5v5h-5zM1885 1049h5v5h-5zM1844 1058h5v5h-5zM1885 1058h5v5h-5zM2103 1036h5v5h-5zM2093 1036h5v5h-5zM2062 1036h5v5h-5zM2103 1044h5v5h-5zM2062 1044h5v5h-5zM1741 766h5v5h-5zM1741 1043h5v5h-5zM1812 1037h5v5h-5zM1821 1037h5v5h-5zM1731 1052h5v5h-5zM1821 1046h5v5h-5zM1732 867h5v5h-5zM1722 859h5v5h-5zM1780 762h5v5h-5zM1776 753h5v5h-5zM2233 765h5v5h-5zM2233 1042h5v5h-5zM2162 1036h5v5h-5zM2153 1036h5v5h-5zM2243 1050h5v5h-5zM2153 1045h5v5h-5zM2242 866h5v5h-5zM2252 857h5v5h-5zM2194 760h5v5h-5zM2198 752h5v5h-5zM1713 1095h5v5h-5zM1713 1324h5v5h-5zM1700 1347h5v5h-5zM1769 1096h5v5h-5zM1762 1086h5v5h-5zM1741 1210h3v3h-3zM1704 1324h5v5h-5zM1835 1108h4v4h-4zM1836 1099h4v4h-4zM2121 1095h5v5h-5zM2121 1324h5v5h-5zM2134 1347h5v5h-5zM2065 1096h5v5h-5zM2072 1086h5v5h-5zM2095 1210h3v3h-3zM2130 1324h5v5h-5zM2000 1108h4v4h-4zM1999 1099h4v4h-4zM433 191h5v5h-5zM660 191h5v5h-5zM433 575h5v5h-5zM547 575h5v5h-5zM660 575h5v5h-5zM424 598h5v5h-5zM547 598h5v5h-5zM669 598h5v5h-5zM424 575h5v5h-5zM669 575h5v5h-5zM433 309h5v5h-5zM660 309h5v5h-5zM396 309h5v5h-5zM697 309h5v5h-5zM416 414h3v3h-3zM679 414h3v3h-3zM1402 178h5v5h-5zM1176 178h5v5h-5zM1402 562h5v5h-5zM1288 562h5v5h-5zM1176 562h5v5h-5zM1412 585h5v5h-5zM1288 585h5v5h-5zM1166 585h5v5h-5zM1412 562h5v5h-5zM1166 562h5v5h-5zM1402 296h5v5h-5zM1176 296h5v5h-5zM1440 296h5v5h-5zM1138 296h5v5h-5zM1421 401h3v3h-3zM1158 401h3v3h-3zM1763 439h5v5h-5zM1751 432h5v5h-5zM1760 428h5v5h-5zM1774 482h5v5h-5zM1765 484h5v5h-5zM1778 496h5v5h-5zM1770 505h5v5h-5zM2142 439h5v5h-5zM2154 432h5v5h-5zM2145 428h5v5h-5zM2131 482h5v5h-5zM2140 484h5v5h-5zM2127 496h5v5h-5zM2135 505h5v5h-5zM1836 675h5v5h-5zM1825 684h5v5h-5zM1833 592h5v5h-5zM1822 589h5v5h-5zM1836 628h3v3h-3zM1827 628h3v3h-3zM1837 608h3v3h-3zM1828 608h3v3h-3zM2099 675h5v5h-5zM2110 684h5v5h-5zM2102 592h5v5h-5zM2114 589h5v5h-5zM2102 628h3v3h-3zM2111 628h3v3h-3zM2101 608h3v3h-3zM2110 608h3v3h-3z" fill="#ffff55"/><path d="M642 650h5v5h-5zM642 1001h5v5h-5zM804 1001h5v5h-5zM633 1010h5v5h-5zM747 1026h5v5h-5zM754 1027h3v3h-3zM788 1026h5v5h-5zM823 1026h5v5h-5zM834 1027h3v3h-3zM689 705h5v5h-5zM676 696h5v5h-5zM644 846h5v5h-5zM700 750h3v3h-3zM690 749h3v3h-3zM703 784h3v3h-3zM693 783h3v3h-3zM688 828h3v3h-3zM678 827h3v3h-3zM1098 652h5v5h-5zM1098 1004h5v5h-5zM936 1004h5v5h-5zM1107 1013h5v5h-5zM993 1028h5v5h-5zM988 1029h3v3h-3zM952 1028h5v5h-5zM917 1028h5v5h-5zM908 1029h3v3h-3zM1051 708h5v5h-5zM1064 699h5v5h-5zM1096 849h5v5h-5zM1042 753h3v3h-3zM1052 752h3v3h-3zM1039 786h3v3h-3zM1049 785h3v3h-3zM1054 830h3v3h-3zM1064 829h3v3h-3zM634 1064h5v5h-5zM634 1296h5v5h-5zM622 1319h5v5h-5zM690 1068h5v5h-5zM684 1059h5v5h-5zM673 1145h3v3h-3zM648 1247h3v3h-3zM1152 1064h5v5h-5zM1152 1296h5v5h-5zM1165 1319h5v5h-5zM1096 1068h5v5h-5zM1102 1059h5v5h-5zM1116 1145h3v3h-3zM1141 1247h3v3h-3zM540 932h5v5h-5zM575 932h5v5h-5zM528 1284h5v5h-5zM540 1284h5v5h-5zM563 1284h5v5h-5zM575 1284h5v5h-5zM1247 913h5v5h-5zM1212 913h5v5h-5zM1259 1265h5v5h-5zM1247 1265h5v5h-5zM1224 1265h5v5h-5zM1212 1265h5v5h-5zM479 676h5v5h-5zM535 676h5v5h-5zM590 676h5v5h-5zM479 726h5v5h-5zM590 726h5v5h-5zM479 776h5v5h-5zM535 776h5v5h-5zM590 776h5v5h-5zM1261 658h5v5h-5zM1205 658h5v5h-5zM1150 658h5v5h-5zM1261 708h5v5h-5zM1150 708h5v5h-5zM1261 758h5v5h-5zM1205 758h5v5h-5zM1150 758h5v5h-5zM1910 1017h5v5h-5zM1901 1026h5v5h-5zM1901 1017h5v5h-5zM1962 1018h3v3h-3zM1937 766h5v5h-5zM2026 1017h5v5h-5zM2035 1026h5v5h-5zM2034 1017h5v5h-5zM1976 1018h3v3h-3zM1999 766h5v5h-5zM1968 1016h5v5h-5zM1845 1022h5v5h-5zM1854 1022h5v5h-5zM1885 1022h5v5h-5zM1845 1030h5v5h-5zM1885 1030h5v5h-5zM2102 1008h5v5h-5zM2093 1008h5v5h-5zM2062 1008h5v5h-5zM2102 1017h5v5h-5zM2062 1017h5v5h-5zM1768 766h5v5h-5zM1768 1015h5v5h-5zM1819 1010h5v5h-5zM1828 1010h5v5h-5zM1759 1024h5v5h-5zM1828 1019h5v5h-5zM1761 860h5v5h-5zM1751 852h5v5h-5zM1792 762h5v5h-5zM1791 753h5v5h-5zM2206 765h5v5h-5zM2206 1014h5v5h-5zM2155 1009h5v5h-5zM2145 1009h5v5h-5zM2215 1023h5v5h-5zM2145 1018h5v5h-5zM2213 859h5v5h-5zM2223 850h5v5h-5zM2182 760h5v5h-5zM2183 752h5v5h-5zM1743 1095h5v5h-5zM1743 1324h5v5h-5zM1729 1347h5v5h-5zM1797 1096h5v5h-5zM1790 1086h5v5h-5zM1770 1210h3v3h-3zM2092 1095h5v5h-5zM2092 1324h5v5h-5zM2105 1347h5v5h-5zM2037 1096h5v5h-5zM2044 1086h5v5h-5zM2066 1210h3v3h-3zM448 198h5v5h-5zM646 198h5v5h-5zM448 554h5v5h-5zM547 554h5v5h-5zM646 554h5v5h-5zM438 577h5v5h-5zM547 577h5v5h-5zM655 577h5v5h-5zM438 554h5v5h-5zM655 554h5v5h-5zM448 309h5v5h-5zM646 309h5v5h-5zM409 309h5v5h-5zM684 309h5v5h-5zM431 410h3v3h-3zM665 410h3v3h-3zM1388 185h5v5h-5zM1190 185h5v5h-5zM1388 541h5v5h-5zM1288 541h5v5h-5zM1190 541h5v5h-5zM1397 564h5v5h-5zM1288 564h5v5h-5zM1180 564h5v5h-5zM1397 541h5v5h-5zM1180 541h5v5h-5zM1388 296h5v5h-5zM1190 296h5v5h-5zM1426 296h5v5h-5zM1151 296h5v5h-5zM1407 397h3v3h-3zM1172 397h3v3h-3zM1778 439h5v5h-5zM1766 432h5v5h-5zM1775 428h5v5h-5zM1789 482h5v5h-5zM1780 484h5v5h-5zM1793 496h5v5h-5zM1785 505h5v5h-5zM2127 439h5v5h-5zM2139 432h5v5h-5zM2130 428h5v5h-5zM2116 482h5v5h-5zM2125 484h5v5h-5zM2112 496h5v5h-5zM2120 505h5v5h-5zM1850 675h5v5h-5zM1839 684h5v5h-5zM1846 592h5v5h-5zM1835 589h5v5h-5zM1849 628h3v3h-3zM1840 628h3v3h-3zM1850 608h3v3h-3zM1841 608h3v3h-3zM2086 675h5v5h-5zM2097 684h5v5h-5zM2090 592h5v5h-5zM2101 589h5v5h-5zM2088 628h3v3h-3zM2098 628h3v3h-3zM2088 608h3v3h-3zM2097 608h3v3h-3z" fill="#ffffff"/><path d="M633 647h5v5h-5zM633 1010h5v5h-5zM804 1010h5v5h-5zM624 1020h5v5h-5zM747 1035h5v5h-5zM754 1036h3v3h-3zM788 1035h5v5h-5zM823 1035h5v5h-5zM834 1036h3v3h-3zM684 705h5v5h-5zM671 696h5v5h-5zM635 849h5v5h-5zM696 750h3v3h-3zM686 749h3v3h-3zM697 784h3v3h-3zM687 783h3v3h-3zM680 830h3v3h-3zM670 829h3v3h-3zM1107 650h5v5h-5zM1107 1013h5v5h-5zM936 1013h5v5h-5zM1116 1022h5v5h-5zM993 1038h5v5h-5zM988 1039h3v3h-3zM952 1038h5v5h-5zM917 1038h5v5h-5zM908 1039h3v3h-3zM1056 708h5v5h-5zM1069 699h5v5h-5zM1105 851h5v5h-5zM1046 753h3v3h-3zM1056 752h3v3h-3zM1045 786h3v3h-3zM1055 785h3v3h-3zM1062 832h3v3h-3zM1072 831h3v3h-3zM625 1064h5v5h-5zM625 1296h5v5h-5zM612 1319h5v5h-5zM681 1068h5v5h-5zM675 1059h5v5h-5zM663 1145h3v3h-3zM638 1247h3v3h-3zM1162 1064h5v5h-5zM1162 1296h5v5h-5zM1175 1319h5v5h-5zM1106 1068h5v5h-5zM1112 1059h5v5h-5zM1126 1145h3v3h-3zM1151 1247h3v3h-3zM531 930h5v5h-5zM566 930h5v5h-5zM525 1292h5v5h-5zM531 1292h5v5h-5zM560 1292h5v5h-5zM566 1292h5v5h-5zM1256 911h5v5h-5zM1221 911h5v5h-5zM1262 1274h5v5h-5zM1256 1274h5v5h-5zM1227 1274h5v5h-5zM1221 1274h5v5h-5zM1908 1026h5v5h-5zM1898 1035h5v5h-5zM1899 1026h5v5h-5zM1962 1027h3v3h-3zM1934 766h5v5h-5zM2028 1026h5v5h-5zM2037 1035h5v5h-5zM2037 1026h5v5h-5zM1976 1027h3v3h-3zM2001 766h5v5h-5zM1968 1026h5v5h-5zM1844 1030h5v5h-5zM1854 1030h5v5h-5zM1885 1030h5v5h-5zM1844 1039h5v5h-5zM1885 1039h5v5h-5zM2103 1017h5v5h-5zM2093 1017h5v5h-5zM2062 1017h5v5h-5zM2103 1026h5v5h-5zM2062 1026h5v5h-5zM1759 766h5v5h-5zM1759 1025h5v5h-5zM1817 1019h5v5h-5zM1826 1019h5v5h-5zM1750 1033h5v5h-5zM1826 1028h5v5h-5zM1751 862h5v5h-5zM1741 854h5v5h-5zM1788 762h5v5h-5zM1786 753h5v5h-5zM1824 762h5v5h-5zM1832 762h5v5h-5zM1832 753h5v5h-5zM2215 765h5v5h-5zM2215 1023h5v5h-5zM2157 1018h5v5h-5zM2148 1018h5v5h-5zM2224 1032h5v5h-5zM2148 1027h5v5h-5zM2223 861h5v5h-5zM2233 853h5v5h-5zM2186 760h5v5h-5zM2188 752h5v5h-5zM2150 760h5v5h-5zM2141 760h5v5h-5zM2141 752h5v5h-5zM1733 1095h5v5h-5zM1733 1324h5v5h-5zM1719 1347h5v5h-5zM1788 1096h5v5h-5zM1781 1086h5v5h-5zM1760 1210h3v3h-3zM1877 1102h4v4h-4zM1847 1100h4v4h-4zM2101 1095h5v5h-5zM2101 1324h5v5h-5zM2115 1347h5v5h-5zM2046 1096h5v5h-5zM2053 1086h5v5h-5zM2076 1210h3v3h-3zM1958 1102h4v4h-4zM1988 1100h4v4h-4zM443 195h5v5h-5zM650 195h5v5h-5zM443 561h5v5h-5zM547 561h5v5h-5zM650 561h5v5h-5zM433 584h5v5h-5zM547 584h5v5h-5zM660 584h5v5h-5zM433 561h5v5h-5zM660 561h5v5h-5zM443 309h5v5h-5zM650 309h5v5h-5zM405 309h5v5h-5zM689 309h5v5h-5zM426 411h3v3h-3zM670 411h3v3h-3zM483 218h3v3h-3zM476 212h3v3h-3zM394 304h3v3h-3zM696 304h3v3h-3zM458 236h3v3h-3zM466 244h3v3h-3zM422 301h3v3h-3zM594 220h3v3h-3zM614 244h3v3h-3zM634 271h3v3h-3zM656 294h3v3h-3zM668 304h3v3h-3zM1393 182h5v5h-5zM1185 182h5v5h-5zM1393 548h5v5h-5zM1288 548h5v5h-5zM1185 548h5v5h-5zM1402 571h5v5h-5zM1288 571h5v5h-5zM1176 571h5v5h-5zM1402 548h5v5h-5zM1176 548h5v5h-5zM1393 296h5v5h-5zM1185 296h5v5h-5zM1431 296h5v5h-5zM1147 296h5v5h-5zM1412 398h3v3h-3zM1168 398h3v3h-3zM1354 206h3v3h-3zM1361 200h3v3h-3zM1444 291h3v3h-3zM1141 291h3v3h-3zM1379 224h3v3h-3zM1371 231h3v3h-3zM1416 288h3v3h-3zM1243 207h3v3h-3zM1224 231h3v3h-3zM1204 258h3v3h-3zM1182 282h3v3h-3zM1169 292h3v3h-3zM1773 439h5v5h-5zM1761 432h5v5h-5zM1770 428h5v5h-5zM1784 482h5v5h-5zM1775 484h5v5h-5zM1788 496h5v5h-5zM1780 505h5v5h-5zM2132 439h5v5h-5zM2144 432h5v5h-5zM2135 428h5v5h-5zM2121 482h5v5h-5zM2130 484h5v5h-5zM2117 496h5v5h-5zM2125 505h5v5h-5zM1845 675h5v5h-5zM1834 684h5v5h-5zM1842 592h5v5h-5zM1831 589h5v5h-5zM1845 628h3v3h-3zM1836 628h3v3h-3zM1845 608h3v3h-3zM1836 608h3v3h-3zM2091 675h5v5h-5zM2102 684h5v5h-5zM2094 592h5v5h-5zM2105 589h5v5h-5zM2093 628h3v3h-3zM2102 628h3v3h-3zM2092 608h3v3h-3zM2101 608h3v3h-3z" fill="#ff0000"/><path d="M624 645h5v5h-5zM624 1020h5v5h-5zM804 1020h5v5h-5zM615 1029h5v5h-5zM747 1045h5v5h-5zM754 1046h3v3h-3zM788 1045h5v5h-5zM823 1045h5v5h-5zM834 1046h3v3h-3zM680 705h5v5h-5zM667 696h5v5h-5zM626 851h5v5h-5zM691 750h3v3h-3zM681 749h3v3h-3zM690 784h3v3h-3zM680 783h3v3h-3zM673 832h3v3h-3zM663 831h3v3h-3zM698 824h6v6h-6zM776 824h6v6h-6zM702 833h6v6h-6zM774 833h6v6h-6zM702 909h6v6h-6zM774 909h6v6h-6zM738 909h6v6h-6zM726 679h6v6h-6zM748 670h6v6h-6zM746 661h6v6h-6zM754 657h6v6h-6zM788 670h6v6h-6zM803 670h6v6h-6zM822 670h6v6h-6zM803 701h6v6h-6zM803 738h6v6h-6zM822 739h6v6h-6zM803 850h6v6h-6zM750 742h6v6h-6zM787 932h6v6h-6zM833 729h6v6h-6zM719 668h6v6h-6zM771 719h3v3h-3zM786 732h3v3h-3zM808 730h3v3h-3zM814 731h3v3h-3zM772 699h3v3h-3zM763 678h3v3h-3zM1116 647h5v5h-5zM1116 1022h5v5h-5zM936 1022h5v5h-5zM1125 1032h5v5h-5zM993 1048h5v5h-5zM988 1048h3v3h-3zM952 1048h5v5h-5zM917 1048h5v5h-5zM908 1048h3v3h-3zM1060 708h5v5h-5zM1073 699h5v5h-5zM1114 853h5v5h-5zM1051 753h3v3h-3zM1061 752h3v3h-3zM1052 786h3v3h-3zM1062 785h3v3h-3zM1069 834h3v3h-3zM1079 833h3v3h-3zM1041 827h6v6h-6zM963 827h6v6h-6zM1037 836h6v6h-6zM966 836h6v6h-6zM1037 912h6v6h-6zM966 912h6v6h-6zM1002 912h6v6h-6zM1013 682h6v6h-6zM991 672h6v6h-6zM993 663h6v6h-6zM985 660h6v6h-6zM951 672h6v6h-6zM936 672h6v6h-6zM917 673h6v6h-6zM936 703h6v6h-6zM936 740h6v6h-6zM917 741h6v6h-6zM936 853h6v6h-6zM989 745h6v6h-6zM952 934h6v6h-6zM906 732h6v6h-6zM1020 671h6v6h-6zM971 722h3v3h-3zM956 734h3v3h-3zM934 733h3v3h-3zM928 733h3v3h-3zM970 702h3v3h-3zM979 681h3v3h-3zM616 1064h5v5h-5zM616 1296h5v5h-5zM603 1319h5v5h-5zM672 1068h5v5h-5zM666 1059h5v5h-5zM654 1145h3v3h-3zM629 1247h3v3h-3zM830 1075h5v5h-5zM830 1297h5v5h-5zM822 1297h5v5h-5zM830 1317h5v5h-5zM830 1341h5v5h-5zM810 1341h5v5h-5zM796 1341h5v5h-5zM796 1074h5v5h-5zM810 1075h5v5h-5zM793 1085h5v5h-5zM812 1085h5v5h-5zM793 1316h5v5h-5zM810 1317h5v5h-5zM1171 1064h5v5h-5zM1171 1296h5v5h-5zM1184 1319h5v5h-5zM1115 1068h5v5h-5zM1121 1059h5v5h-5zM1135 1145h3v3h-3zM1160 1247h3v3h-3zM957 1075h5v5h-5zM957 1297h5v5h-5zM965 1297h5v5h-5zM957 1317h5v5h-5zM957 1341h5v5h-5zM977 1341h5v5h-5zM991 1341h5v5h-5zM991 1074h5v5h-5zM977 1075h5v5h-5zM994 1085h5v5h-5zM975 1085h5v5h-5zM994 1316h5v5h-5zM977 1317h5v5h-5zM521 928h5v5h-5zM557 928h5v5h-5zM521 1303h5v5h-5zM557 1303h5v5h-5zM566 1312h5v5h-5zM512 1189h5v5h-5zM521 1189h5v5h-5zM450 930h5v5h-5zM462 936h5v5h-5zM482 926h5v5h-5zM488 914h5v5h-5zM538 995h5v5h-5zM557 997h5v5h-5zM540 986h5v5h-5zM566 988h5v5h-5zM518 988h3v3h-3zM522 979h3v3h-3zM476 1004h3v3h-3zM486 1002h3v3h-3zM502 1080h3v3h-3zM1266 910h5v5h-5zM1230 910h5v5h-5zM1266 1284h5v5h-5zM1230 1284h5v5h-5zM1221 1293h5v5h-5zM1275 1170h5v5h-5zM1266 1170h5v5h-5zM1337 912h5v5h-5zM1325 917h5v5h-5zM1305 908h5v5h-5zM1299 895h5v5h-5zM1249 976h5v5h-5zM1230 978h5v5h-5zM1247 968h5v5h-5zM1221 969h5v5h-5zM1271 969h3v3h-3zM1266 960h3v3h-3zM1312 985h3v3h-3zM1303 983h3v3h-3zM1287 1062h3v3h-3zM431 801h5v5h-5zM500 801h5v5h-5zM500 909h5v5h-5zM431 909h5v5h-5zM431 824h5v5h-5zM454 824h5v5h-5zM490 824h5v5h-5zM490 900h5v5h-5zM454 900h5v5h-5zM510 799h5v5h-5zM565 799h5v5h-5zM565 909h5v5h-5zM510 909h5v5h-5zM510 823h5v5h-5zM520 823h5v5h-5zM556 823h5v5h-5zM556 899h5v5h-5zM520 899h5v5h-5zM1161 776h5v5h-5zM1215 776h5v5h-5zM1215 885h5v5h-5zM1161 885h5v5h-5zM1215 800h5v5h-5zM1170 800h5v5h-5zM1206 800h5v5h-5zM1206 876h5v5h-5zM1170 876h5v5h-5zM1229 776h5v5h-5zM1298 776h5v5h-5zM1298 885h5v5h-5zM1229 885h5v5h-5zM1298 800h5v5h-5zM1239 800h5v5h-5zM1275 800h5v5h-5zM1275 876h5v5h-5zM1239 876h5v5h-5zM486 696h5v5h-5zM582 696h5v5h-5zM496 706h5v5h-5zM573 706h5v5h-5zM498 734h5v5h-5zM570 734h5v5h-5zM494 742h5v5h-5zM574 742h5v5h-5zM534 746h5v5h-5zM534 756h5v5h-5zM497 712h3v3h-3zM574 712h3v3h-3zM488 738h3v3h-3zM582 738h3v3h-3zM583 730h3v3h-3zM1254 678h5v5h-5zM1158 678h5v5h-5zM1244 688h5v5h-5zM1167 688h5v5h-5zM1242 716h5v5h-5zM1170 716h5v5h-5zM1246 725h5v5h-5zM1166 725h5v5h-5zM1206 728h5v5h-5zM1206 738h5v5h-5zM1245 694h3v3h-3zM1168 694h3v3h-3zM1254 720h3v3h-3zM1160 720h3v3h-3zM1159 712h3v3h-3zM1905 1035h5v5h-5zM1896 1044h5v5h-5zM1896 1035h5v5h-5zM1962 1036h3v3h-3zM1932 766h5v5h-5zM1924 757h6v6h-6zM1918 872h6v6h-6zM1910 872h6v6h-6zM1928 814h5v5h-5zM1926 822h5v5h-5zM1920 815h4v4h-4zM1920 822h4v4h-4zM2030 1035h5v5h-5zM2040 1044h5v5h-5zM2039 1035h5v5h-5zM1976 1036h3v3h-3zM2004 766h5v5h-5zM2010 757h6v6h-6zM2017 872h6v6h-6zM2025 872h6v6h-6zM2008 814h5v5h-5zM2009 822h5v5h-5zM2016 815h4v4h-4zM2017 822h4v4h-4zM1967 757h6v6h-6zM1967 766h6v6h-6zM1967 1034h6v6h-6zM1844 1040h5v5h-5zM1854 1040h5v5h-5zM1885 1040h5v5h-5zM1844 1048h5v5h-5zM1885 1048h5v5h-5zM1838 764h5v5h-5zM1854 764h5v5h-5zM1902 764h5v5h-5zM1911 764h5v5h-5zM1840 772h5v5h-5zM1901 772h5v5h-5zM1846 877h5v5h-5zM1893 877h5v5h-5zM1902 879h5v5h-5zM1843 824h5v5h-5zM1844 832h5v5h-5zM1844 840h5v5h-5zM1896 820h5v5h-5zM1896 828h5v5h-5zM2103 1027h5v5h-5zM2093 1027h5v5h-5zM2062 1027h5v5h-5zM2103 1035h5v5h-5zM2062 1035h5v5h-5zM2109 751h5v5h-5zM2094 751h5v5h-5zM2045 751h5v5h-5zM2036 751h5v5h-5zM2107 759h5v5h-5zM2046 759h5v5h-5zM2101 864h5v5h-5zM2054 864h5v5h-5zM2045 866h5v5h-5zM2104 810h5v5h-5zM2104 818h5v5h-5zM2103 827h5v5h-5zM2051 807h5v5h-5zM2051 815h5v5h-5zM1750 766h5v5h-5zM1750 1034h5v5h-5zM1814 1028h5v5h-5zM1824 1028h5v5h-5zM1740 1042h5v5h-5zM1824 1037h5v5h-5zM1741 865h5v5h-5zM1731 856h5v5h-5zM1784 762h5v5h-5zM1781 753h5v5h-5zM1819 761h6v6h-6zM1828 761h6v6h-6zM1828 752h6v6h-6zM1822 864h6v6h-6zM1832 864h6v6h-6zM1822 812h5v5h-5zM1822 820h5v5h-5zM1822 828h5v5h-5zM2224 765h5v5h-5zM2224 1033h5v5h-5zM2160 1027h5v5h-5zM2150 1027h5v5h-5zM2233 1041h5v5h-5zM2150 1036h5v5h-5zM2233 864h5v5h-5zM2243 855h5v5h-5zM2190 760h5v5h-5zM2193 752h5v5h-5zM2154 760h6v6h-6zM2145 760h6v6h-6zM2145 751h6v6h-6zM2151 863h6v6h-6zM2141 863h6v6h-6zM2152 811h5v5h-5zM2152 819h5v5h-5zM2152 826h5v5h-5zM1723 1095h5v5h-5zM1723 1324h5v5h-5zM1710 1347h5v5h-5zM1779 1096h5v5h-5zM1772 1086h5v5h-5zM1750 1210h3v3h-3zM1841 1108h5v5h-5zM1872 1111h5v5h-5zM1841 1098h5v5h-5zM1872 1101h5v5h-5zM1888 1344h3v3h-3zM1888 1366h3v3h-3zM2111 1095h5v5h-5zM2111 1324h5v5h-5zM2124 1347h5v5h-5zM2056 1096h5v5h-5zM2063 1086h5v5h-5zM2086 1210h3v3h-3zM1993 1108h5v5h-5zM1962 1111h5v5h-5zM1993 1098h5v5h-5zM1962 1101h5v5h-5zM1949 1344h3v3h-3zM1949 1366h3v3h-3zM1917 1101h6v6h-6zM1917 1111h6v6h-6zM1917 1343h6v6h-6zM1917 1365h6v6h-6zM1913 1102h4v4h-4zM1923 1102h4v4h-4zM1912 1112h4v4h-4zM1924 1112h4v4h-4zM438 193h5v5h-5zM655 193h5v5h-5zM438 568h5v5h-5zM547 568h5v5h-5zM655 568h5v5h-5zM429 591h5v5h-5zM547 591h5v5h-5zM665 591h5v5h-5zM429 568h5v5h-5zM665 568h5v5h-5zM438 309h5v5h-5zM655 309h5v5h-5zM400 309h5v5h-5zM693 309h5v5h-5zM421 412h3v3h-3zM674 412h3v3h-3zM546 184h6v6h-6zM546 308h6v6h-6zM552 184h6v6h-6zM478 217h4v4h-4zM472 210h4v4h-4zM389 302h4v4h-4zM700 302h4v4h-4zM454 234h4v4h-4zM462 241h4v4h-4zM417 300h4v4h-4zM597 216h4v4h-4zM616 240h4v4h-4zM636 267h4v4h-4zM659 291h4v4h-4zM672 301h4v4h-4zM577 199h4v4h-4zM1397 180h5v5h-5zM1180 180h5v5h-5zM1397 555h5v5h-5zM1288 555h5v5h-5zM1180 555h5v5h-5zM1407 578h5v5h-5zM1288 578h5v5h-5zM1171 578h5v5h-5zM1407 555h5v5h-5zM1171 555h5v5h-5zM1397 296h5v5h-5zM1180 296h5v5h-5zM1435 296h5v5h-5zM1142 296h5v5h-5zM1416 400h3v3h-3zM1163 400h3v3h-3zM1288 171h6v6h-6zM1288 296h6v6h-6zM1282 171h6v6h-6zM1358 204h4v4h-4zM1364 197h4v4h-4zM1448 290h4v4h-4zM1136 289h4v4h-4zM1382 222h4v4h-4zM1374 228h4v4h-4zM1419 287h4v4h-4zM1239 204h4v4h-4zM1220 227h4v4h-4zM1200 255h4v4h-4zM1178 278h4v4h-4zM1165 288h4v4h-4zM1259 187h4v4h-4zM1768 439h5v5h-5zM1756 432h5v5h-5zM1765 428h5v5h-5zM1779 482h5v5h-5zM1770 484h5v5h-5zM1783 496h5v5h-5zM1775 505h5v5h-5zM1874 476h5v5h-5zM1876 502h5v5h-5zM1876 512h5v5h-5zM1926 434h5v5h-5zM1926 442h5v5h-5zM1898 434h3v3h-3zM1912 434h3v3h-3zM1938 435h3v3h-3zM1860 433h3v3h-3zM1898 442h3v3h-3zM1868 512h3v3h-3zM1882 513h3v3h-3zM2137 439h5v5h-5zM2149 432h5v5h-5zM2140 428h5v5h-5zM2126 482h5v5h-5zM2135 484h5v5h-5zM2122 496h5v5h-5zM2130 505h5v5h-5zM2031 476h5v5h-5zM2028 502h5v5h-5zM2028 512h5v5h-5zM1980 434h5v5h-5zM1980 442h5v5h-5zM2008 434h3v3h-3zM1994 434h3v3h-3zM1968 435h3v3h-3zM2046 433h3v3h-3zM2008 442h3v3h-3zM2038 512h3v3h-3zM2024 513h3v3h-3zM1952 433h6v6h-6zM1952 442h6v6h-6zM1952 503h6v6h-6zM1952 512h6v6h-6zM1947 512h6v6h-6zM1957 512h6v6h-6zM1841 675h5v5h-5zM1830 684h5v5h-5zM1838 592h5v5h-5zM1826 589h5v5h-5zM1840 628h3v3h-3zM1832 628h3v3h-3zM1841 608h3v3h-3zM1832 608h3v3h-3zM1902 589h6v6h-6zM1902 557h6v6h-6zM1906 544h6v6h-6zM1911 552h6v6h-6zM1876 562h6v6h-6zM1881 570h6v6h-6zM1870 675h6v6h-6zM1870 684h6v6h-6zM1930 675h6v6h-6zM1930 684h6v6h-6zM1924 583h3v3h-3zM1944 588h3v3h-3zM1930 576h3v3h-3zM1946 580h3v3h-3zM2095 675h5v5h-5zM2106 684h5v5h-5zM2098 592h5v5h-5zM2109 589h5v5h-5zM2097 628h3v3h-3zM2106 628h3v3h-3zM2097 608h3v3h-3zM2106 608h3v3h-3zM2032 589h6v6h-6zM2032 557h6v6h-6zM2029 544h6v6h-6zM2023 552h6v6h-6zM2058 562h6v6h-6zM2054 570h6v6h-6zM2065 675h6v6h-6zM2065 684h6v6h-6zM2005 675h6v6h-6zM2005 684h6v6h-6zM2013 583h3v3h-3zM1993 588h3v3h-3zM2007 576h3v3h-3zM1991 580h3v3h-3zM1967 675h6v6h-6zM1967 684h6v6h-6zM1961 580h6v6h-6zM1969 580h6v6h-6zM1975 580h6v6h-6z" fill="#55ff55"/><path d="M806 1003h1v1h-1zM635 1012h1v1h-1zM678 698h1v1h-1zM806 1012h1v1h-1zM626 1022h1v1h-1zM673 698h1v1h-1zM806 1031h1v1h-1zM608 1040h1v1h-1zM609 846h1v1h-1zM664 698h1v1h-1zM806 1022h1v1h-1zM617 1031h1v1h-1zM669 698h1v1h-1zM938 1006h1v1h-1zM1109 1015h1v1h-1zM1066 701h1v1h-1zM938 1015h1v1h-1zM1118 1024h1v1h-1zM1071 701h1v1h-1zM938 1034h1v1h-1zM1136 1043h1v1h-1zM1135 848h1v1h-1zM1080 701h1v1h-1zM938 1024h1v1h-1zM1127 1034h1v1h-1zM1075 701h1v1h-1zM624 1321h1v1h-1zM614 1321h1v1h-1zM596 1321h1v1h-1zM605 1321h1v1h-1zM1167 1321h1v1h-1zM1177 1321h1v1h-1zM1195 1321h1v1h-1zM1186 1321h1v1h-1zM530 1286h1v1h-1zM542 1286h1v1h-1zM565 1286h1v1h-1zM577 1286h1v1h-1zM527 1294h1v1h-1zM533 1294h1v1h-1zM562 1294h1v1h-1zM568 1294h1v1h-1zM1261 1267h1v1h-1zM1249 1267h1v1h-1zM1226 1267h1v1h-1zM1214 1267h1v1h-1zM1264 1276h1v1h-1zM1258 1276h1v1h-1zM1229 1276h1v1h-1zM1223 1276h1v1h-1zM433 803h1v1h-1zM502 803h1v1h-1zM502 911h1v1h-1zM433 911h1v1h-1zM512 801h1v1h-1zM567 801h1v1h-1zM567 911h1v1h-1zM512 911h1v1h-1zM1163 778h1v1h-1zM1217 778h1v1h-1zM1217 887h1v1h-1zM1163 887h1v1h-1zM1231 778h1v1h-1zM1300 778h1v1h-1zM1300 887h1v1h-1zM1231 887h1v1h-1zM481 678h1v1h-1zM537 678h1v1h-1zM592 678h1v1h-1zM481 728h1v1h-1zM592 728h1v1h-1zM481 778h1v1h-1zM537 778h1v1h-1zM592 778h1v1h-1zM1263 660h1v1h-1zM1207 660h1v1h-1zM1152 660h1v1h-1zM1263 710h1v1h-1zM1152 710h1v1h-1zM1263 760h1v1h-1zM1207 760h1v1h-1zM1152 760h1v1h-1zM1912 1019h1v1h-1zM1903 1019h1v1h-1zM1910 1028h1v1h-1zM1901 1028h1v1h-1zM1905 1046h1v1h-1zM1896 1046h1v1h-1zM1907 1037h1v1h-1zM1898 1037h1v1h-1zM2028 1019h1v1h-1zM2036 1019h1v1h-1zM2030 1028h1v1h-1zM2039 1028h1v1h-1zM2035 1046h1v1h-1zM2044 1046h1v1h-1zM2032 1037h1v1h-1zM2041 1037h1v1h-1zM1847 1024h1v1h-1zM1856 1024h1v1h-1zM1887 1024h1v1h-1zM1887 1032h1v1h-1zM1846 1032h1v1h-1zM1856 1032h1v1h-1zM1887 1032h1v1h-1zM1887 1041h1v1h-1zM1846 1051h1v1h-1zM1856 1051h1v1h-1zM1887 1051h1v1h-1zM1887 1060h1v1h-1zM1846 1042h1v1h-1zM1856 1042h1v1h-1zM1887 1042h1v1h-1zM1887 1050h1v1h-1zM2104 1010h1v1h-1zM2095 1010h1v1h-1zM2064 1010h1v1h-1zM2064 1019h1v1h-1zM2105 1019h1v1h-1zM2095 1019h1v1h-1zM2064 1019h1v1h-1zM2064 1028h1v1h-1zM2105 1038h1v1h-1zM2095 1038h1v1h-1zM2064 1038h1v1h-1zM2064 1046h1v1h-1zM2105 1029h1v1h-1zM2095 1029h1v1h-1zM2064 1029h1v1h-1zM2064 1037h1v1h-1zM1770 1017h1v1h-1zM1821 1012h1v1h-1zM1830 1012h1v1h-1zM1761 1026h1v1h-1zM1753 854h1v1h-1zM1793 755h1v1h-1zM1761 1027h1v1h-1zM1819 1021h1v1h-1zM1828 1021h1v1h-1zM1752 1035h1v1h-1zM1743 856h1v1h-1zM1788 755h1v1h-1zM1743 1045h1v1h-1zM1814 1039h1v1h-1zM1823 1039h1v1h-1zM1733 1054h1v1h-1zM1724 861h1v1h-1zM1778 755h1v1h-1zM1752 1036h1v1h-1zM1816 1030h1v1h-1zM1826 1030h1v1h-1zM1742 1044h1v1h-1zM1733 858h1v1h-1zM1783 755h1v1h-1zM1831 755h1v1h-1zM2208 1016h1v1h-1zM2157 1011h1v1h-1zM2147 1011h1v1h-1zM2217 1025h1v1h-1zM2225 852h1v1h-1zM2185 754h1v1h-1zM2217 1025h1v1h-1zM2159 1020h1v1h-1zM2150 1020h1v1h-1zM2226 1034h1v1h-1zM2235 855h1v1h-1zM2190 754h1v1h-1zM2235 1044h1v1h-1zM2164 1038h1v1h-1zM2155 1038h1v1h-1zM2245 1052h1v1h-1zM2254 859h1v1h-1zM2200 754h1v1h-1zM2226 1035h1v1h-1zM2162 1029h1v1h-1zM2152 1029h1v1h-1zM2235 1043h1v1h-1zM2245 857h1v1h-1zM2195 754h1v1h-1zM2148 754h1v1h-1zM450 200h1v1h-1zM648 200h1v1h-1zM549 556h1v1h-1zM440 579h1v1h-1zM549 579h1v1h-1zM657 579h1v1h-1zM445 197h1v1h-1zM652 197h1v1h-1zM549 563h1v1h-1zM435 586h1v1h-1zM549 586h1v1h-1zM662 586h1v1h-1zM435 193h1v1h-1zM662 193h1v1h-1zM549 577h1v1h-1zM426 600h1v1h-1zM549 600h1v1h-1zM671 600h1v1h-1zM440 195h1v1h-1zM657 195h1v1h-1zM549 570h1v1h-1zM431 593h1v1h-1zM549 593h1v1h-1zM667 593h1v1h-1zM1390 187h1v1h-1zM1192 187h1v1h-1zM1290 543h1v1h-1zM1399 566h1v1h-1zM1290 566h1v1h-1zM1182 566h1v1h-1zM1395 184h1v1h-1zM1187 184h1v1h-1zM1290 550h1v1h-1zM1404 573h1v1h-1zM1290 573h1v1h-1zM1178 573h1v1h-1zM1404 180h1v1h-1zM1178 180h1v1h-1zM1290 564h1v1h-1zM1414 587h1v1h-1zM1290 587h1v1h-1zM1168 587h1v1h-1zM1399 182h1v1h-1zM1182 182h1v1h-1zM1290 557h1v1h-1zM1409 580h1v1h-1zM1290 580h1v1h-1zM1173 580h1v1h-1zM1782 486h1v1h-1zM1777 486h1v1h-1zM1767 486h1v1h-1zM1772 486h1v1h-1zM2127 486h1v1h-1zM2132 486h1v1h-1zM2142 486h1v1h-1zM2137 486h1v1h-1z" fill="#000"/></g><defs><pattern id="hx" width="7" height="7" patternUnits="userSpaceOnUse"><path d="M0 0l7 7M7 0l-7 7" stroke="#c8b89a" stroke-width="1" shape-rendering="crispEdges"/></pattern></defs><path d="M1169.4 693.2H1247.0V716.2L1243.0 720.2H1173.4L1169.4 716.2Z" fill="url(#hx)"/><g fill="#55ff55" font-size="9.6"><g transform="translate(731.0,881.0) rotate(90)"><text x="0" y="3.5" text-anchor="middle">TUKA-WN-JT-JUNIOR DENIM</text></g><g transform="translate(724.7,860.0) rotate(90)"><text x="0" y="3.5" text-anchor="middle">FRT TOP</text></g><g transform="translate(719.0,858.0) rotate(90)"><text x="0" y="3.5" text-anchor="middle">C-2</text></g><g transform="translate(713.8,859.5) rotate(90)"><text x="0" y="3.5" text-anchor="middle">XS,S,M,L</text></g><g transform="translate(707.5,856.0) rotate(90)"><text x="0" y="3.5" text-anchor="middle">SH</text></g><g transform="translate(1013.4,828.6) rotate(-90)"><text x="0" y="3.5" text-anchor="middle">TUKA-WN-JT-JUNIOR DENIM</text></g><g transform="translate(1021.3,857.5) rotate(-90)"><text x="0" y="3.5" text-anchor="middle">FRT TOP</text></g><g transform="translate(1026.5,853.0) rotate(-90)"><text x="0" y="3.5" text-anchor="middle">C-2</text></g><g transform="translate(1030.6,859.0) rotate(-90)"><text x="0" y="3.5" text-anchor="middle">XS,S,M,L</text></g><g transform="translate(1036.9,850.0) rotate(-90)"><text x="0" y="3.5" text-anchor="middle">SH</text></g><g transform="translate(760.3,1205.5) rotate(90)"><text x="0" y="3.5" text-anchor="middle">TUKA-WN-JT-JUNIOR DENIM</text></g><g transform="translate(754.6,1190.5) rotate(90)"><text x="0" y="3.5" text-anchor="middle">FRT BOTTOM</text></g><g transform="translate(748.5,1186.0) rotate(90)"><text x="0" y="3.5" text-anchor="middle">C-2</text></g><g transform="translate(743.0,1184.0) rotate(90)"><text x="0" y="3.5" text-anchor="middle">XS,S,M,L</text></g><g transform="translate(737.4,1180.0) rotate(90)"><text x="0" y="3.5" text-anchor="middle">SH</text></g><g transform="translate(1030.6,1150.0) rotate(-90)"><text x="0" y="3.5" text-anchor="middle">TUKA-WN-JT-JUNIOR DENIM</text></g><g transform="translate(1036.8,1160.8) rotate(-90)"><text x="0" y="3.5" text-anchor="middle">FRT BOTTOM</text></g><g transform="translate(1042.0,1177.5) rotate(-90)"><text x="0" y="3.5" text-anchor="middle">C-2</text></g><g transform="translate(1048.5,1171.8) rotate(-90)"><text x="0" y="3.5" text-anchor="middle">XS,S,M,L</text></g><g transform="translate(1054.7,1175.2) rotate(-90)"><text x="0" y="3.5" text-anchor="middle">SH</text></g><g transform="translate(503.0,993.0) rotate(-90)"><text x="0" y="3.5" text-anchor="middle">TUKA-WN-JT-JUNIOR DENIM</text></g><g transform="translate(509.2,1018.0) rotate(-90)"><text x="0" y="3.5" text-anchor="middle">FRONT FACING</text></g><g transform="translate(514.0,1024.0) rotate(-90)"><text x="0" y="3.5" text-anchor="middle">C-2</text></g><g transform="translate(519.0,1021.5) rotate(-90)"><text x="0" y="3.5" text-anchor="middle">XS,S,M,L</text></g><g transform="translate(524.0,1025.0) rotate(-90)"><text x="0" y="3.5" text-anchor="middle">SH</text></g><g transform="translate(1287.2,1044.5) rotate(90)"><text x="0" y="3.5" text-anchor="middle">TUKA-WN-JT-JUNIOR DENIM</text></g><g transform="translate(1282.0,1009.0) rotate(90)"><text x="0" y="3.5" text-anchor="middle">FRONT FACING</text></g><g transform="translate(1277.5,1012.0) rotate(90)"><text x="0" y="3.5" text-anchor="middle">C-2</text></g><g transform="translate(1272.8,1017.0) rotate(90)"><text x="0" y="3.5" text-anchor="middle">XS,S,M,L</text></g><g transform="translate(1266.6,1010.6) rotate(90)"><text x="0" y="3.5" text-anchor="middle">SH</text></g><g transform="translate(463.8,834.2) rotate(-90)"><text x="0" y="3.5" text-anchor="middle">TUKA-WN-JT-JUNIOR DENIM</text></g><g transform="translate(481.7,862.2) rotate(-90)"><text x="0" y="3.5" text-anchor="middle">XS,S,M,L</text></g><g transform="translate(476.7,866.2) rotate(-90)"><text x="0" y="3.5" text-anchor="middle">PKT</text></g><g transform="translate(486.7,864.2) rotate(-90)"><text x="0" y="3.5" text-anchor="middle">SH</text></g><g transform="translate(529.0,833.5) rotate(-90)"><text x="0" y="3.5" text-anchor="middle">TUKA-WN-JT-JUNIOR DENIM</text></g><g transform="translate(547.5,861.5) rotate(-90)"><text x="0" y="3.5" text-anchor="middle">XS,S,M,L</text></g><g transform="translate(542.5,865.5) rotate(-90)"><text x="0" y="3.5" text-anchor="middle">PKT</text></g><g transform="translate(552.5,863.5) rotate(-90)"><text x="0" y="3.5" text-anchor="middle">SH</text></g><g transform="translate(1202.0,870.3) rotate(90)"><text x="0" y="3.5" text-anchor="middle">TUKA-WN-JT-JUNIOR DENIM</text></g><g transform="translate(1183.8,842.3) rotate(90)"><text x="0" y="3.5" text-anchor="middle">XS,S,M,L</text></g><g transform="translate(1188.8,838.3) rotate(90)"><text x="0" y="3.5" text-anchor="middle">PKT</text></g><g transform="translate(1178.8,840.3) rotate(90)"><text x="0" y="3.5" text-anchor="middle">SH</text></g><g transform="translate(1270.5,870.3) rotate(90)"><text x="0" y="3.5" text-anchor="middle">TUKA-WN-JT-JUNIOR DENIM</text></g><g transform="translate(1252.5,842.3) rotate(90)"><text x="0" y="3.5" text-anchor="middle">XS,S,M,L</text></g><g transform="translate(1257.5,838.3) rotate(90)"><text x="0" y="3.5" text-anchor="middle">PKT</text></g><g transform="translate(1247.5,840.3) rotate(90)"><text x="0" y="3.5" text-anchor="middle">SH</text></g><g transform="translate(526.3,701.0) rotate(-90)"><text x="0" y="3.5" text-anchor="middle">TUKA-WN-JT-JUNIOR DENIM</text></g><g transform="translate(533.0,727.0) rotate(-90)"><text x="0" y="3.5" text-anchor="middle">FLAP</text></g><g transform="translate(538.5,727.0) rotate(-90)"><text x="0" y="3.5" text-anchor="middle">C-2</text></g><g transform="translate(543.4,728.0) rotate(-90)"><text x="0" y="3.5" text-anchor="middle">XS,S,M,L</text></g><g transform="translate(549.7,726.0) rotate(-90)"><text x="0" y="3.5" text-anchor="middle">SH</text></g><g transform="translate(1218.7,737.2) rotate(90)"><text x="0" y="3.5" text-anchor="middle">TUKA-WN-JT-JUNIOR DENIM</text></g><g transform="translate(1212.0,709.2) rotate(90)"><text x="0" y="3.5" text-anchor="middle">FLAP</text></g><g transform="translate(1206.5,709.2) rotate(90)"><text x="0" y="3.5" text-anchor="middle">C-2</text></g><g transform="translate(1201.6,710.2) rotate(90)"><text x="0" y="3.5" text-anchor="middle">XS,S,M,L</text></g><g transform="translate(1195.3,708.2) rotate(90)"><text x="0" y="3.5" text-anchor="middle">SH</text></g><g transform="translate(1956.4,861.0) rotate(-90)"><text x="0" y="3.5" text-anchor="middle">TUKA-WN-JT-JUNIOR DENIM</text></g><g transform="translate(1963.2,869.0) rotate(-90)"><text x="0" y="3.5" text-anchor="middle">CENTER BACK TOP</text></g><g transform="translate(1969.0,886.0) rotate(-90)"><text x="0" y="3.5" text-anchor="middle">C-1</text></g><g transform="translate(1974.7,882.0) rotate(-90)"><text x="0" y="3.5" text-anchor="middle">XS,S,M,L</text></g><g transform="translate(1980.0,885.5) rotate(-90)"><text x="0" y="3.5" text-anchor="middle">SH</text></g><g transform="translate(1861.6,866.0) rotate(-90)"><text x="0" y="3.5" text-anchor="middle">TUKA-WN-JT-JUNIOR DENIM</text></g><g transform="translate(1867.7,878.0) rotate(-90)"><text x="0" y="3.5" text-anchor="middle">MIDDLE TOP BACK</text></g><g transform="translate(1873.5,888.0) rotate(-90)"><text x="0" y="3.5" text-anchor="middle">C-2</text></g><g transform="translate(1878.7,888.0) rotate(-90)"><text x="0" y="3.5" text-anchor="middle">XS,S,M,L</text></g><g transform="translate(1884.7,890.0) rotate(-90)"><text x="0" y="3.5" text-anchor="middle">SH</text></g><g transform="translate(2090.1,910.0) rotate(90)"><text x="0" y="3.5" text-anchor="middle">TUKA-WN-JT-JUNIOR DENIM</text></g><g transform="translate(2082.8,898.0) rotate(90)"><text x="0" y="3.5" text-anchor="middle">MIDDLE TOP BACK</text></g><g transform="translate(2076.0,885.0) rotate(90)"><text x="0" y="3.5" text-anchor="middle">C-2</text></g><g transform="translate(2071.9,888.0) rotate(90)"><text x="0" y="3.5" text-anchor="middle">XS,S,M,L</text></g><g transform="translate(2064.6,883.0) rotate(90)"><text x="0" y="3.5" text-anchor="middle">SH</text></g><g transform="translate(1804.0,884.5) rotate(90)"><text x="0" y="3.5" text-anchor="middle">TUKA-WN-JT-JUNIOR DENIM</text></g><g transform="translate(1797.2,870.0) rotate(90)"><text x="0" y="3.5" text-anchor="middle">SIDE BACK TOP</text></g><g transform="translate(1791.5,868.0) rotate(90)"><text x="0" y="3.5" text-anchor="middle">C-2</text></g><g transform="translate(1786.3,863.0) rotate(90)"><text x="0" y="3.5" text-anchor="middle">XS,S,M,L</text></g><g transform="translate(1780.5,858.0) rotate(90)"><text x="0" y="3.5" text-anchor="middle">SH</text></g><g transform="translate(2172.8,831.5) rotate(-90)"><text x="0" y="3.5" text-anchor="middle">TUKA-WN-JT-JUNIOR DENIM</text></g><g transform="translate(2180.0,844.0) rotate(-90)"><text x="0" y="3.5" text-anchor="middle">SIDE BACK TOP</text></g><g transform="translate(2185.5,850.0) rotate(-90)"><text x="0" y="3.5" text-anchor="middle">C-2</text></g><g transform="translate(2191.0,846.7) rotate(-90)"><text x="0" y="3.5" text-anchor="middle">XS,S,M,L</text></g><g transform="translate(2197.0,856.4) rotate(-90)"><text x="0" y="3.5" text-anchor="middle">SH</text></g><g transform="translate(1897.8,1212.5) rotate(-90)"><text x="0" y="3.5" text-anchor="middle">TUKA-WN-JT-JUNIOR DENIM</text></g><g transform="translate(1906.7,1212.0) rotate(-90)"><text x="0" y="3.5" text-anchor="middle">BACK BOTTOM1</text></g><g transform="translate(1916.0,1220.0) rotate(-90)"><text x="0" y="3.5" text-anchor="middle">C-1</text></g><g transform="translate(1925.6,1220.0) rotate(-90)"><text x="0" y="3.5" text-anchor="middle">XS,S,M,L</text></g><g transform="translate(1935.6,1217.5) rotate(-90)"><text x="0" y="3.5" text-anchor="middle">SH</text></g><text x="512.0" y="203.0" text-anchor="middle">4</text><text x="494.5" y="574.0" text-anchor="middle">5.786</text><text x="603.5" y="574.0" text-anchor="middle">5.786</text><g transform="translate(559.0,410.0) rotate(90)"><text x="0" y="3.5" text-anchor="middle">TUKA-WN-JT-JUNIOR DENIM</text></g><g transform="translate(552.5,391.0) rotate(90)"><text x="0" y="3.5" text-anchor="middle">SLEEVE</text></g><g transform="translate(547.5,388.0) rotate(90)"><text x="0" y="3.5" text-anchor="middle">C-2</text></g><g transform="translate(541.5,388.0) rotate(90)"><text x="0" y="3.5" text-anchor="middle">XS,S,M,L</text></g><g transform="translate(535.5,385.0) rotate(90)"><text x="0" y="3.5" text-anchor="middle">SH</text></g><text x="1328.5" y="190.2" text-anchor="middle">4</text><text x="1346.0" y="561.2" text-anchor="middle">5.786</text><text x="1237.0" y="561.2" text-anchor="middle">5.786</text><g transform="translate(1281.0,348.0) rotate(-90)"><text x="0" y="3.5" text-anchor="middle">TUKA-WN-JT-JUNIOR DENIM</text></g><g transform="translate(1287.5,368.0) rotate(-90)"><text x="0" y="3.5" text-anchor="middle">SLEEVE</text></g><g transform="translate(1292.5,370.0) rotate(-90)"><text x="0" y="3.5" text-anchor="middle">C-2</text></g><g transform="translate(1299.0,365.0) rotate(-90)"><text x="0" y="3.5" text-anchor="middle">XS,S,M,L</text></g><g transform="translate(1305.0,367.0) rotate(-90)"><text x="0" y="3.5" text-anchor="middle">SH</text></g><text x="1984.0" y="454.0" text-anchor="middle">TUKA-WN-JT-JUNIOR DENIM</text><text x="1963.0" y="459.5" text-anchor="middle">COLLAR</text><text x="1958.0" y="464.5" text-anchor="middle">C-2</text><text x="1961.0" y="470.5" text-anchor="middle">XS,S,M,L</text><text x="1955.0" y="476.0" text-anchor="middle">SH</text><g transform="translate(1960.0,606.0) rotate(-90)"><text x="0" y="3.5" text-anchor="middle">TUKA-WN-JT-JUNIOR DENIM</text></g><g transform="translate(1966.5,625.0) rotate(-90)"><text x="0" y="3.5" text-anchor="middle">BACK YOKE</text></g><g transform="translate(1971.0,630.0) rotate(-90)"><text x="0" y="3.5" text-anchor="middle">C-1</text></g><g transform="translate(1976.7,629.0) rotate(-90)"><text x="0" y="3.5" text-anchor="middle">XS,S,M,L</text></g><g transform="translate(1982.5,631.0) rotate(-90)"><text x="0" y="3.5" text-anchor="middle">SH</text></g><rect x="693.0" y="686.9" width="26.4" height="11" fill="#000"/><text x="706.2" y="695.9" text-anchor="middle">2.745</text><rect x="723.3" y="676.0" width="21.4" height="11" fill="#000"/><text x="734.0" y="685.0" text-anchor="middle">0.31</text><rect x="730.8" y="671.5" width="21.4" height="11" fill="#000"/><text x="741.5" y="680.5" text-anchor="middle">1.21</text><rect x="756.1" y="710.1" width="26.4" height="11" fill="#000"/><text x="769.3" y="719.1" text-anchor="middle">4.993</text><rect x="804.8" y="736.5" width="21.4" height="11" fill="#000"/><text x="815.5" y="745.5" text-anchor="middle">1.01</text><rect x="674.8" y="788.9" width="26.4" height="11" fill="#000"/><text x="688.0" y="797.9" text-anchor="middle">9.959</text><rect x="808.9" y="890.1" width="31.5" height="11" fill="#000"/><text x="824.7" y="899.1" text-anchor="middle">16.329</text><rect x="613.7" y="933.3" width="26.4" height="11" fill="#000"/><text x="626.9" y="942.3" text-anchor="middle">8.981</text><rect x="674.8" y="1031.7" width="26.4" height="11" fill="#000"/><text x="688.0" y="1040.7" text-anchor="middle">6.835</text><rect x="759.3" y="1042.0" width="21.4" height="11" fill="#000"/><text x="770.0" y="1051.0" text-anchor="middle">2.08</text><rect x="795.8" y="1042.5" width="26.4" height="11" fill="#000"/><text x="809.0" y="1051.5" text-anchor="middle">1.873</text><rect x="1025.6" y="689.4" width="26.4" height="11" fill="#000"/><text x="1038.8" y="698.4" text-anchor="middle">2.745</text><rect x="1000.3" y="678.5" width="21.4" height="11" fill="#000"/><text x="1011.0" y="687.5" text-anchor="middle">0.31</text><rect x="992.8" y="674.0" width="21.4" height="11" fill="#000"/><text x="1003.5" y="683.0" text-anchor="middle">1.21</text><rect x="962.5" y="712.6" width="26.4" height="11" fill="#000"/><text x="975.7" y="721.6" text-anchor="middle">4.993</text><rect x="918.8" y="739.0" width="21.4" height="11" fill="#000"/><text x="929.5" y="748.0" text-anchor="middle">1.01</text><rect x="1043.8" y="791.4" width="26.4" height="11" fill="#000"/><text x="1057.0" y="800.4" text-anchor="middle">9.959</text><rect x="904.5" y="892.6" width="31.5" height="11" fill="#000"/><text x="920.3" y="901.6" text-anchor="middle">16.329</text><rect x="1104.9" y="935.8" width="26.4" height="11" fill="#000"/><text x="1118.1" y="944.8" text-anchor="middle">8.981</text><rect x="1043.8" y="1034.2" width="26.4" height="11" fill="#000"/><text x="1057.0" y="1043.2" text-anchor="middle">6.835</text><rect x="964.3" y="1044.5" width="21.4" height="11" fill="#000"/><text x="975.0" y="1053.5" text-anchor="middle">2.08</text><rect x="922.8" y="1045.0" width="26.4" height="11" fill="#000"/><text x="936.0" y="1054.0" text-anchor="middle">1.873</text><rect x="721.8" y="1078.0" width="26.4" height="11" fill="#000"/><text x="735.0" y="1087.0" text-anchor="middle">6.674</text><rect x="792.8" y="1082.2" width="26.4" height="11" fill="#000"/><text x="806.0" y="1091.2" text-anchor="middle">0.705</text><rect x="809.3" y="1082.2" width="21.4" height="11" fill="#000"/><text x="820.0" y="1091.2" text-anchor="middle">.786</text><rect x="625.2" y="1178.9" width="31.5" height="11" fill="#000"/><text x="641.0" y="1187.9" text-anchor="middle">12.558</text><rect x="807.0" y="1188.0" width="31.5" height="11" fill="#000"/><text x="822.8" y="1197.0" text-anchor="middle">11.341</text><rect x="810.6" y="1305.4" width="26.4" height="11" fill="#000"/><text x="823.8" y="1314.4" text-anchor="middle">1.086</text><rect x="697.6" y="1306.7" width="21.4" height="11" fill="#000"/><text x="708.3" y="1315.7" text-anchor="middle">9.65</text><rect x="792.8" y="1314.0" width="26.4" height="11" fill="#000"/><text x="806.0" y="1323.0" text-anchor="middle">0.786</text><rect x="812.9" y="1314.0" width="16.3" height="11" fill="#000"/><text x="821.0" y="1323.0" text-anchor="middle">.52</text><rect x="1043.7" y="1078.0" width="26.4" height="11" fill="#000"/><text x="1056.9" y="1087.0" text-anchor="middle">6.674</text><rect x="972.7" y="1082.2" width="26.4" height="11" fill="#000"/><text x="985.9" y="1091.2" text-anchor="middle">0.705</text><rect x="961.2" y="1082.2" width="21.4" height="11" fill="#000"/><text x="971.9" y="1091.2" text-anchor="middle">.786</text><rect x="1135.1" y="1178.9" width="31.5" height="11" fill="#000"/><text x="1150.9" y="1187.9" text-anchor="middle">12.558</text><rect x="953.3" y="1188.0" width="31.5" height="11" fill="#000"/><text x="969.1" y="1197.0" text-anchor="middle">11.341</text><rect x="954.9" y="1305.4" width="26.4" height="11" fill="#000"/><text x="968.1" y="1314.4" text-anchor="middle">1.086</text><rect x="1072.9" y="1306.7" width="21.4" height="11" fill="#000"/><text x="1083.6" y="1315.7" text-anchor="middle">9.65</text><rect x="972.7" y="1314.0" width="26.4" height="11" fill="#000"/><text x="985.9" y="1323.0" text-anchor="middle">0.786</text><rect x="962.8" y="1314.0" width="16.3" height="11" fill="#000"/><text x="970.9" y="1323.0" text-anchor="middle">.52</text><rect x="464.1" y="927.9" width="21.4" height="11" fill="#000"/><text x="474.8" y="936.9" text-anchor="middle">1.21</text><rect x="489.4" y="966.2" width="26.4" height="11" fill="#000"/><text x="502.6" y="975.2" text-anchor="middle">4.986</text><rect x="539.0" y="993.3" width="21.4" height="11" fill="#000"/><text x="549.7" y="1002.3" text-anchor="middle">1.01</text><rect x="490.2" y="1057.0" width="31.5" height="11" fill="#000"/><text x="506.0" y="1066.0" text-anchor="middle">13.981</text><rect x="543.5" y="1146.8" width="31.5" height="11" fill="#000"/><text x="559.3" y="1155.8" text-anchor="middle">16.329</text><rect x="509.8" y="1243.0" width="26.4" height="11" fill="#000"/><text x="523.0" y="1252.0" text-anchor="middle">6.068</text><rect x="528.2" y="1299.9" width="26.4" height="11" fill="#000"/><text x="541.4" y="1308.9" text-anchor="middle">1.873</text><rect x="1306.4" y="909.2" width="21.4" height="11" fill="#000"/><text x="1317.1" y="918.2" text-anchor="middle">1.21</text><rect x="1276.1" y="947.5" width="26.4" height="11" fill="#000"/><text x="1289.3" y="956.5" text-anchor="middle">4.986</text><rect x="1231.5" y="974.6" width="21.4" height="11" fill="#000"/><text x="1242.2" y="983.6" text-anchor="middle">1.01</text><rect x="1270.1" y="1038.3" width="31.5" height="11" fill="#000"/><text x="1285.9" y="1047.3" text-anchor="middle">13.981</text><rect x="1216.8" y="1128.1" width="31.5" height="11" fill="#000"/><text x="1232.6" y="1137.1" text-anchor="middle">16.329</text><rect x="1255.7" y="1224.3" width="26.4" height="11" fill="#000"/><text x="1268.9" y="1233.3" text-anchor="middle">6.068</text><rect x="1237.3" y="1281.2" width="26.4" height="11" fill="#000"/><text x="1250.5" y="1290.2" text-anchor="middle">1.873</text><rect x="461.5" y="820.8" width="26.4" height="11" fill="#000"/><text x="474.7" y="829.8" text-anchor="middle">1.921</text><rect x="461.5" y="896.7" width="26.4" height="11" fill="#000"/><text x="474.7" y="905.7" text-anchor="middle">1.921</text><rect x="443.7" y="858.8" width="26.4" height="11" fill="#000"/><text x="456.9" y="867.8" text-anchor="middle">4.061</text><rect x="479.3" y="858.8" width="26.4" height="11" fill="#000"/><text x="492.5" y="867.8" text-anchor="middle">4.071</text><rect x="527.2" y="820.1" width="26.4" height="11" fill="#000"/><text x="540.5" y="829.1" text-anchor="middle">1.921</text><rect x="527.2" y="895.8" width="26.4" height="11" fill="#000"/><text x="540.5" y="904.8" text-anchor="middle">1.921</text><rect x="509.3" y="858.0" width="26.4" height="11" fill="#000"/><text x="522.5" y="867.0" text-anchor="middle">4.061</text><rect x="545.2" y="858.0" width="26.4" height="11" fill="#000"/><text x="558.4" y="867.0" text-anchor="middle">4.071</text><rect x="1177.6" y="796.7" width="26.4" height="11" fill="#000"/><text x="1190.8" y="805.7" text-anchor="middle">1.921</text><rect x="1177.6" y="872.9" width="26.4" height="11" fill="#000"/><text x="1190.8" y="881.9" text-anchor="middle">1.921</text><rect x="1159.6" y="834.8" width="26.4" height="11" fill="#000"/><text x="1172.8" y="843.8" text-anchor="middle">4.071</text><rect x="1195.6" y="834.8" width="26.4" height="11" fill="#000"/><text x="1208.8" y="843.8" text-anchor="middle">4.061</text><rect x="1246.3" y="796.7" width="26.4" height="11" fill="#000"/><text x="1259.5" y="805.7" text-anchor="middle">1.921</text><rect x="1246.3" y="872.9" width="26.4" height="11" fill="#000"/><text x="1259.5" y="881.9" text-anchor="middle">1.921</text><rect x="1228.4" y="834.8" width="26.4" height="11" fill="#000"/><text x="1241.6" y="843.8" text-anchor="middle">4.071</text><rect x="1264.3" y="834.8" width="26.4" height="11" fill="#000"/><text x="1277.5" y="843.8" text-anchor="middle">4.061</text><rect x="523.1" y="702.5" width="26.4" height="11" fill="#000"/><text x="536.3" y="711.5" text-anchor="middle">4.105</text><rect x="485.6" y="717.0" width="26.4" height="11" fill="#000"/><text x="498.8" y="726.0" text-anchor="middle">1.582</text><rect x="560.8" y="717.0" width="26.4" height="11" fill="#000"/><text x="574.0" y="726.0" text-anchor="middle">1.577</text><rect x="505.2" y="737.0" width="26.4" height="11" fill="#000"/><text x="518.4" y="746.0" text-anchor="middle">2.021</text><rect x="543.1" y="737.0" width="21.4" height="11" fill="#000"/><text x="553.8" y="746.0" text-anchor="middle">2.02</text><rect x="1195.5" y="684.7" width="26.4" height="11" fill="#000"/><text x="1208.7" y="693.7" text-anchor="middle">4.105</text><rect x="1233.0" y="699.2" width="26.4" height="11" fill="#000"/><text x="1246.2" y="708.2" text-anchor="middle">1.582</text><rect x="1157.8" y="699.2" width="26.4" height="11" fill="#000"/><text x="1171.0" y="708.2" text-anchor="middle">1.577</text><rect x="1213.4" y="719.2" width="26.4" height="11" fill="#000"/><text x="1226.6" y="728.2" text-anchor="middle">2.021</text><rect x="1178.0" y="719.2" width="26.4" height="11" fill="#000"/><text x="1191.2" y="728.2" text-anchor="middle">2.022</text><rect x="1939.6" y="763.4" width="26.4" height="11" fill="#000"/><text x="1952.8" y="772.4" text-anchor="middle">1.881</text><rect x="1974.8" y="763.4" width="26.4" height="11" fill="#000"/><text x="1988.0" y="772.4" text-anchor="middle">1.881</text><rect x="1919.7" y="787.2" width="26.4" height="11" fill="#000"/><text x="1932.9" y="796.2" text-anchor="middle">2.582</text><rect x="1994.3" y="787.2" width="26.4" height="11" fill="#000"/><text x="2007.5" y="796.2" text-anchor="middle">2.582</text><rect x="1919.0" y="814.9" width="21.4" height="11" fill="#000"/><text x="1929.7" y="823.9" text-anchor="middle">0.22</text><rect x="1999.3" y="814.9" width="21.4" height="11" fill="#000"/><text x="2010.0" y="823.9" text-anchor="middle">0.22</text><rect x="1912.8" y="844.1" width="26.4" height="11" fill="#000"/><text x="1926.0" y="853.1" text-anchor="middle">2.694</text><rect x="2005.1" y="925.0" width="31.5" height="11" fill="#000"/><text x="2020.9" y="934.0" text-anchor="middle">11.391</text><rect x="1903.1" y="951.0" width="26.4" height="11" fill="#000"/><text x="1916.3" y="960.0" text-anchor="middle">8.698</text><rect x="1926.2" y="1032.0" width="26.4" height="11" fill="#000"/><text x="1939.4" y="1041.0" text-anchor="middle">3.312</text><rect x="1988.2" y="1032.0" width="26.4" height="11" fill="#000"/><text x="2001.4" y="1041.0" text-anchor="middle">3.312</text><rect x="1835.1" y="770.7" width="26.4" height="11" fill="#000"/><text x="1848.3" y="779.7" text-anchor="middle">0.808</text><rect x="1866.2" y="770.2" width="26.4" height="11" fill="#000"/><text x="1879.4" y="779.2" text-anchor="middle">2.529</text><rect x="1833.9" y="796.2" width="21.4" height="11" fill="#000"/><text x="1844.6" y="805.2" text-anchor="middle">2.67</text><rect x="1888.1" y="793.3" width="26.4" height="11" fill="#000"/><text x="1901.3" y="802.3" text-anchor="middle">2.602</text><rect x="1884.9" y="821.2" width="26.4" height="11" fill="#000"/><text x="1898.1" y="830.2" text-anchor="middle">0.416</text><rect x="1833.8" y="824.2" width="26.4" height="11" fill="#000"/><text x="1847.0" y="833.2" text-anchor="middle">0.415</text><rect x="1836.8" y="832.0" width="21.4" height="11" fill="#000"/><text x="1847.5" y="841.0" text-anchor="middle">0.25</text><rect x="1883.2" y="850.2" width="26.4" height="11" fill="#000"/><text x="1896.4" y="859.2" text-anchor="middle">2.668</text><rect x="1832.6" y="855.8" width="26.4" height="11" fill="#000"/><text x="1845.8" y="864.8" text-anchor="middle">2.048</text><rect x="1839.4" y="955.9" width="26.4" height="11" fill="#000"/><text x="1852.6" y="964.9" text-anchor="middle">8.659</text><rect x="1880.1" y="955.9" width="21.4" height="11" fill="#000"/><text x="1890.8" y="964.9" text-anchor="middle">8.62</text><rect x="1858.2" y="1036.8" width="26.4" height="11" fill="#000"/><text x="1871.4" y="1045.8" text-anchor="middle">1.668</text><rect x="2090.6" y="757.5" width="26.4" height="11" fill="#000"/><text x="2103.8" y="766.5" text-anchor="middle">0.808</text><rect x="2059.5" y="757.0" width="26.4" height="11" fill="#000"/><text x="2072.7" y="766.0" text-anchor="middle">2.529</text><rect x="2096.8" y="783.0" width="21.4" height="11" fill="#000"/><text x="2107.5" y="792.0" text-anchor="middle">2.67</text><rect x="2037.6" y="780.1" width="26.4" height="11" fill="#000"/><text x="2050.8" y="789.1" text-anchor="middle">2.602</text><rect x="2040.8" y="808.0" width="26.4" height="11" fill="#000"/><text x="2054.0" y="817.0" text-anchor="middle">0.416</text><rect x="2091.9" y="811.0" width="26.4" height="11" fill="#000"/><text x="2105.1" y="820.0" text-anchor="middle">0.415</text><rect x="2093.9" y="818.8" width="21.4" height="11" fill="#000"/><text x="2104.6" y="827.8" text-anchor="middle">0.25</text><rect x="2042.5" y="837.0" width="26.4" height="11" fill="#000"/><text x="2055.7" y="846.0" text-anchor="middle">2.668</text><rect x="2093.1" y="842.6" width="26.4" height="11" fill="#000"/><text x="2106.3" y="851.6" text-anchor="middle">2.048</text><rect x="2086.3" y="942.7" width="26.4" height="11" fill="#000"/><text x="2099.5" y="951.7" text-anchor="middle">8.659</text><rect x="2050.6" y="942.7" width="21.4" height="11" fill="#000"/><text x="2061.3" y="951.7" text-anchor="middle">8.62</text><rect x="2067.5" y="1023.6" width="26.4" height="11" fill="#000"/><text x="2080.7" y="1032.6" text-anchor="middle">1.668</text><rect x="1795.0" y="758.5" width="26.4" height="11" fill="#000"/><text x="1808.2" y="767.5" text-anchor="middle">1.511</text><rect x="1809.6" y="783.3" width="26.4" height="11" fill="#000"/><text x="1822.8" y="792.3" text-anchor="middle">2.665</text><rect x="1813.3" y="811.3" width="21.4" height="11" fill="#000"/><text x="1824.0" y="820.3" text-anchor="middle">0.27</text><rect x="1810.8" y="821.2" width="26.4" height="11" fill="#000"/><text x="1824.0" y="830.2" text-anchor="middle">0.006</text><rect x="1814.5" y="843.1" width="21.4" height="11" fill="#000"/><text x="1825.2" y="852.1" text-anchor="middle">2.03</text><rect x="1768.2" y="818.8" width="26.4" height="11" fill="#000"/><text x="1781.4" y="827.8" text-anchor="middle">6.585</text><rect x="1734.9" y="945.7" width="26.4" height="11" fill="#000"/><text x="1748.1" y="954.7" text-anchor="middle">8.982</text><rect x="1808.3" y="944.0" width="26.4" height="11" fill="#000"/><text x="1821.5" y="953.0" text-anchor="middle">8.678</text><rect x="1770.7" y="1025.2" width="26.4" height="11" fill="#000"/><text x="1783.9" y="1034.2" text-anchor="middle">3.447</text><rect x="2157.5" y="757.3" width="26.4" height="11" fill="#000"/><text x="2170.7" y="766.3" text-anchor="middle">1.511</text><rect x="2142.9" y="782.1" width="26.4" height="11" fill="#000"/><text x="2156.1" y="791.1" text-anchor="middle">2.665</text><rect x="2144.2" y="810.1" width="21.4" height="11" fill="#000"/><text x="2154.9" y="819.1" text-anchor="middle">0.27</text><rect x="2141.7" y="820.0" width="26.4" height="11" fill="#000"/><text x="2154.9" y="829.0" text-anchor="middle">0.006</text><rect x="2143.0" y="841.9" width="21.4" height="11" fill="#000"/><text x="2153.7" y="850.9" text-anchor="middle">2.03</text><rect x="2184.3" y="817.6" width="26.4" height="11" fill="#000"/><text x="2197.5" y="826.6" text-anchor="middle">6.585</text><rect x="2217.6" y="944.5" width="26.4" height="11" fill="#000"/><text x="2230.8" y="953.5" text-anchor="middle">8.982</text><rect x="2144.2" y="942.8" width="26.4" height="11" fill="#000"/><text x="2157.4" y="951.8" text-anchor="middle">8.678</text><rect x="2181.8" y="1024.0" width="26.4" height="11" fill="#000"/><text x="2195.0" y="1033.0" text-anchor="middle">3.447</text><rect x="1799.0" y="1101.2" width="26.4" height="11" fill="#000"/><text x="1812.2" y="1110.2" text-anchor="middle">3.949</text><rect x="1845.7" y="1106.3" width="26.4" height="11" fill="#000"/><text x="1858.9" y="1115.3" text-anchor="middle">1.668</text><rect x="1884.1" y="1108.5" width="26.4" height="11" fill="#000"/><text x="1897.3" y="1117.5" text-anchor="middle">2.438</text><rect x="1929.0" y="1108.5" width="26.4" height="11" fill="#000"/><text x="1942.2" y="1117.5" text-anchor="middle">2.437</text><rect x="1999.0" y="1102.3" width="26.4" height="11" fill="#000"/><text x="2012.2" y="1111.3" text-anchor="middle">5.019</text><rect x="1733.1" y="1207.2" width="31.5" height="11" fill="#000"/><text x="1748.9" y="1216.2" text-anchor="middle">12.557</text><rect x="2074.9" y="1207.2" width="31.5" height="11" fill="#000"/><text x="2090.7" y="1216.2" text-anchor="middle">12.557</text><rect x="1806.4" y="1336.1" width="31.5" height="11" fill="#000"/><text x="1822.2" y="1345.1" text-anchor="middle">10.453</text><rect x="2000.9" y="1336.1" width="31.5" height="11" fill="#000"/><text x="2016.7" y="1345.1" text-anchor="middle">10.446</text><rect x="432.8" y="265.0" width="26.4" height="11" fill="#000"/><text x="446.0" y="274.0" text-anchor="middle">6.581</text><rect x="609.2" y="247.0" width="31.5" height="11" fill="#000"/><text x="625.0" y="256.0" text-anchor="middle">10.072</text><rect x="536.3" y="190.0" width="26.4" height="11" fill="#000"/><text x="549.5" y="199.0" text-anchor="middle">0.218</text><rect x="410.2" y="435.0" width="31.5" height="11" fill="#000"/><text x="426.0" y="444.0" text-anchor="middle">13.972</text><rect x="655.7" y="435.0" width="31.5" height="11" fill="#000"/><text x="671.5" y="444.0" text-anchor="middle">13.974</text><rect x="1381.3" y="252.2" width="26.4" height="11" fill="#000"/><text x="1394.5" y="261.2" text-anchor="middle">6.581</text><rect x="1199.7" y="234.2" width="31.5" height="11" fill="#000"/><text x="1215.5" y="243.2" text-anchor="middle">10.072</text><rect x="1277.8" y="177.2" width="26.4" height="11" fill="#000"/><text x="1291.0" y="186.2" text-anchor="middle">0.218</text><rect x="1398.7" y="422.2" width="31.5" height="11" fill="#000"/><text x="1414.5" y="431.2" text-anchor="middle">13.972</text><rect x="1153.2" y="422.2" width="31.5" height="11" fill="#000"/><text x="1169.0" y="431.2" text-anchor="middle">13.974</text><rect x="1851.3" y="437.1" width="21.4" height="11" fill="#000"/><text x="1862.0" y="446.1" text-anchor="middle">9.88</text><rect x="2036.3" y="437.1" width="21.4" height="11" fill="#000"/><text x="2047.0" y="446.1" text-anchor="middle">9.88</text><rect x="1762.3" y="456.5" width="26.4" height="11" fill="#000"/><text x="1775.5" y="465.5" text-anchor="middle">2.368</text><rect x="2121.3" y="456.5" width="26.4" height="11" fill="#000"/><text x="2134.5" y="465.5" text-anchor="middle">2.368</text><rect x="1775.4" y="485.5" width="16.3" height="11" fill="#000"/><text x="1783.5" y="494.5" text-anchor="middle">0.8</text><rect x="2119.4" y="485.0" width="16.3" height="11" fill="#000"/><text x="2127.5" y="494.0" text-anchor="middle">0.8</text><rect x="1820.3" y="497.8" width="21.4" height="11" fill="#000"/><text x="1831.0" y="506.8" text-anchor="middle">4.99</text><rect x="1901.2" y="500.0" width="26.4" height="11" fill="#000"/><text x="1914.4" y="509.0" text-anchor="middle">3.846</text><rect x="1941.8" y="500.1" width="26.4" height="11" fill="#000"/><text x="1955.0" y="509.1" text-anchor="middle">0.007</text><rect x="1983.5" y="500.0" width="26.4" height="11" fill="#000"/><text x="1996.7" y="509.0" text-anchor="middle">3.846</text><rect x="2068.3" y="496.5" width="21.4" height="11" fill="#000"/><text x="2079.0" y="505.5" text-anchor="middle">4.99</text><rect x="1846.0" y="672.3" width="21.4" height="11" fill="#000"/><text x="1856.7" y="681.3" text-anchor="middle">1.51</text><rect x="1890.1" y="672.3" width="26.4" height="11" fill="#000"/><text x="1903.3" y="681.3" text-anchor="middle">3.352</text><rect x="1939.0" y="672.3" width="26.4" height="11" fill="#000"/><text x="1952.2" y="681.3" text-anchor="middle">1.881</text><rect x="1974.6" y="672.3" width="26.4" height="11" fill="#000"/><text x="1987.8" y="681.3" text-anchor="middle">1.881</text><rect x="2023.5" y="672.3" width="26.4" height="11" fill="#000"/><text x="2036.7" y="681.3" text-anchor="middle">3.352</text><rect x="2071.5" y="672.3" width="21.4" height="11" fill="#000"/><text x="2082.2" y="681.3" text-anchor="middle">1.51</text><rect x="1848.8" y="580.0" width="26.4" height="11" fill="#000"/><text x="1862.0" y="589.0" text-anchor="middle">2.745</text><rect x="2065.3" y="580.0" width="26.4" height="11" fill="#000"/><text x="2078.5" y="589.0" text-anchor="middle">2.745</text><rect x="1916.8" y="579.0" width="26.4" height="11" fill="#000"/><text x="1930.0" y="588.0" text-anchor="middle">3.763</text><rect x="1996.8" y="579.0" width="26.4" height="11" fill="#000"/><text x="2010.0" y="588.0" text-anchor="middle">3.763</text><rect x="1957.2" y="587.0" width="26.4" height="11" fill="#000"/><text x="1970.4" y="596.0" text-anchor="middle">0.002</text><rect x="1881.3" y="561.2" width="26.4" height="11" fill="#000"/><text x="1894.5" y="570.2" text-anchor="middle">1.321</text><rect x="2031.3" y="561.2" width="26.4" height="11" fill="#000"/><text x="2044.5" y="570.2" text-anchor="middle">1.321</text><rect x="1833.3" y="632.3" width="21.4" height="11" fill="#000"/><text x="1844.0" y="641.3" text-anchor="middle">4.24</text><rect x="2083.7" y="632.3" width="21.4" height="11" fill="#000"/><text x="2094.4" y="641.3" text-anchor="middle">4.24</text></g><path d="M1029.500 633.500v15.500l3.600-3.400 3 6.600 2.200-1-3-6.400h5z" fill="#fff" stroke="#000" stroke-width="1"/></g><rect x="2" y="1388" width="2556" height="20" fill="#f0f0f0"/><rect x="2" y="1388" width="2556" height="1" fill="#dcdcdc"/><text x="1929" y="1403" font-size="12" fill="#111" textLength="190" lengthAdjust="spacingAndGlyphs">Select Piece(s), Point(s), Internal(s)...</text><text x="2138.5" y="1403" font-size="12" fill="#111" textLength="27" lengthAdjust="spacingAndGlyphs">FLAP</text><text x="2185" y="1403" font-size="12" fill="#111" textLength="21" lengthAdjust="spacingAndGlyphs">Sew</text><text x="2235" y="1403" font-size="12" fill="#111" textLength="70" lengthAdjust="spacingAndGlyphs">Auto Reseam</text><text x="2335.5" y="1403" font-size="12" fill="#111" textLength="9" lengthAdjust="spacingAndGlyphs">in</text><text x="2353" y="1403" font-size="12" fill="#111" textLength="36" lengthAdjust="spacingAndGlyphs">X:-11.3</text><text x="2398" y="1403" font-size="12" fill="#111" textLength="28" lengthAdjust="spacingAndGlyphs">Y: 7.2</text><rect x="2127.0" y="1390" width="1" height="16" fill="#d7d7d7"/><rect x="2174.0" y="1390" width="1" height="16" fill="#d7d7d7"/><rect x="2215.0" y="1390" width="1" height="16" fill="#d7d7d7"/><rect x="2313.0" y="1390" width="1" height="16" fill="#d7d7d7"/><rect x="2347.0" y="1390" width="1" height="16" fill="#d7d7d7"/><rect x="2391.0" y="1390" width="1" height="16" fill="#d7d7d7"/><rect x="2429.0" y="1390" width="1" height="16" fill="#d7d7d7"/><rect x="2434" y="1391" width="71" height="16" fill="#1d1d12"/><text x="2438" y="1403" font-size="11.5" font-weight="bold" fill="#fff" textLength="41" lengthAdjust="spacingAndGlyphs">TUKA</text><text x="2478" y="1403" font-size="9.5" font-weight="bold" fill="#fff" textLength="25" lengthAdjust="spacingAndGlyphs">CAD</text><rect x="2506" y="1392" width="29" height="14" fill="#10140f"/><text x="2508" y="1404.5" font-size="14.5" font-weight="bold" fill="#fff" textLength="25" lengthAdjust="spacingAndGlyphs">TE</text><g shape-rendering="crispEdges"><rect x="2536" y="1391" width="17" height="16" fill="#0b3fb8"/><rect x="2537" y="1392" width="8" height="7" fill="#f6f000"/><rect x="2545" y="1391" width="8" height="8" fill="#d63ae6"/><rect x="2537" y="1400" width="7" height="7" fill="#0d49c8"/><rect x="2545" y="1400" width="8" height="7" fill="#36b6f2"/><rect x="2541" y="1395" width="7" height="7" fill="#f01010"/><rect x="2544" y="1397" width="2" height="2" fill="#ffd83a"/></g><rect x="0" y="0" width="1.500" height="1410" fill="#1a8fe0"/><rect x="2558" y="0" width="2" height="1410" fill="#0a2f9e"/><rect x="0" y="1408" width="2560" height="2" fill="url(#bd)"/><rect x="0" y="1410" width="2560" height="30" fill="url(#tb)"/><g fill="#000"><path d="M10 1419.3l6.6-.9v6.3H10zM17.4 1418.3l8.6-1.3v7.7h-8.6zM10 1425.5h6.6v6.3l-6.6-.9zM17.4 1425.5H26v7.7l-8.6-1.3z"/></g><g stroke="#000" fill="none" stroke-width="1.2" shape-rendering="crispEdges"><rect x="49.5" y="1420.5" width="8" height="9"/><path d="M46 1418h9M46 1432h9M60.5 1418v3M60.5 1424v3M60.5 1430v3"/></g><rect x="79" y="1438" width="28" height="2" fill="#1883d7"/><g shape-rendering="crispEdges"><path d="M84 1417h7l2 2h8v4H84z" fill="#f0b93a"/><rect x="84" y="1421" width="17" height="11" fill="#f8d66b"/><path d="M87 1432v-6h11v6h-3v-3h-5v3z" fill="#2f7fe0"/></g><rect x="112" y="1410" width="36" height="28" fill="#e6f1f7"/><rect x="112" y="1438" width="36" height="2" fill="#1883d7"/><g transform="translate(118,1413)"><g shape-rendering="crispEdges"><path d="M4.5 4v16M4.5 5.500h2.500M4.500 8.500h2M4.500 11.500h2.500M4.500 14.500h2M4.500 17.500h2.500M4.500 19.500h3" stroke="#000" fill="none"/><path d="M10 4.500h2.500v2.500l1.500 1.500v2.500l-1 1.500 .500 1 1 2v4.500h-6.500v-4.500l1-2 .500-1-1-1.500v-2.500l1.500-1.500z" fill="#f2e25a" stroke="#c8a800" stroke-width=".7"/><path d="M9 12h4M9 15h4.500M8.500 18h5.500" stroke="#d8b820" stroke-width=".7" fill="none"/><path d="M13.500 5.500l1.500 .500 1.500-1 1.500 1 1.500-.500-.800 2.500v1.500h-4.400v-1.500z" fill="#d23be0"/><rect x="15" y="4" width="3.500" height="1.500" fill="#222"/><rect x="16" y="6.500" width="1.500" height="1.500" fill="#f6d8fa"/><path d="M14 10h5.500l.500 4-1 .500v5.500h-1.500v-5.500h-1.500v5.500h-1.500v-5.500l-1-.500z" fill="#3a8fe8"/><rect x="16" y="11" width="1.500" height="1.500" fill="#3fd06a"/></g></g><path d="M2296 1428.5l6-6 6 6" stroke="#111" stroke-width="1.4" fill="none"/><path d="M2320 1432c4-8 9-12 13-14-2 5-6 10-13 14z" fill="#c9b6d8" stroke="#9a35c8" stroke-width="1"/><g stroke="#111" fill="none" stroke-width="1.1"><rect x="2346" y="1420" width="7" height="10" rx="2"/><path d="M2353 1424l3-2v6l-3-2M2347 1418h5M2347 1433h5"/></g><g stroke="#111" fill="none" stroke-width="1.1"><path d="M2368 1423h2.500l3.500-3.500v11l-3.500-3.500h-2.500z"/><path d="M2376.500 1422.500q2 2.500 0 5M2379 1420.500q3.500 4.500 0 9"/></g><g stroke="#111" fill="none" stroke-width="1.2" shape-rendering="crispEdges"><path d="M2394.500 1420.500h12v9h-12zM2391 1418v4M2390 1418.500h4M2396 1433.500h6M2399.500 1430v3"/></g><text x="2416" y="1429" font-size="12" fill="#111" textLength="22" lengthAdjust="spacingAndGlyphs">ENG</text><text x="2455" y="1429" font-size="12" fill="#111" textLength="42.5" lengthAdjust="spacingAndGlyphs">4:29 AM</text><path d="M2519 1417h16v13h-5l-3 3-3-3h-5z" fill="#000"/><path d="M2522 1420.500h10M2522 1423.500h10M2522 1426.500h6" stroke="#dbe6ef" stroke-width="1"/><rect x="2555" y="1410" width="1" height="30" fill="#9fb0bf"/></svg></body></html>
